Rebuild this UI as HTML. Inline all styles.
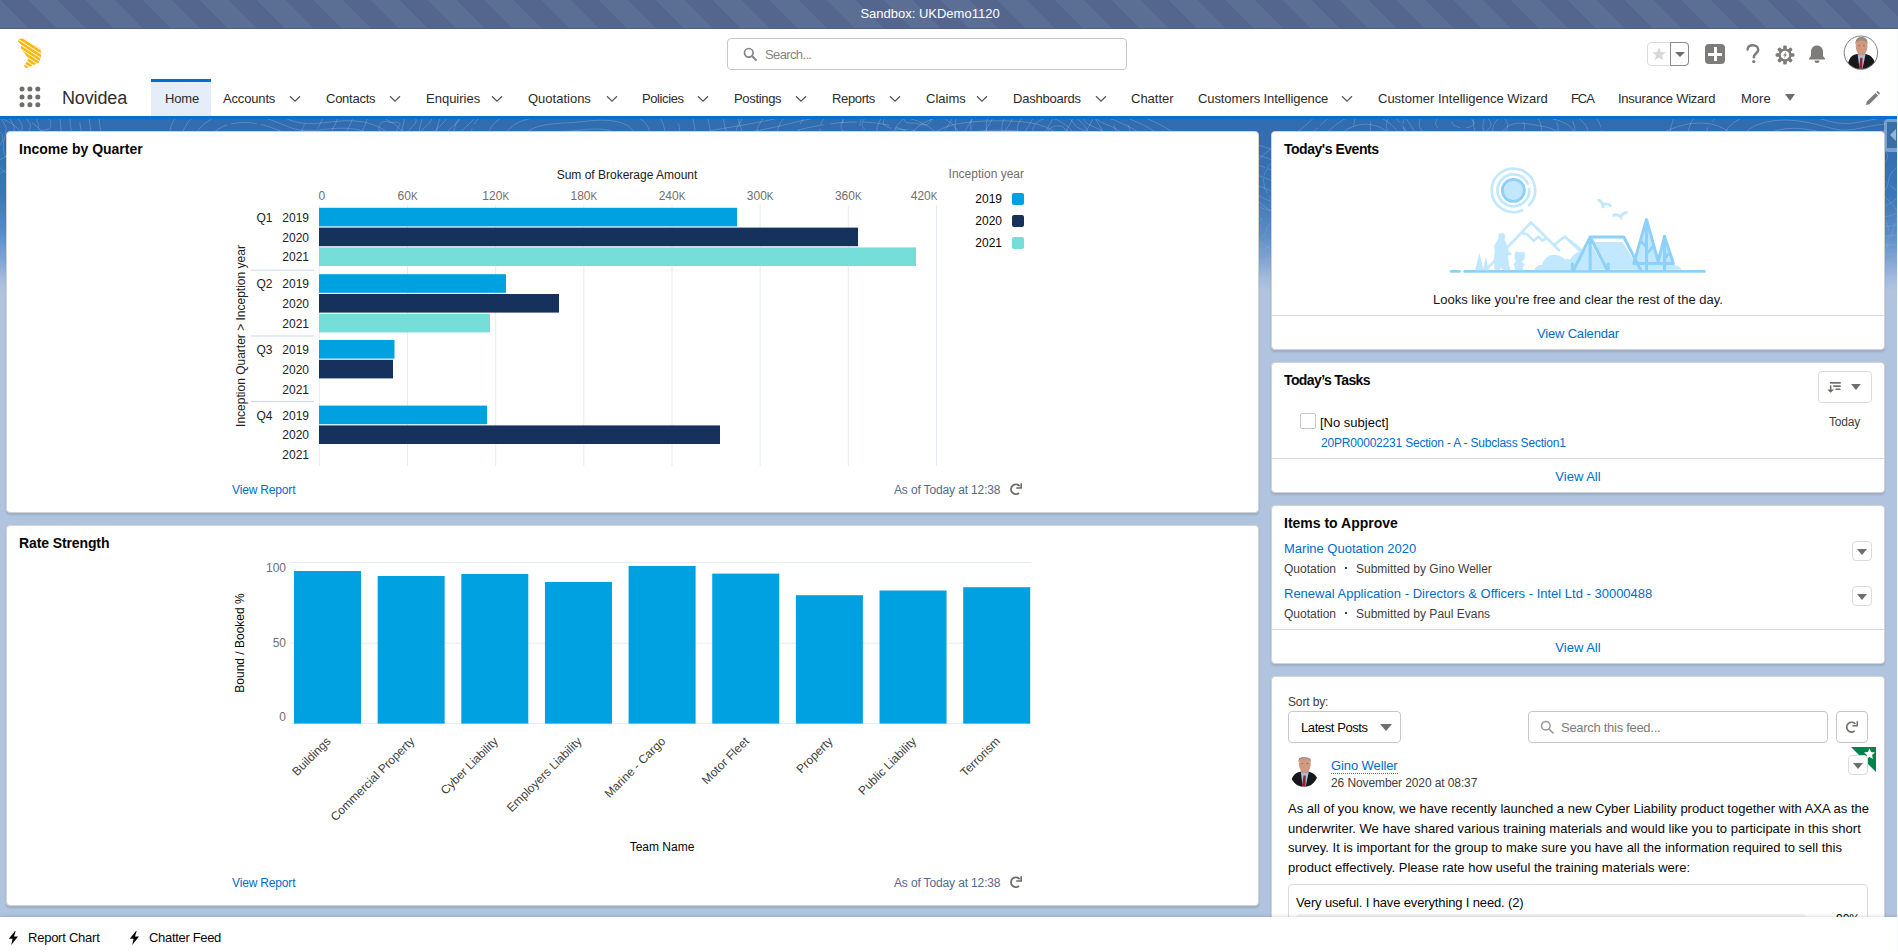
<!DOCTYPE html><html><head><meta charset="utf-8"><style>
*{box-sizing:border-box;margin:0;padding:0}
html,body{width:1898px;height:952px;overflow:hidden}
body{position:relative;font-family:"Liberation Sans",sans-serif;background:#b0c4df;color:#080707}
.a{position:absolute;white-space:nowrap}
#sandbox{left:0;top:0;width:1898px;height:29px;background:#55678f;border-bottom:1px solid #4f6189;
 background-image:repeating-linear-gradient(45deg,#5b6e94 0 20px,#54668e 20px 40.3px);background-position:0 0}
#sandbox span{position:absolute;left:0;width:1860px;top:6px;text-align:center;color:#fff;font-size:13px}
#header{left:0;top:29px;width:1898px;height:87px;background:#fff}
#navline{left:0;top:116px;width:1898px;height:3px;background:#0070d2}
#banner{left:0;top:119px;width:1898px;height:180px;
 background:linear-gradient(to bottom,#306cae 0px,#3470b3 40px,#3b76b9 75px,#5a8cc6 114px,#7fa3d2 140px,#a3badc 159px,#b0c4df 172px)}
.card{position:absolute;background:#fff;border-radius:4px;border:1px solid #d2d2d2;box-shadow:0 2px 2px rgba(0,0,0,.12)}
.ct{position:absolute;font-weight:bold;font-size:14px;color:#080707;white-space:nowrap;line-height:16px}
.t{position:absolute;white-space:nowrap;line-height:1}
.nav{position:absolute;top:92px;font-size:13px;color:#2b2b2b;white-space:nowrap;line-height:13px}
.link{color:#006dcc}
.hr{position:absolute;height:1px;background:#dddbda}
.btn{position:absolute;border:1px solid #dddbda;border-radius:4px;background:#fff}
</style></head><body>
<div id="sandbox" class="a"><span>Sandbox: UKDemo1120</span></div>
<div id="header" class="a"></div>
<div id="navline" class="a"></div>
<div id="banner" class="a"></div>
<svg class="a" style="left:17px;top:37px" width="26" height="33" viewBox="0 0 26 33">
<defs><clipPath id="lgc"><path d="M1.3 2.2 L6.2 1.0 L23.7 11.9 L24 19.5 L22 25.4 L13.3 29.6 L9.1 31.3 L7.0 28.9 L11.4 21.8 L7.2 15.7 L3.8 11.9 L4.0 8.1 L0.9 4.3Z"/></clipPath></defs>
<g clip-path="url(#lgc)" stroke="#f8b80f" stroke-width="2.6" fill="none"><line x1="-5" y1="-12" x2="40" y2="17.2"/><line x1="-5" y1="-7.9" x2="40" y2="21.3"/><line x1="-5" y1="-3.8" x2="40" y2="25.4"/><line x1="-5" y1="0.3" x2="40" y2="29.5"/><line x1="-5" y1="4.4" x2="40" y2="33.6"/><line x1="-5" y1="8.5" x2="40" y2="37.7"/><line x1="-5" y1="12.6" x2="40" y2="41.8"/><line x1="-5" y1="16.7" x2="40" y2="45.9"/><line x1="-5" y1="20.8" x2="40" y2="50"/><line x1="-5" y1="24.9" x2="40" y2="54.1"/></g></svg>
<div class="a" style="left:727px;top:38px;width:400px;height:32px;border:1px solid #c9c7c5;border-radius:4px;background:#fff"></div>
<svg class="a" style="left:743px;top:47px" width="14" height="14" viewBox="0 0 14 14"><circle cx="5.8" cy="5.8" r="4.3" fill="none" stroke="#868482" stroke-width="1.7"/><path d="M9 9 L13 13" stroke="#868482" stroke-width="1.9" stroke-linecap="round"/></svg>
<div class="t" style="left:765px;top:48px;font-size:13px;color:#868482;letter-spacing:-0.63px">Search...</div>
<div class="a" style="left:1647px;top:42px;width:42px;height:24px;border:1px solid #dddbda;border-radius:4px;background:#fff"></div>
<div class="a" style="left:1670px;top:42px;width:19px;height:24px;border:1px solid #8a8a8a;border-radius:0 4px 4px 0"></div>
<svg class="a" style="left:1651px;top:46px" width="16" height="16" viewBox="0 0 24 24"><path d="M12 2l2.9 6.9 7.1.6-5.4 4.7 1.6 7-6.2-3.8-6.2 3.8 1.6-7L2 9.5l7.1-.6z" fill="#d8d8d8"/></svg>
<div class="a" style="left:1675px;top:52px;width:0;height:0;border-left:5px solid transparent;border-right:5px solid transparent;border-top:5px solid #706e6b"></div>
<div class="a" style="left:1705px;top:44px;width:20px;height:20px;background:#7e7c7a;border-radius:4px"></div>
<div class="a" style="left:1714px;top:47px;width:2.5px;height:14px;background:#fff"></div>
<div class="a" style="left:1708px;top:53px;width:14px;height:2.5px;background:#fff"></div>
<svg class="a" style="left:1745px;top:44px" width="16" height="20" viewBox="0 0 16 20"><path d="M2.6 5.6 C2.6 2.6 5 1.2 7.8 1.2 C10.8 1.2 13.2 3 13.2 5.8 C13.2 9.4 8.8 9.6 8.8 13.2" fill="none" stroke="#7e7c7a" stroke-width="2.4" stroke-linecap="round"/><circle cx="8.8" cy="17.6" r="1.6" fill="#7e7c7a"/></svg>
<svg class="a" style="left:1775px;top:45px" width="20" height="20" viewBox="0 0 20 20"><g fill="#7e7c7a"><circle cx="10" cy="10" r="6.6"/><rect x="8.2" y="0.6" width="3.6" height="4.2" rx="1" transform="rotate(0 10 10)"/><rect x="8.2" y="0.6" width="3.6" height="4.2" rx="1" transform="rotate(45 10 10)"/><rect x="8.2" y="0.6" width="3.6" height="4.2" rx="1" transform="rotate(90 10 10)"/><rect x="8.2" y="0.6" width="3.6" height="4.2" rx="1" transform="rotate(135 10 10)"/><rect x="8.2" y="0.6" width="3.6" height="4.2" rx="1" transform="rotate(180 10 10)"/><rect x="8.2" y="0.6" width="3.6" height="4.2" rx="1" transform="rotate(225 10 10)"/><rect x="8.2" y="0.6" width="3.6" height="4.2" rx="1" transform="rotate(270 10 10)"/><rect x="8.2" y="0.6" width="3.6" height="4.2" rx="1" transform="rotate(315 10 10)"/></g><circle cx="10" cy="10" r="4.3" fill="#fff"/><path d="M11.2 6.6 L8.1 10.5 L9.9 10.5 L8.9 13.4 L12 9.4 L10.2 9.4Z" fill="#7e7c7a"/></svg>
<svg class="a" style="left:1807px;top:44px" width="20" height="20" viewBox="0 0 20 20"><path d="M10 1.5c-3.3 0-6 2.6-6 6v4.5l-2 2.5v1h16v-1l-2-2.5V7.5c0-3.4-2.7-6-6-6z" fill="#7e7c7a"/><path d="M7.5 16.5a2.5 2.5 0 0 0 5 0z" fill="#7e7c7a"/></svg>
<svg class="a" style="left:1838px;top:30px" width="46" height="46" viewBox="1838 30 46 46">
<defs><clipPath id="cav"><circle cx="1860.9" cy="52.7" r="16.3"/></clipPath></defs>
<circle cx="1860.9" cy="52.7" r="16.7" fill="#fff" stroke="#707070" stroke-width="0.9"/>
<g clip-path="url(#cav)"><g transform="translate(1861.2 37.2)"><path d="M-14 33 C-14 26 -12 19.5 -7 17.5 L-3 16.6 L4 16.6 L8 18 C12 20 14.5 25 15 33Z" fill="#17181e"/><path d="M-3.6 16.8 L4.4 16.8 L1.2 32 L-1.6 32Z" fill="#a8c1dc"/><path d="M-0.9 20.5 L1.3 20.5 L1.1 32 L-2.2 31Z" fill="#a5192b"/><rect x="-3.2" y="13" width="6.6" height="5" fill="#c98d72"/><ellipse cx="0.4" cy="9.3" rx="5.9" ry="8.4" fill="#cf9a80"/><path d="M-5.8 7.5 C-6.2 1.5 -3 -0.2 0.5 -0.2 C4.5 -0.2 6.8 2 6.4 7.5 C5.5 4.5 4 3.2 0.4 3.2 C-3 3.2 -4.8 4.5 -5.8 7.5Z" fill="#9d8c7c"/><ellipse cx="-2" cy="8.5" rx="1" ry="0.5" fill="#8a6a5a"/><ellipse cx="2.8" cy="8.5" rx="1" ry="0.5" fill="#8a6a5a"/></g></g></svg>
<svg class="a" style="left:18.5px;top:86.4px" width="22" height="22" viewBox="0 0 22 22"><g fill="#706e6b"><circle cx="3" cy="3" r="2.5"/><circle cx="10.9" cy="3" r="2.5"/><circle cx="18.8" cy="3" r="2.5"/><circle cx="3" cy="10.9" r="2.5"/><circle cx="10.9" cy="10.9" r="2.5"/><circle cx="18.8" cy="10.9" r="2.5"/><circle cx="3" cy="18.8" r="2.5"/><circle cx="10.9" cy="18.8" r="2.5"/><circle cx="18.8" cy="18.8" r="2.5"/></g></svg>
<div class="t" style="left:62px;top:89px;font-size:18px;color:#2e2e2e;letter-spacing:-0.15px">Novidea</div>
<div class="a" style="left:151px;top:79px;width:60px;height:37px;background:#e4edf8;border-top:3px solid #0070d2"></div>
<div class="nav" style="left:165px;letter-spacing:-0.17px">Home</div>
<div class="nav" style="left:223px;letter-spacing:-0.16px">Accounts</div>
<svg class="a" style="left:289px;top:94.5px" width="12" height="8" viewBox="0 0 12 8"><path d="M1 1.2 L6 6.2 L11 1.2" fill="none" stroke="#5a5856" stroke-width="1.25"/></svg>
<div class="nav" style="left:326px;letter-spacing:-0.25px">Contacts</div>
<svg class="a" style="left:389px;top:94.5px" width="12" height="8" viewBox="0 0 12 8"><path d="M1 1.2 L6 6.2 L11 1.2" fill="none" stroke="#5a5856" stroke-width="1.25"/></svg>
<div class="nav" style="left:426px">Enquiries</div>
<svg class="a" style="left:491px;top:94.5px" width="12" height="8" viewBox="0 0 12 8"><path d="M1 1.2 L6 6.2 L11 1.2" fill="none" stroke="#5a5856" stroke-width="1.25"/></svg>
<div class="nav" style="left:528px">Quotations</div>
<svg class="a" style="left:606px;top:94.5px" width="12" height="8" viewBox="0 0 12 8"><path d="M1 1.2 L6 6.2 L11 1.2" fill="none" stroke="#5a5856" stroke-width="1.25"/></svg>
<div class="nav" style="left:642px;letter-spacing:-0.39px">Policies</div>
<svg class="a" style="left:697px;top:94.5px" width="12" height="8" viewBox="0 0 12 8"><path d="M1 1.2 L6 6.2 L11 1.2" fill="none" stroke="#5a5856" stroke-width="1.25"/></svg>
<div class="nav" style="left:734px;letter-spacing:-0.32px">Postings</div>
<svg class="a" style="left:795px;top:94.5px" width="12" height="8" viewBox="0 0 12 8"><path d="M1 1.2 L6 6.2 L11 1.2" fill="none" stroke="#5a5856" stroke-width="1.25"/></svg>
<div class="nav" style="left:832px;letter-spacing:-0.36px">Reports</div>
<svg class="a" style="left:889px;top:94.5px" width="12" height="8" viewBox="0 0 12 8"><path d="M1 1.2 L6 6.2 L11 1.2" fill="none" stroke="#5a5856" stroke-width="1.25"/></svg>
<div class="nav" style="left:926px">Claims</div>
<svg class="a" style="left:976px;top:94.5px" width="12" height="8" viewBox="0 0 12 8"><path d="M1 1.2 L6 6.2 L11 1.2" fill="none" stroke="#5a5856" stroke-width="1.25"/></svg>
<div class="nav" style="left:1013px;letter-spacing:-0.23px">Dashboards</div>
<svg class="a" style="left:1095px;top:94.5px" width="12" height="8" viewBox="0 0 12 8"><path d="M1 1.2 L6 6.2 L11 1.2" fill="none" stroke="#5a5856" stroke-width="1.25"/></svg>
<div class="nav" style="left:1131px">Chatter</div>
<div class="nav" style="left:1198px;letter-spacing:-0.09px">Customers Intelligence</div>
<svg class="a" style="left:1341px;top:94.5px" width="12" height="8" viewBox="0 0 12 8"><path d="M1 1.2 L6 6.2 L11 1.2" fill="none" stroke="#5a5856" stroke-width="1.25"/></svg>
<div class="nav" style="left:1378px">Customer Intelligence Wizard</div>
<div class="nav" style="left:1571px;letter-spacing:-1.07px">FCA</div>
<div class="nav" style="left:1618px;letter-spacing:-0.25px">Insurance Wizard</div>
<div class="nav" style="left:1741px">More</div>
<div class="a" style="left:1785px;top:94px;width:0;height:0;border-left:5px solid transparent;border-right:5px solid transparent;border-top:7px solid #706e6b"></div>
<svg class="a" style="left:1865px;top:91px" width="15" height="15" viewBox="0 0 15 15"><path d="M1 14 L1.8 10.6 L10.5 1.9 L13.1 4.5 L4.4 13.2Z" fill="#7e7c7a"/><path d="M11.3 1.1 L12.1 .3 Q12.6 -.1 13.1 .3 L14.7 1.9 Q15.1 2.4 14.7 2.9 L13.9 3.7Z" fill="#7e7c7a"/></svg>
<svg class="a" style="left:0;top:119px" width="1898" height="200" viewBox="0 119 1898 200">
<defs><linearGradient id="fade" x1="0" y1="0" x2="0" y2="1"><stop offset="0" stop-color="#fff" stop-opacity="1"/><stop offset="0.45" stop-color="#fff" stop-opacity="0.7"/><stop offset="0.85" stop-color="#fff" stop-opacity="0"/></linearGradient>
<mask id="fm"><rect x="0" y="119" width="1898" height="200" fill="url(#fade)"/></mask></defs>
<g mask="url(#fm)" fill="none" stroke="rgba(255,255,255,0.2)" stroke-width="1"><path d="M-57.2 138.7 L-57.3 139.2 L-57.7 139.7 L-58.1 140.2 L-58.7 140.6 L-59.4 141.0 L-60.1 141.4 L-60.8 141.8 L-61.4 142.2 L-62.0 142.6 L-62.6 143.0 L-63.3 143.4 L-64.0 143.9 L-64.9 144.3 L-65.8 144.6 L-66.9 144.9 L-68.1 145.1 L-69.3 145.2 L-70.6 145.1 L-71.8 145.0 L-72.9 144.7 L-73.9 144.4 L-74.9 144.1 L-75.7 143.7 L-76.5 143.4 L-77.4 143.1 L-78.3 142.9 L-79.3 142.6 L-80.3 142.4 L-81.5 142.2 L-82.6 141.9 L-83.7 141.5 L-84.7 141.0 L-85.4 140.5 L-85.9 139.9 L-86.0 139.3 L-85.7 138.7 L-85.0 138.1 L-84.1 137.6 L-83.0 137.1 L-81.8 136.8 L-80.6 136.5 L-79.6 136.3 L-78.7 136.1 L-78.0 135.8 L-77.4 135.5 L-77.0 135.1 L-76.6 134.7 L-76.2 134.1 L-75.8 133.6 L-75.1 133.0 L-74.2 132.4 L-73.2 131.9 L-71.9 131.6 L-70.6 131.4 L-69.2 131.4 L-67.8 131.6 L-66.6 131.8 L-65.5 132.3 L-64.5 132.7 L-63.7 133.2 L-63.1 133.7 L-62.5 134.2 L-61.9 134.7 L-61.3 135.1 L-60.7 135.5 L-60.0 135.9 L-59.3 136.3 L-58.6 136.7 L-58.0 137.1 L-57.6 137.6 L-57.3 138.1 L-57.2 138.7"/><path d="M-37.2 138.7 L-37.5 140.0 L-38.3 141.3 L-39.5 142.5 L-41.0 143.6 L-42.7 144.6 L-44.4 145.6 L-46.0 146.5 L-47.6 147.5 L-49.2 148.5 L-50.7 149.5 L-52.4 150.6 L-54.2 151.7 L-56.3 152.7 L-58.7 153.6 L-61.4 154.3 L-64.4 154.7 L-67.5 154.9 L-70.6 154.8 L-73.6 154.4 L-76.4 153.8 L-78.9 153.0 L-81.3 152.2 L-83.4 151.3 L-85.5 150.5 L-87.6 149.8 L-89.8 149.2 L-92.3 148.6 L-95.0 148.0 L-97.8 147.4 L-100.7 146.6 L-103.5 145.7 L-105.9 144.6 L-107.8 143.2 L-108.8 141.8 L-109.0 140.2 L-108.3 138.7 L-106.7 137.2 L-104.4 135.9 L-101.6 134.8 L-98.7 134.0 L-95.7 133.3 L-93.1 132.7 L-90.8 132.2 L-89.0 131.6 L-87.7 130.8 L-86.6 129.9 L-85.7 128.7 L-84.8 127.4 L-83.5 125.9 L-81.9 124.4 L-79.7 123.1 L-77.0 121.9 L-73.9 121.0 L-70.6 120.6 L-67.1 120.5 L-63.7 120.9 L-60.6 121.6 L-57.9 122.6 L-55.5 123.8 L-53.5 125.1 L-51.8 126.4 L-50.3 127.6 L-48.9 128.7 L-47.4 129.7 L-45.8 130.7 L-44.1 131.7 L-42.4 132.6 L-40.7 133.7 L-39.3 134.8 L-38.1 136.0 L-37.4 137.3 L-37.2 138.7" stroke-dasharray="18 4"/><path d="M-17.1 138.7 L-17.6 140.8 L-18.9 142.8 L-20.9 144.8 L-23.3 146.6 L-25.9 148.2 L-28.6 149.8 L-31.3 151.3 L-33.8 152.8 L-36.3 154.4 L-38.8 156.0 L-41.5 157.7 L-44.4 159.4 L-47.8 161.1 L-51.6 162.5 L-56.0 163.6 L-60.7 164.4 L-65.6 164.7 L-70.6 164.5 L-75.4 163.8 L-79.9 162.8 L-84.0 161.6 L-87.7 160.2 L-91.1 158.9 L-94.4 157.6 L-97.8 156.5 L-101.4 155.5 L-105.3 154.6 L-109.6 153.7 L-114.2 152.7 L-118.8 151.4 L-123.3 149.9 L-127.1 148.1 L-130.1 146.0 L-131.8 143.6 L-132.1 141.1 L-130.9 138.7 L-128.4 136.3 L-124.7 134.3 L-120.3 132.6 L-115.5 131.2 L-110.8 130.1 L-106.6 129.1 L-102.9 128.3 L-100.1 127.3 L-97.9 126.1 L-96.3 124.6 L-94.8 122.8 L-93.3 120.6 L-91.3 118.3 L-88.6 115.9 L-85.2 113.7 L-80.9 111.8 L-76.0 110.4 L-70.6 109.7 L-65.0 109.6 L-59.6 110.2 L-54.6 111.4 L-50.2 113.0 L-46.4 114.9 L-43.3 117.0 L-40.5 119.0 L-38.1 120.9 L-35.8 122.7 L-33.5 124.4 L-30.9 125.9 L-28.3 127.5 L-25.5 129.0 L-22.8 130.7 L-20.5 132.5 L-18.6 134.5 L-17.4 136.5 L-17.1 138.7"/><path d="M2.9 138.7 L2.2 141.6 L0.4 144.4 L-2.2 147.1 L-5.5 149.5 L-9.2 151.8 L-12.9 153.9 L-16.6 156.0 L-20.1 158.1 L-23.5 160.3 L-26.9 162.5 L-30.5 164.9 L-34.6 167.2 L-39.2 169.5 L-44.5 171.5 L-50.5 173.0 L-57.0 174.0 L-63.8 174.4 L-70.6 174.1 L-77.2 173.3 L-83.4 171.9 L-89.0 170.2 L-94.1 168.3 L-98.8 166.5 L-103.4 164.7 L-108.0 163.2 L-112.9 161.8 L-118.3 160.6 L-124.2 159.3 L-130.5 157.9 L-136.9 156.2 L-143.0 154.2 L-148.4 151.6 L-152.4 148.7 L-154.8 145.5 L-155.2 142.1 L-153.6 138.7 L-150.1 135.5 L-145.0 132.6 L-138.9 130.3 L-132.4 128.3 L-125.9 126.8 L-120.0 125.6 L-115.1 124.4 L-111.2 123.0 L-108.2 121.4 L-105.9 119.3 L-104.0 116.8 L-101.8 113.8 L-99.1 110.6 L-95.4 107.4 L-90.6 104.3 L-84.8 101.7 L-78.0 99.9 L-70.6 98.8 L-63.0 98.8 L-55.5 99.6 L-48.7 101.2 L-42.6 103.4 L-37.4 106.0 L-33.0 108.8 L-29.3 111.6 L-26.0 114.3 L-22.8 116.8 L-19.5 119.0 L-16.1 121.2 L-12.4 123.3 L-8.6 125.4 L-4.9 127.7 L-1.7 130.2 L0.9 132.9 L2.5 135.7 L2.9 138.7"/><path d="M23.0 138.7 L22.1 142.4 L19.8 146.0 L16.4 149.4 L12.2 152.5 L7.6 155.4 L2.8 158.1 L-1.8 160.7 L-6.3 163.4 L-10.6 166.2 L-15.0 169.0 L-19.6 172.0 L-24.8 175.0 L-30.7 177.9 L-37.4 180.4 L-45.0 182.4 L-53.3 183.7 L-61.9 184.2 L-70.6 183.8 L-79.0 182.7 L-86.8 181.0 L-94.0 178.8 L-100.5 176.4 L-106.6 174.1 L-112.3 171.8 L-118.2 169.9 L-124.5 168.1 L-131.3 166.5 L-138.9 164.9 L-146.9 163.2 L-155.0 161.0 L-162.8 158.4 L-169.6 155.2 L-174.7 151.5 L-177.7 147.3 L-178.2 143.0 L-176.2 138.7 L-171.7 134.6 L-165.3 131.0 L-157.6 128.0 L-149.2 125.5 L-141.0 123.6 L-133.5 122.0 L-127.2 120.5 L-122.2 118.8 L-118.5 116.7 L-115.6 114.1 L-113.1 110.8 L-110.3 107.1 L-106.8 103.0 L-102.2 98.8 L-96.1 95.0 L-88.6 91.7 L-80.0 89.3 L-70.6 88.0 L-60.9 87.9 L-51.4 88.9 L-42.7 91.0 L-35.0 93.8 L-28.3 97.1 L-22.8 100.7 L-18.0 104.2 L-13.8 107.6 L-9.8 110.8 L-5.6 113.7 L-1.2 116.4 L3.5 119.1 L8.3 121.8 L13.0 124.7 L17.1 127.9 L20.4 131.3 L22.4 134.9 L23.0 138.7"/><path d="M43.0 138.7 L41.9 143.2 L39.2 147.5 L35.1 151.6 L29.9 155.4 L24.3 159.0 L18.5 162.3 L12.9 165.5 L7.5 168.7 L2.2 172.0 L-3.1 175.6 L-8.7 179.2 L-15.0 182.8 L-22.1 186.3 L-30.3 189.3 L-39.6 191.8 L-49.6 193.3 L-60.0 193.9 L-70.6 193.5 L-80.8 192.2 L-90.3 190.0 L-99.1 187.4 L-107.0 184.5 L-114.3 181.6 L-121.3 179.0 L-128.4 176.6 L-136.0 174.4 L-144.4 172.5 L-153.5 170.6 L-163.2 168.4 L-173.1 165.8 L-182.6 162.6 L-190.8 158.7 L-197.0 154.2 L-200.7 149.2 L-201.3 143.9 L-198.8 138.7 L-193.4 133.7 L-185.6 129.4 L-176.2 125.7 L-166.1 122.7 L-156.1 120.4 L-147.0 118.4 L-139.4 116.6 L-133.3 114.5 L-128.7 112.0 L-125.2 108.8 L-122.2 104.9 L-118.8 100.3 L-114.6 95.3 L-108.9 90.3 L-101.6 85.6 L-92.5 81.6 L-82.0 78.7 L-70.6 77.1 L-58.8 77.0 L-47.3 78.3 L-36.7 80.7 L-27.3 84.2 L-19.3 88.2 L-12.5 92.5 L-6.8 96.9 L-1.7 101.0 L3.3 104.8 L8.3 108.3 L13.6 111.6 L19.3 114.9 L25.2 118.2 L30.9 121.7 L35.9 125.6 L39.9 129.7 L42.3 134.1 L43.0 138.7" stroke-dasharray="25 7"/><path d="M50.6 123.8 L50.7 124.2 L50.7 124.7 L50.8 125.2 L50.8 125.7 L50.8 126.3 L50.7 126.8 L50.5 127.3 L50.2 127.8 L49.8 128.3 L49.3 128.7 L48.7 129.0 L48.1 129.3 L47.5 129.5 L46.8 129.7 L46.1 129.8 L45.4 130.0 L44.8 130.1 L44.1 130.2 L43.3 130.3 L42.6 130.3 L41.8 130.3 L41.1 130.2 L40.4 130.0 L39.7 129.7 L39.2 129.3 L38.7 128.8 L38.4 128.2 L38.3 127.6 L38.2 127.0 L38.3 126.4 L38.4 125.8 L38.5 125.4 L38.6 124.9 L38.6 124.5 L38.6 124.1 L38.4 123.8 L38.1 123.4 L37.8 122.9 L37.5 122.4 L37.2 121.8 L36.9 121.1 L36.8 120.5 L36.9 119.8 L37.1 119.2 L37.6 118.6 L38.1 118.2 L38.8 117.9 L39.6 117.6 L40.4 117.5 L41.2 117.5 L41.9 117.6 L42.7 117.6 L43.4 117.8 L44.1 117.8 L44.7 117.9 L45.3 118.0 L46.0 118.1 L46.6 118.2 L47.3 118.3 L47.9 118.5 L48.5 118.7 L49.1 119.0 L49.6 119.4 L49.9 119.9 L50.2 120.4 L50.4 120.9 L50.5 121.4 L50.5 121.9 L50.5 122.4 L50.5 122.9 L50.5 123.3 L50.6 123.8"/><path d="M60.4 123.8 L60.5 124.9 L60.7 126.1 L60.9 127.3 L61.0 128.6 L61.0 130.0 L60.7 131.3 L60.2 132.7 L59.4 133.9 L58.4 135.1 L57.2 136.1 L55.7 136.9 L54.2 137.6 L52.6 138.1 L50.9 138.6 L49.2 138.9 L47.5 139.3 L45.8 139.6 L44.1 139.8 L42.3 140.0 L40.4 140.1 L38.5 140.0 L36.7 139.8 L34.9 139.3 L33.3 138.5 L31.9 137.5 L30.8 136.3 L30.0 134.8 L29.6 133.3 L29.5 131.8 L29.6 130.3 L29.9 129.0 L30.2 127.7 L30.4 126.6 L30.5 125.6 L30.3 124.7 L29.9 123.8 L29.3 122.7 L28.4 121.6 L27.6 120.3 L26.8 118.8 L26.3 117.2 L26.0 115.6 L26.2 113.9 L26.8 112.3 L27.8 111.0 L29.2 109.8 L30.9 109.0 L32.8 108.4 L34.8 108.2 L36.8 108.1 L38.8 108.3 L40.6 108.5 L42.4 108.7 L44.1 109.0 L45.7 109.2 L47.3 109.4 L48.9 109.5 L50.5 109.8 L52.2 110.1 L53.8 110.5 L55.3 111.1 L56.7 111.9 L57.8 112.9 L58.8 114.0 L59.4 115.3 L59.9 116.6 L60.1 117.9 L60.2 119.1 L60.2 120.3 L60.2 121.5 L60.3 122.6 L60.4 123.8"/><path d="M70.2 123.8 L70.4 125.6 L70.8 127.5 L71.1 129.5 L71.2 131.6 L71.1 133.7 L70.7 135.9 L69.9 138.0 L68.7 140.1 L67.0 141.9 L65.0 143.5 L62.8 144.8 L60.3 145.9 L57.7 146.8 L55.0 147.5 L52.3 148.1 L49.6 148.6 L46.9 149.0 L44.1 149.4 L41.2 149.7 L38.2 149.9 L35.2 149.8 L32.2 149.4 L29.4 148.6 L26.8 147.3 L24.5 145.7 L22.8 143.7 L21.5 141.5 L20.9 139.1 L20.7 136.7 L20.9 134.3 L21.4 132.1 L21.9 130.1 L22.3 128.4 L22.4 126.8 L22.1 125.3 L21.4 123.8 L20.4 122.1 L19.1 120.3 L17.7 118.2 L16.5 115.8 L15.6 113.3 L15.2 110.6 L15.4 108.0 L16.4 105.5 L18.1 103.3 L20.3 101.5 L23.1 100.1 L26.1 99.3 L29.3 98.8 L32.5 98.8 L35.6 99.0 L38.6 99.3 L41.4 99.7 L44.1 100.1 L46.6 100.4 L49.2 100.7 L51.8 101.0 L54.4 101.3 L57.0 101.8 L59.6 102.6 L62.0 103.6 L64.2 104.8 L66.1 106.4 L67.6 108.2 L68.7 110.2 L69.4 112.2 L69.8 114.3 L69.9 116.3 L70.0 118.3 L70.0 120.2 L70.0 122.0 L70.2 123.8"/><path d="M80.0 123.8 L80.3 126.3 L80.8 128.9 L81.2 131.6 L81.4 134.5 L81.3 137.5 L80.7 140.5 L79.6 143.4 L77.9 146.2 L75.7 148.7 L72.9 150.9 L69.8 152.7 L66.3 154.2 L62.8 155.4 L59.1 156.4 L55.4 157.2 L51.7 157.9 L47.9 158.5 L44.1 159.1 L40.1 159.5 L36.0 159.7 L31.9 159.5 L27.8 158.9 L23.9 157.9 L20.3 156.2 L17.2 154.0 L14.8 151.2 L13.1 148.2 L12.2 144.8 L11.9 141.5 L12.2 138.2 L12.9 135.2 L13.6 132.5 L14.1 130.1 L14.2 127.9 L13.9 125.8 L12.9 123.8 L11.5 121.5 L9.7 119.0 L7.8 116.1 L6.1 112.9 L4.9 109.4 L4.4 105.7 L4.7 102.1 L6.0 98.6 L8.3 95.6 L11.4 93.1 L15.2 91.3 L19.4 90.1 L23.8 89.5 L28.2 89.4 L32.5 89.7 L36.5 90.1 L40.4 90.7 L44.1 91.2 L47.6 91.7 L51.1 92.1 L54.7 92.5 L58.3 92.9 L61.9 93.6 L65.4 94.6 L68.7 96.0 L71.8 97.7 L74.3 99.9 L76.4 102.4 L77.9 105.1 L78.9 107.9 L79.4 110.8 L79.6 113.6 L79.7 116.2 L79.7 118.8 L79.8 121.3 L80.0 123.8" stroke-dasharray="30 5"/><path d="M89.8 123.8 L90.2 126.9 L90.8 130.3 L91.3 133.7 L91.6 137.4 L91.5 141.2 L90.7 145.0 L89.3 148.7 L87.2 152.3 L84.3 155.5 L80.8 158.3 L76.8 160.6 L72.4 162.5 L67.9 164.0 L63.2 165.2 L58.5 166.3 L53.8 167.2 L49.0 168.0 L44.1 168.7 L39.0 169.2 L33.8 169.4 L28.6 169.3 L23.4 168.5 L18.4 167.2 L13.8 165.0 L9.9 162.2 L6.8 158.7 L4.7 154.8 L3.5 150.6 L3.2 146.3 L3.6 142.2 L4.4 138.4 L5.3 134.9 L5.9 131.8 L6.1 129.0 L5.6 126.4 L4.4 123.8 L2.6 120.9 L0.3 117.7 L-2.1 114.0 L-4.2 109.9 L-5.8 105.4 L-6.5 100.8 L-6.0 96.1 L-4.3 91.8 L-1.4 87.9 L2.5 84.7 L7.3 82.4 L12.6 80.9 L18.2 80.1 L23.9 80.0 L29.3 80.4 L34.5 81.0 L39.4 81.7 L44.1 82.3 L48.6 82.9 L53.1 83.4 L57.6 83.9 L62.2 84.5 L66.7 85.4 L71.2 86.7 L75.5 88.4 L79.3 90.6 L82.6 93.4 L85.2 96.5 L87.1 100.0 L88.4 103.6 L89.1 107.2 L89.3 110.8 L89.4 114.2 L89.4 117.5 L89.5 120.6 L89.8 123.8"/><path d="M99.6 123.8 L100.1 127.6 L100.8 131.7 L101.4 135.9 L101.8 140.3 L101.6 144.9 L100.7 149.6 L99.0 154.1 L96.4 158.4 L92.9 162.3 L88.6 165.6 L83.8 168.5 L78.5 170.8 L73.0 172.6 L67.3 174.1 L61.6 175.4 L55.8 176.5 L50.0 177.4 L44.1 178.3 L37.9 178.9 L31.6 179.2 L25.3 179.0 L18.9 178.1 L12.9 176.4 L7.3 173.9 L2.6 170.4 L-1.2 166.2 L-3.8 161.5 L-5.2 156.3 L-5.6 151.2 L-5.1 146.1 L-4.1 141.5 L-3.1 137.3 L-2.2 133.5 L-2.0 130.2 L-2.6 127.0 L-4.0 123.8 L-6.3 120.3 L-9.0 116.4 L-11.9 111.9 L-14.6 106.9 L-16.5 101.5 L-17.3 95.8 L-16.7 90.2 L-14.7 84.9 L-11.2 80.2 L-6.4 76.4 L-0.6 73.5 L5.9 71.7 L12.7 70.8 L19.5 70.6 L26.1 71.1 L32.4 71.8 L38.4 72.7 L44.1 73.5 L49.6 74.2 L55.0 74.8 L60.5 75.4 L66.1 76.1 L71.6 77.2 L77.1 78.7 L82.2 80.8 L86.9 83.5 L90.9 86.9 L94.1 90.7 L96.4 94.9 L97.9 99.3 L98.7 103.7 L99.0 108.0 L99.1 112.1 L99.1 116.1 L99.2 120.0 L99.6 123.8"/><path d="M140.9 179.5 L140.7 180.0 L140.4 180.5 L140.1 181.0 L139.7 181.5 L139.4 181.9 L139.0 182.4 L138.7 182.8 L138.3 183.2 L137.9 183.7 L137.4 184.0 L136.9 184.4 L136.3 184.7 L135.6 184.9 L134.9 185.1 L134.2 185.2 L133.5 185.2 L132.8 185.1 L132.2 185.0 L131.5 184.8 L130.9 184.7 L130.3 184.5 L129.8 184.3 L129.2 184.1 L128.6 184.0 L128.0 183.8 L127.3 183.7 L126.7 183.5 L125.9 183.3 L125.2 183.0 L124.5 182.7 L123.9 182.3 L123.3 181.8 L122.8 181.3 L122.5 180.7 L122.3 180.1 L122.3 179.5 L122.4 178.9 L122.7 178.3 L123.1 177.7 L123.6 177.2 L124.1 176.7 L124.7 176.3 L125.4 176.0 L126.0 175.7 L126.7 175.5 L127.3 175.3 L128.0 175.1 L128.6 175.0 L129.2 174.8 L129.8 174.7 L130.4 174.6 L131.0 174.6 L131.6 174.5 L132.2 174.4 L132.8 174.3 L133.4 174.3 L134.1 174.3 L134.8 174.2 L135.5 174.2 L136.2 174.3 L137.0 174.4 L137.8 174.6 L138.5 174.8 L139.2 175.2 L139.8 175.6 L140.3 176.0 L140.7 176.6 L141.0 177.1 L141.1 177.7 L141.2 178.3 L141.1 178.9 L140.9 179.5"/><path d="M154.0 179.5 L153.4 180.8 L152.7 182.1 L151.9 183.4 L151.1 184.5 L150.3 185.7 L149.4 186.8 L148.5 187.8 L147.5 188.9 L146.4 189.9 L145.3 190.9 L143.9 191.8 L142.4 192.5 L140.8 193.1 L139.1 193.5 L137.4 193.7 L135.6 193.7 L133.8 193.6 L132.2 193.3 L130.5 192.9 L129.0 192.4 L127.6 192.0 L126.2 191.5 L124.8 191.1 L123.3 190.7 L121.8 190.3 L120.1 189.9 L118.4 189.5 L116.6 189.0 L114.8 188.3 L113.1 187.5 L111.5 186.5 L110.0 185.4 L108.9 184.0 L108.0 182.6 L107.6 181.1 L107.5 179.5 L107.8 177.9 L108.5 176.4 L109.5 175.0 L110.7 173.8 L112.1 172.6 L113.6 171.6 L115.2 170.8 L116.8 170.1 L118.5 169.5 L120.1 169.0 L121.7 168.5 L123.2 168.2 L124.7 167.9 L126.2 167.6 L127.7 167.4 L129.2 167.2 L130.7 167.0 L132.2 166.8 L133.7 166.7 L135.3 166.5 L136.9 166.4 L138.7 166.4 L140.5 166.4 L142.4 166.5 L144.3 166.8 L146.2 167.3 L148.0 167.9 L149.7 168.7 L151.3 169.7 L152.6 170.9 L153.6 172.2 L154.2 173.6 L154.6 175.1 L154.7 176.6 L154.5 178.1 L154.0 179.5" stroke-dasharray="17 4"/><path d="M167.2 179.5 L166.2 181.7 L165.1 183.7 L163.8 185.7 L162.5 187.5 L161.1 189.4 L159.7 191.1 L158.3 192.9 L156.7 194.6 L155.0 196.2 L153.1 197.7 L151.0 199.1 L148.6 200.3 L146.1 201.3 L143.3 201.9 L140.5 202.3 L137.7 202.3 L134.9 202.0 L132.2 201.6 L129.6 200.9 L127.2 200.2 L124.8 199.4 L122.6 198.7 L120.3 198.0 L118.0 197.4 L115.5 196.8 L112.9 196.2 L110.2 195.5 L107.3 194.7 L104.5 193.7 L101.6 192.4 L99.0 190.8 L96.8 188.9 L94.9 186.8 L93.6 184.5 L92.9 182.0 L92.8 179.5 L93.3 177.0 L94.3 174.6 L95.8 172.4 L97.8 170.3 L100.0 168.5 L102.4 166.9 L105.0 165.6 L107.6 164.4 L110.2 163.5 L112.8 162.6 L115.4 162.0 L117.9 161.4 L120.3 160.9 L122.7 160.5 L125.1 160.1 L127.4 159.8 L129.8 159.5 L132.2 159.2 L134.6 159.0 L137.2 158.7 L139.8 158.6 L142.6 158.5 L145.5 158.5 L148.5 158.8 L151.6 159.2 L154.6 159.9 L157.5 160.9 L160.3 162.2 L162.7 163.8 L164.8 165.7 L166.4 167.8 L167.5 170.1 L168.1 172.4 L168.2 174.8 L167.9 177.2 L167.2 179.5"/><path d="M180.3 179.5 L179.0 182.5 L177.4 185.3 L175.7 188.0 L173.9 190.6 L172.0 193.1 L170.1 195.5 L168.1 197.9 L165.9 200.2 L163.6 202.5 L161.0 204.6 L158.0 206.5 L154.8 208.2 L151.3 209.4 L147.5 210.3 L143.6 210.8 L139.7 210.8 L135.9 210.5 L132.2 209.8 L128.6 209.0 L125.3 208.0 L122.1 206.9 L119.0 205.9 L115.9 205.0 L112.7 204.2 L109.3 203.3 L105.7 202.5 L101.9 201.6 L98.0 200.4 L94.1 199.0 L90.2 197.2 L86.6 195.0 L83.5 192.4 L80.9 189.5 L79.1 186.3 L78.1 182.9 L78.0 179.5 L78.7 176.1 L80.1 172.8 L82.2 169.7 L84.9 166.9 L87.9 164.4 L91.3 162.2 L94.8 160.4 L98.4 158.8 L102.0 157.5 L105.6 156.3 L109.1 155.4 L112.5 154.6 L115.9 153.9 L119.1 153.4 L122.4 152.9 L125.6 152.4 L128.9 152.0 L132.2 151.6 L135.5 151.3 L139.0 151.0 L142.7 150.7 L146.5 150.6 L150.5 150.7 L154.6 151.0 L158.8 151.6 L163.0 152.6 L167.1 154.0 L170.8 155.8 L174.2 158.0 L177.0 160.5 L179.2 163.4 L180.8 166.5 L181.6 169.8 L181.7 173.1 L181.3 176.3 L180.3 179.5"/><path d="M193.5 179.5 L191.8 183.3 L189.8 186.9 L187.5 190.3 L185.2 193.6 L182.9 196.8 L180.4 199.9 L177.9 202.9 L175.2 205.9 L172.2 208.7 L168.8 211.4 L165.1 213.9 L161.0 216.0 L156.5 217.6 L151.7 218.7 L146.8 219.3 L141.8 219.4 L136.9 218.9 L132.2 218.1 L127.7 217.0 L123.4 215.7 L119.3 214.4 L115.4 213.1 L111.4 212.0 L107.4 210.9 L103.1 209.8 L98.5 208.8 L93.7 207.6 L88.7 206.1 L83.7 204.3 L78.8 202.0 L74.2 199.2 L70.2 196.0 L67.0 192.2 L64.7 188.2 L63.4 183.9 L63.2 179.5 L64.1 175.1 L65.9 170.9 L68.6 167.0 L72.0 163.5 L75.9 160.3 L80.2 157.5 L84.6 155.2 L89.2 153.1 L93.8 151.4 L98.3 150.0 L102.8 148.8 L107.1 147.8 L111.4 147.0 L115.6 146.2 L119.7 145.6 L123.8 145.0 L128.0 144.5 L132.2 144.0 L136.5 143.6 L140.9 143.2 L145.6 142.9 L150.4 142.8 L155.5 142.9 L160.8 143.2 L166.1 144.0 L171.4 145.3 L176.6 147.0 L181.4 149.3 L185.7 152.1 L189.3 155.4 L192.1 159.1 L194.0 163.0 L195.1 167.2 L195.3 171.3 L194.7 175.5 L193.5 179.5"/><path d="M206.6 179.5 L204.5 184.1 L202.1 188.5 L199.4 192.7 L196.6 196.6 L193.7 200.5 L190.8 204.2 L187.7 207.9 L184.4 211.5 L180.7 215.0 L176.7 218.3 L172.2 221.3 L167.2 223.8 L161.7 225.8 L155.9 227.2 L149.9 227.9 L143.8 227.9 L137.9 227.4 L132.2 226.4 L126.7 225.0 L121.5 223.5 L116.6 221.9 L111.8 220.3 L107.0 218.9 L102.0 217.6 L96.8 216.4 L91.3 215.1 L85.5 213.6 L79.4 211.8 L73.3 209.6 L67.3 206.8 L61.8 203.5 L56.9 199.5 L53.0 195.0 L50.2 190.0 L48.7 184.8 L48.4 179.5 L49.5 174.2 L51.7 169.1 L55.0 164.4 L59.1 160.0 L63.8 156.2 L69.0 152.8 L74.5 149.9 L80.0 147.5 L85.6 145.4 L91.1 143.7 L96.5 142.3 L101.8 141.0 L107.0 140.0 L112.1 139.1 L117.1 138.3 L122.1 137.6 L127.1 137.0 L132.2 136.4 L137.4 135.9 L142.8 135.4 L148.4 135.0 L154.4 134.9 L160.5 135.0 L166.9 135.5 L173.4 136.4 L179.8 137.9 L186.1 140.1 L191.9 142.8 L197.1 146.2 L201.5 150.2 L204.9 154.7 L207.3 159.5 L208.5 164.5 L208.8 169.6 L208.1 174.6 L206.6 179.5"/><path d="M210.5 206.4 L210.2 207.0 L209.8 207.5 L209.4 207.9 L209.0 208.4 L208.5 208.9 L208.0 209.3 L207.6 209.7 L207.0 210.2 L206.4 210.6 L205.7 210.9 L204.9 211.3 L204.1 211.5 L203.2 211.7 L202.2 211.8 L201.3 211.9 L200.3 211.9 L199.4 211.9 L198.5 211.8 L197.6 211.8 L196.7 211.8 L195.8 211.7 L194.8 211.7 L193.8 211.7 L192.7 211.7 L191.6 211.6 L190.4 211.4 L189.3 211.2 L188.4 210.9 L187.5 210.4 L186.9 209.9 L186.5 209.3 L186.3 208.7 L186.4 208.1 L186.6 207.5 L187.1 206.9 L187.5 206.4 L188.1 205.9 L188.5 205.5 L189.0 205.1 L189.3 204.7 L189.5 204.2 L189.7 203.8 L189.9 203.3 L190.2 202.7 L190.5 202.2 L190.9 201.7 L191.5 201.2 L192.3 200.8 L193.2 200.5 L194.2 200.3 L195.3 200.2 L196.4 200.2 L197.5 200.3 L198.5 200.5 L199.4 200.7 L200.3 200.9 L201.2 201.1 L202.0 201.3 L202.9 201.5 L203.7 201.6 L204.7 201.8 L205.6 202.0 L206.6 202.2 L207.6 202.4 L208.5 202.7 L209.3 203.1 L209.9 203.6 L210.4 204.1 L210.7 204.7 L210.8 205.3 L210.7 205.9 L210.5 206.4"/><path d="M228.6 206.4 L227.8 207.8 L226.8 209.0 L225.8 210.2 L224.7 211.4 L223.6 212.5 L222.4 213.7 L221.2 214.7 L219.8 215.8 L218.3 216.8 L216.6 217.7 L214.6 218.5 L212.5 219.2 L210.3 219.7 L207.9 220.0 L205.5 220.1 L203.1 220.1 L200.8 220.1 L198.5 220.0 L196.2 219.9 L194.0 219.8 L191.7 219.7 L189.2 219.7 L186.7 219.7 L184.0 219.6 L181.2 219.4 L178.4 219.0 L175.6 218.4 L173.2 217.6 L171.1 216.5 L169.5 215.2 L168.5 213.8 L168.1 212.2 L168.2 210.7 L168.9 209.2 L169.9 207.7 L171.1 206.4 L172.4 205.2 L173.6 204.1 L174.7 203.1 L175.5 202.0 L176.1 200.9 L176.6 199.8 L177.1 198.6 L177.7 197.3 L178.5 195.9 L179.6 194.6 L181.1 193.4 L183.1 192.4 L185.3 191.6 L187.9 191.1 L190.5 190.9 L193.3 190.9 L195.9 191.2 L198.5 191.6 L200.9 192.1 L203.1 192.7 L205.2 193.2 L207.3 193.7 L209.4 194.1 L211.6 194.5 L213.9 194.9 L216.3 195.3 L218.8 195.8 L221.2 196.4 L223.4 197.2 L225.4 198.3 L227.1 199.4 L228.3 200.7 L229.0 202.1 L229.3 203.6 L229.1 205.0 L228.6 206.4"/><path d="M246.6 206.4 L245.3 208.6 L243.8 210.6 L242.1 212.6 L240.4 214.4 L238.6 216.2 L236.8 218.0 L234.8 219.7 L232.6 221.4 L230.2 223.0 L227.4 224.5 L224.3 225.8 L220.9 226.8 L217.3 227.6 L213.5 228.1 L209.7 228.3 L205.9 228.4 L202.1 228.3 L198.5 228.1 L194.9 227.9 L191.3 227.8 L187.6 227.7 L183.7 227.7 L179.6 227.6 L175.3 227.5 L170.8 227.1 L166.3 226.5 L162.0 225.6 L158.0 224.2 L154.6 222.5 L152.1 220.5 L150.5 218.2 L149.8 215.7 L150.1 213.2 L151.1 210.8 L152.8 208.5 L154.7 206.4 L156.8 204.5 L158.7 202.7 L160.4 201.1 L161.7 199.4 L162.7 197.7 L163.5 195.8 L164.2 193.8 L165.2 191.8 L166.5 189.6 L168.3 187.5 L170.7 185.6 L173.8 184.0 L177.4 182.7 L181.5 181.9 L185.8 181.6 L190.1 181.6 L194.4 182.0 L198.5 182.7 L202.3 183.6 L205.9 184.5 L209.3 185.3 L212.6 186.1 L216.0 186.7 L219.5 187.3 L223.2 187.9 L227.0 188.6 L230.9 189.4 L234.8 190.4 L238.4 191.8 L241.6 193.4 L244.2 195.2 L246.1 197.3 L247.3 199.5 L247.7 201.9 L247.4 204.2 L246.6 206.4" stroke-dasharray="10 4"/><path d="M264.6 206.4 L262.9 209.4 L260.8 212.2 L258.5 214.9 L256.1 217.4 L253.7 219.9 L251.1 222.4 L248.4 224.7 L245.4 227.1 L242.1 229.3 L238.3 231.3 L234.0 233.1 L229.4 234.5 L224.4 235.5 L219.2 236.2 L213.9 236.6 L208.6 236.6 L203.5 236.5 L198.5 236.3 L193.5 236.0 L188.6 235.8 L183.5 235.7 L178.2 235.7 L172.5 235.6 L166.6 235.4 L160.4 234.9 L154.2 234.1 L148.3 232.8 L142.8 230.9 L138.2 228.6 L134.7 225.7 L132.4 222.6 L131.5 219.2 L131.9 215.8 L133.4 212.4 L135.6 209.3 L138.3 206.4 L141.2 203.8 L143.8 201.4 L146.1 199.1 L147.9 196.8 L149.3 194.4 L150.4 191.8 L151.4 189.1 L152.7 186.3 L154.5 183.3 L157.0 180.5 L160.3 177.8 L164.6 175.6 L169.5 173.9 L175.1 172.7 L181.0 172.2 L187.0 172.3 L192.9 172.9 L198.5 173.8 L203.7 175.0 L208.6 176.2 L213.3 177.4 L217.9 178.4 L222.5 179.4 L227.4 180.2 L232.4 181.0 L237.7 181.9 L243.1 183.0 L248.4 184.4 L253.4 186.3 L257.8 188.5 L261.4 191.0 L264.0 193.9 L265.6 197.0 L266.2 200.2 L265.8 203.3 L264.6 206.4" stroke-dasharray="29 4"/><path d="M282.7 206.4 L280.5 210.2 L277.8 213.8 L274.9 217.2 L271.8 220.4 L268.7 223.6 L265.5 226.7 L262.0 229.7 L258.2 232.7 L254.0 235.5 L249.1 238.1 L243.7 240.3 L237.8 242.1 L231.4 243.5 L224.8 244.4 L218.1 244.8 L211.4 244.9 L204.9 244.7 L198.5 244.4 L192.2 244.1 L185.9 243.9 L179.4 243.7 L172.6 243.7 L165.5 243.6 L157.9 243.3 L150.0 242.7 L142.2 241.6 L134.6 239.9 L127.6 237.6 L121.8 234.6 L117.3 231.0 L114.4 227.0 L113.3 222.7 L113.8 218.3 L115.6 214.1 L118.5 210.1 L122.0 206.4 L125.6 203.1 L128.9 200.0 L131.8 197.0 L134.1 194.1 L135.9 191.1 L137.2 187.9 L138.6 184.4 L140.2 180.8 L142.5 177.0 L145.7 173.4 L149.9 170.1 L155.3 167.2 L161.7 165.0 L168.7 163.6 L176.3 162.9 L183.9 163.0 L191.4 163.8 L198.5 165.0 L205.1 166.4 L211.4 168.0 L217.4 169.5 L223.2 170.8 L229.1 172.0 L235.2 173.0 L241.7 174.1 L248.4 175.2 L255.3 176.6 L262.0 178.5 L268.3 180.8 L273.9 183.6 L278.5 186.8 L281.9 190.5 L283.9 194.4 L284.6 198.4 L284.2 202.5 L282.7 206.4" stroke-dasharray="26 4"/><path d="M300.7 206.4 L298.1 211.0 L294.8 215.3 L291.3 219.5 L287.6 223.4 L283.8 227.3 L279.8 231.0 L275.6 234.7 L271.0 238.3 L265.8 241.7 L260.0 244.9 L253.4 247.6 L246.2 249.8 L238.5 251.4 L230.5 252.5 L222.3 253.0 L214.2 253.1 L206.2 252.9 L198.5 252.5 L190.8 252.2 L183.2 251.9 L175.3 251.7 L167.1 251.7 L158.4 251.5 L149.2 251.2 L139.7 250.5 L130.1 249.2 L120.9 247.1 L112.4 244.3 L105.3 240.6 L99.9 236.3 L96.4 231.4 L95.0 226.2 L95.6 220.9 L97.9 215.7 L101.3 210.9 L105.6 206.4 L109.9 202.3 L114.0 198.6 L117.6 195.0 L120.3 191.5 L122.4 187.8 L124.1 183.9 L125.7 179.7 L127.7 175.3 L130.5 170.7 L134.4 166.3 L139.5 162.3 L146.1 158.8 L153.8 156.1 L162.4 154.4 L171.5 153.6 L180.8 153.7 L189.8 154.6 L198.5 156.1 L206.6 157.9 L214.2 159.7 L221.4 161.6 L228.5 163.2 L235.7 164.6 L243.1 165.9 L250.9 167.1 L259.1 168.5 L267.4 170.3 L275.6 172.5 L283.3 175.3 L290.1 178.7 L295.7 182.6 L299.8 187.1 L302.2 191.8 L303.1 196.7 L302.5 201.6 L300.7 206.4" stroke-dasharray="8 4"/><path d="M318.8 206.4 L315.7 211.8 L311.8 216.9 L307.6 221.8 L303.3 226.4 L298.8 231.0 L294.2 235.4 L289.2 239.7 L283.8 244.0 L277.7 248.0 L270.8 251.7 L263.1 254.8 L254.7 257.4 L245.6 259.4 L236.1 260.6 L226.5 261.2 L216.9 261.3 L207.6 261.1 L198.5 260.7 L189.5 260.3 L180.5 259.9 L171.2 259.7 L161.6 259.6 L151.3 259.5 L140.5 259.1 L129.3 258.3 L118.0 256.7 L107.2 254.3 L97.3 251.0 L88.9 246.7 L82.5 241.5 L78.4 235.8 L76.8 229.6 L77.5 223.4 L80.1 217.4 L84.2 211.7 L89.2 206.4 L94.3 201.6 L99.1 197.2 L103.3 193.0 L106.5 188.9 L109.0 184.5 L111.0 179.9 L112.9 175.0 L115.2 169.8 L118.5 164.4 L123.0 159.3 L129.1 154.5 L136.8 150.4 L145.9 147.2 L156.0 145.2 L166.7 144.3 L177.6 144.4 L188.3 145.5 L198.5 147.2 L208.0 149.3 L216.9 151.5 L225.4 153.6 L233.8 155.5 L242.2 157.2 L251.0 158.7 L260.2 160.2 L269.8 161.8 L279.6 163.9 L289.2 166.5 L298.3 169.8 L306.3 173.8 L312.8 178.4 L317.6 183.7 L320.5 189.3 L321.6 195.0 L320.9 200.8 L318.8 206.4"/><path d="M336.8 206.4 L333.2 212.6 L328.8 218.5 L324.0 224.1 L319.0 229.4 L313.8 234.6 L308.5 239.7 L302.8 244.7 L296.6 249.6 L289.6 254.2 L281.7 258.4 L272.8 262.1 L263.1 265.1 L252.6 267.3 L241.7 268.8 L230.7 269.5 L219.7 269.6 L209.0 269.3 L198.5 268.8 L188.2 268.3 L177.8 268.0 L167.2 267.7 L156.0 267.6 L144.2 267.5 L131.8 267.0 L118.9 266.0 L105.9 264.3 L93.5 261.5 L82.1 257.6 L72.4 252.7 L65.1 246.8 L60.4 240.2 L58.5 233.1 L59.3 226.0 L62.3 219.0 L67.1 212.4 L72.8 206.4 L78.7 200.9 L84.2 195.8 L89.0 191.0 L92.7 186.2 L95.6 181.2 L97.9 175.9 L100.0 170.3 L102.7 164.3 L106.5 158.1 L111.7 152.2 L118.7 146.7 L127.6 142.0 L138.0 138.4 L149.6 136.0 L162.0 134.9 L174.5 135.1 L186.8 136.3 L198.5 138.3 L209.4 140.7 L219.7 143.3 L229.5 145.7 L239.1 147.9 L248.8 149.8 L258.9 151.6 L269.4 153.2 L280.5 155.1 L291.7 157.5 L302.8 160.5 L313.2 164.3 L322.5 168.9 L330.0 174.2 L335.5 180.2 L338.9 186.7 L340.0 193.3 L339.2 200.0 L336.8 206.4"/><path d="M298.8 192.4 L298.6 192.8 L298.5 193.3 L298.4 193.7 L298.4 194.2 L298.5 194.7 L298.5 195.3 L298.5 195.9 L298.4 196.5 L298.2 197.1 L297.8 197.7 L297.3 198.2 L296.7 198.6 L296.0 198.9 L295.3 199.0 L294.5 199.1 L293.7 199.0 L293.0 198.9 L292.2 198.7 L291.6 198.5 L291.0 198.2 L290.4 198.0 L289.8 197.7 L289.3 197.5 L288.8 197.2 L288.3 196.9 L287.8 196.6 L287.4 196.3 L287.0 195.9 L286.8 195.5 L286.5 195.0 L286.3 194.6 L286.2 194.1 L286.1 193.7 L285.9 193.3 L285.8 192.8 L285.6 192.4 L285.3 191.9 L285.1 191.4 L284.8 190.8 L284.6 190.2 L284.5 189.5 L284.5 188.8 L284.7 188.2 L285.0 187.6 L285.6 187.1 L286.2 186.7 L287.0 186.4 L287.8 186.3 L288.7 186.3 L289.6 186.5 L290.3 186.7 L291.1 187.0 L291.7 187.2 L292.2 187.5 L292.8 187.6 L293.3 187.7 L293.8 187.6 L294.4 187.6 L295.1 187.5 L295.8 187.5 L296.6 187.5 L297.3 187.6 L298.0 187.8 L298.6 188.1 L299.1 188.6 L299.4 189.1 L299.6 189.7 L299.6 190.3 L299.5 190.8 L299.3 191.4 L299.0 191.9 L298.8 192.4"/><path d="M308.6 192.4 L308.1 193.5 L307.8 194.6 L307.7 195.7 L307.7 196.9 L307.8 198.2 L307.9 199.6 L307.9 201.1 L307.6 202.7 L307.1 204.2 L306.2 205.7 L305.0 206.9 L303.5 207.9 L301.7 208.6 L299.8 209.0 L297.9 209.1 L295.9 208.9 L294.0 208.6 L292.2 208.1 L290.6 207.6 L289.0 207.0 L287.6 206.3 L286.2 205.7 L284.8 205.1 L283.5 204.5 L282.3 203.7 L281.1 202.9 L280.1 202.1 L279.2 201.1 L278.5 200.1 L277.9 199.0 L277.5 197.9 L277.1 196.8 L276.8 195.7 L276.4 194.6 L276.0 193.5 L275.5 192.4 L274.9 191.2 L274.3 189.9 L273.7 188.4 L273.2 186.9 L272.9 185.2 L272.9 183.5 L273.4 181.9 L274.2 180.3 L275.5 179.0 L277.2 178.1 L279.1 177.4 L281.2 177.2 L283.4 177.3 L285.5 177.6 L287.5 178.2 L289.3 178.9 L290.8 179.5 L292.2 180.0 L293.6 180.4 L294.9 180.5 L296.2 180.5 L297.7 180.4 L299.4 180.2 L301.2 180.1 L303.1 180.1 L304.9 180.3 L306.7 180.9 L308.2 181.7 L309.4 182.8 L310.2 184.1 L310.6 185.6 L310.6 187.1 L310.3 188.5 L309.8 189.9 L309.2 191.2 L308.6 192.4"/><path d="M318.4 192.4 L317.6 194.2 L317.1 195.9 L316.9 197.7 L316.9 199.6 L317.1 201.6 L317.3 203.9 L317.2 206.3 L316.8 208.8 L316.0 211.3 L314.6 213.6 L312.6 215.6 L310.2 217.2 L307.4 218.3 L304.4 219.0 L301.2 219.1 L298.1 218.9 L295.1 218.3 L292.2 217.5 L289.6 216.6 L287.1 215.7 L284.7 214.7 L282.5 213.7 L280.4 212.7 L278.3 211.7 L276.3 210.5 L274.5 209.3 L272.8 207.9 L271.4 206.3 L270.3 204.7 L269.3 202.9 L268.6 201.2 L268.0 199.4 L267.5 197.7 L267.0 195.9 L266.3 194.2 L265.5 192.4 L264.5 190.5 L263.5 188.4 L262.5 186.0 L261.7 183.5 L261.3 180.9 L261.4 178.2 L262.0 175.5 L263.4 173.1 L265.5 171.0 L268.1 169.5 L271.2 168.5 L274.6 168.0 L278.1 168.2 L281.5 168.8 L284.6 169.7 L287.5 170.8 L290.0 171.8 L292.2 172.6 L294.4 173.2 L296.4 173.4 L298.6 173.4 L301.0 173.2 L303.7 172.9 L306.5 172.6 L309.6 172.7 L312.6 173.1 L315.4 174.0 L317.8 175.3 L319.7 177.0 L321.0 179.1 L321.6 181.5 L321.7 183.9 L321.1 186.2 L320.3 188.4 L319.3 190.5 L318.4 192.4"/><path d="M328.1 192.4 L327.1 194.8 L326.4 197.2 L326.1 199.6 L326.2 202.2 L326.5 205.1 L326.7 208.2 L326.6 211.6 L326.1 215.0 L324.9 218.4 L322.9 221.6 L320.3 224.3 L316.9 226.5 L313.1 228.0 L308.9 228.9 L304.6 229.1 L300.3 228.8 L296.2 228.0 L292.2 227.0 L288.6 225.7 L285.2 224.4 L281.9 223.1 L278.9 221.7 L275.9 220.4 L273.0 218.9 L270.3 217.4 L267.8 215.6 L265.6 213.7 L263.6 211.6 L262.0 209.3 L260.7 206.9 L259.8 204.5 L259.0 202.1 L258.3 199.7 L257.5 197.3 L256.6 194.9 L255.5 192.4 L254.2 189.7 L252.8 186.8 L251.4 183.7 L250.3 180.2 L249.7 176.6 L249.8 172.8 L250.7 169.2 L252.6 165.9 L255.4 163.0 L259.1 160.9 L263.3 159.5 L268.0 158.9 L272.8 159.1 L277.4 159.9 L281.8 161.2 L285.7 162.7 L289.1 164.1 L292.2 165.2 L295.1 166.0 L298.0 166.3 L301.0 166.3 L304.3 165.9 L308.0 165.5 L311.9 165.2 L316.0 165.3 L320.2 165.9 L324.0 167.0 L327.4 168.9 L330.0 171.3 L331.8 174.2 L332.7 177.4 L332.7 180.7 L332.0 183.9 L330.8 187.0 L329.5 189.8 L328.1 192.4" stroke-dasharray="28 6"/><path d="M337.9 192.4 L336.6 195.5 L335.7 198.5 L335.4 201.6 L335.5 204.9 L335.8 208.6 L336.1 212.6 L336.0 216.8 L335.3 221.2 L333.8 225.5 L331.3 229.5 L327.9 233.0 L323.7 235.8 L318.8 237.8 L313.5 238.9 L308.0 239.2 L302.5 238.7 L297.2 237.8 L292.2 236.4 L287.6 234.8 L283.2 233.2 L279.1 231.5 L275.2 229.7 L271.4 228.0 L267.8 226.2 L264.4 224.2 L261.1 221.9 L258.3 219.5 L255.8 216.8 L253.8 213.9 L252.1 210.9 L250.9 207.8 L249.9 204.7 L249.0 201.6 L248.0 198.6 L246.8 195.6 L245.4 192.4 L243.8 189.0 L242.0 185.3 L240.3 181.3 L238.9 176.9 L238.1 172.3 L238.2 167.5 L239.4 162.9 L241.8 158.6 L245.4 155.0 L250.0 152.3 L255.5 150.5 L261.4 149.8 L267.5 150.0 L273.4 151.1 L278.9 152.7 L283.9 154.5 L288.3 156.3 L292.2 157.8 L295.9 158.8 L299.6 159.2 L303.4 159.2 L307.6 158.7 L312.2 158.2 L317.3 157.8 L322.5 157.9 L327.8 158.6 L332.7 160.1 L337.0 162.5 L340.3 165.5 L342.6 169.2 L343.7 173.3 L343.7 177.5 L342.8 181.6 L341.3 185.5 L339.6 189.1 L337.9 192.4" stroke-dasharray="10 4"/><path d="M347.7 192.4 L346.1 196.1 L345.0 199.8 L344.6 203.6 L344.7 207.6 L345.1 212.1 L345.4 216.9 L345.4 222.0 L344.5 227.4 L342.7 232.6 L339.7 237.5 L335.6 241.7 L330.4 245.1 L324.5 247.5 L318.0 248.8 L311.3 249.2 L304.7 248.7 L298.3 247.5 L292.2 245.8 L286.6 243.9 L281.3 241.9 L276.3 239.8 L271.5 237.8 L267.0 235.6 L262.6 233.4 L258.4 231.0 L254.5 228.3 L251.0 225.3 L248.0 222.0 L245.5 218.5 L243.6 214.8 L242.0 211.1 L240.8 207.3 L239.7 203.6 L238.5 199.9 L237.1 196.2 L235.4 192.4 L233.4 188.3 L231.2 183.8 L229.1 178.9 L227.4 173.6 L226.5 167.9 L226.6 162.2 L228.1 156.6 L231.0 151.4 L235.3 147.0 L241.0 143.7 L247.6 141.5 L254.8 140.6 L262.2 141.0 L269.4 142.2 L276.1 144.2 L282.1 146.4 L287.4 148.6 L292.2 150.4 L296.7 151.6 L301.2 152.1 L305.8 152.0 L310.9 151.5 L316.5 150.9 L322.6 150.4 L329.0 150.5 L335.4 151.4 L341.4 153.2 L346.6 156.0 L350.7 159.8 L353.4 164.2 L354.7 169.2 L354.7 174.3 L353.7 179.3 L351.9 184.0 L349.8 188.4 L347.7 192.4"/><path d="M357.5 192.4 L355.6 196.8 L354.4 201.1 L353.9 205.6 L354.0 210.3 L354.4 215.5 L354.8 221.2 L354.7 227.3 L353.7 233.5 L351.6 239.7 L348.1 245.4 L343.2 250.4 L337.1 254.4 L330.1 257.2 L322.6 258.8 L314.7 259.2 L306.9 258.6 L299.4 257.2 L292.2 255.3 L285.6 253.0 L279.4 250.6 L273.5 248.2 L267.9 245.8 L262.5 243.3 L257.3 240.6 L252.4 237.8 L247.8 234.6 L243.7 231.1 L240.2 227.2 L237.3 223.1 L235.0 218.8 L233.2 214.4 L231.7 210.0 L230.4 205.6 L229.1 201.3 L227.4 196.9 L225.4 192.4 L223.0 187.6 L220.4 182.3 L218.0 176.5 L216.0 170.3 L214.9 163.6 L215.0 156.8 L216.7 150.2 L220.2 144.2 L225.3 139.0 L231.9 135.1 L239.7 132.5 L248.2 131.5 L256.9 131.9 L265.3 133.4 L273.2 135.7 L280.3 138.3 L286.6 140.9 L292.2 143.0 L297.5 144.4 L302.7 145.0 L308.2 144.9 L314.2 144.3 L320.8 143.6 L328.0 143.0 L335.5 143.1 L343.0 144.1 L350.1 146.3 L356.2 149.6 L361.0 154.0 L364.2 159.3 L365.7 165.1 L365.8 171.1 L364.5 177.0 L362.4 182.5 L359.9 187.7 L357.5 192.4" stroke-dasharray="27 3"/><path d="M367.3 192.4 L365.1 197.5 L363.7 202.4 L363.1 207.5 L363.3 213.0 L363.8 219.0 L364.2 225.5 L364.1 232.5 L363.0 239.7 L360.5 246.8 L356.4 253.4 L350.8 259.1 L343.9 263.7 L335.8 266.9 L327.1 268.7 L318.1 269.2 L309.1 268.5 L300.4 266.9 L292.2 264.7 L284.6 262.1 L277.4 259.4 L270.7 256.6 L264.2 253.8 L258.0 250.9 L252.1 247.9 L246.4 244.6 L241.2 241.0 L236.4 236.9 L232.4 232.5 L229.0 227.7 L226.4 222.7 L224.3 217.7 L222.7 212.6 L221.2 207.6 L219.6 202.6 L217.7 197.6 L215.3 192.4 L212.6 186.8 L209.7 180.8 L206.8 174.1 L204.5 166.9 L203.3 159.3 L203.4 151.5 L205.4 143.9 L209.4 136.9 L215.3 131.0 L222.9 126.5 L231.8 123.6 L241.6 122.4 L251.6 122.8 L261.3 124.5 L270.3 127.2 L278.5 130.2 L285.8 133.2 L292.2 135.6 L298.3 137.2 L304.3 137.9 L310.6 137.8 L317.5 137.1 L325.1 136.2 L333.4 135.6 L342.0 135.7 L350.6 136.9 L358.7 139.4 L365.7 143.2 L371.3 148.3 L375.0 154.3 L376.8 161.0 L376.8 167.9 L375.3 174.6 L372.9 181.1 L370.1 187.0 L367.3 192.4" stroke-dasharray="26 4"/><path d="M377.1 192.4 L374.6 198.1 L373.0 203.7 L372.4 209.5 L372.5 215.7 L373.1 222.5 L373.6 229.8 L373.5 237.7 L372.2 245.9 L369.4 253.9 L364.8 261.3 L358.5 267.8 L350.6 273.0 L341.5 276.7 L331.6 278.7 L321.4 279.2 L311.3 278.5 L301.5 276.7 L292.2 274.1 L283.6 271.2 L275.5 268.1 L267.9 264.9 L260.6 261.8 L253.6 258.5 L246.8 255.1 L240.4 251.4 L234.5 247.3 L229.2 242.7 L224.6 237.7 L220.8 232.3 L217.8 226.7 L215.5 220.9 L213.6 215.2 L211.9 209.6 L210.1 203.9 L207.9 198.3 L205.3 192.4 L202.2 186.1 L198.9 179.3 L195.7 171.8 L193.1 163.6 L191.7 155.0 L191.9 146.2 L194.1 137.6 L198.5 129.7 L205.2 123.0 L213.8 117.9 L223.9 114.6 L234.9 113.2 L246.2 113.7 L257.2 115.7 L267.5 118.7 L276.7 122.1 L284.9 125.4 L292.2 128.2 L299.1 130.0 L305.9 130.8 L313.0 130.7 L320.8 129.9 L329.4 128.9 L338.7 128.2 L348.5 128.3 L358.2 129.7 L367.4 132.5 L375.3 136.8 L381.6 142.5 L385.8 149.3 L387.8 156.9 L387.8 164.7 L386.2 172.3 L383.4 179.6 L380.2 186.3 L377.1 192.4"/><path d="M386.9 192.4 L384.1 198.8 L382.3 205.1 L381.6 211.5 L381.8 218.4 L382.4 225.9 L383.0 234.2 L382.8 243.0 L381.4 252.0 L378.3 261.0 L373.2 269.3 L366.1 276.5 L357.3 282.3 L347.2 286.4 L336.2 288.7 L324.8 289.3 L313.5 288.4 L302.6 286.4 L292.2 283.6 L282.6 280.3 L273.6 276.8 L265.1 273.3 L256.9 269.8 L249.1 266.2 L241.6 262.3 L234.5 258.2 L227.8 253.6 L221.9 248.5 L216.7 242.9 L212.5 236.9 L209.2 230.6 L206.6 224.2 L204.5 217.9 L202.6 211.5 L200.6 205.3 L198.2 199.0 L195.3 192.4 L191.8 185.4 L188.1 177.8 L184.6 169.4 L181.7 160.3 L180.1 150.7 L180.3 140.8 L182.8 131.3 L187.7 122.5 L195.2 115.0 L204.8 109.3 L216.0 105.6 L228.3 104.1 L240.9 104.6 L253.2 106.8 L264.6 110.2 L274.9 114.0 L284.1 117.7 L292.2 120.8 L299.9 122.8 L307.4 123.7 L315.4 123.5 L324.1 122.7 L333.7 121.6 L344.1 120.8 L355.0 120.9 L365.9 122.4 L376.1 125.6 L384.9 130.4 L391.9 136.8 L396.5 144.4 L398.8 152.8 L398.8 161.5 L397.0 170.0 L394.0 178.1 L390.4 185.5 L386.9 192.4"/><path d="M396.7 192.4 L393.6 199.5 L391.6 206.4 L390.8 213.5 L391.0 221.1 L391.8 229.4 L392.4 238.5 L392.2 248.2 L390.6 258.2 L387.2 268.1 L381.5 277.2 L373.8 285.2 L364.1 291.6 L352.9 296.1 L340.7 298.6 L328.2 299.3 L315.7 298.3 L303.6 296.1 L292.2 293.0 L281.6 289.4 L271.6 285.6 L262.2 281.7 L253.3 277.8 L244.7 273.8 L236.4 269.6 L228.5 265.0 L221.2 260.0 L214.6 254.3 L208.9 248.1 L204.3 241.5 L200.6 234.6 L197.7 227.5 L195.4 220.5 L193.4 213.5 L191.1 206.6 L188.5 199.6 L185.2 192.4 L181.4 184.7 L177.3 176.2 L173.4 167.0 L170.2 157.0 L168.5 146.4 L168.7 135.5 L171.4 124.9 L176.9 115.2 L185.1 107.0 L195.7 100.7 L208.2 96.6 L221.7 95.0 L235.6 95.6 L249.2 98.0 L261.8 101.6 L273.1 105.9 L283.2 110.0 L292.2 113.3 L300.7 115.6 L309.0 116.6 L317.8 116.4 L327.4 115.5 L337.9 114.2 L349.4 113.4 L361.5 113.6 L373.5 115.2 L384.7 118.6 L394.5 124.0 L402.2 131.0 L407.3 139.4 L409.8 148.7 L409.9 158.3 L407.8 167.7 L404.5 176.6 L400.5 184.8 L396.7 192.4"/><path d="M398.2 127.2 L397.7 127.7 L397.3 128.1 L397.1 128.5 L397.1 128.9 L397.1 129.4 L397.2 130.0 L397.3 130.6 L397.2 131.3 L397.0 131.9 L396.6 132.5 L396.0 133.0 L395.2 133.4 L394.2 133.7 L393.1 133.7 L392.1 133.6 L391.0 133.4 L390.1 133.1 L389.2 132.8 L388.4 132.5 L387.7 132.2 L387.1 132.0 L386.4 131.8 L385.7 131.7 L384.9 131.7 L384.0 131.7 L383.0 131.6 L382.1 131.5 L381.1 131.3 L380.3 131.0 L379.6 130.5 L379.1 130.1 L378.8 129.5 L378.6 128.9 L378.7 128.3 L378.8 127.8 L379.1 127.2 L379.3 126.7 L379.6 126.2 L379.8 125.7 L380.0 125.2 L380.1 124.7 L380.3 124.2 L380.6 123.6 L380.9 123.1 L381.4 122.6 L382.1 122.2 L382.9 121.8 L383.8 121.6 L384.8 121.5 L385.7 121.6 L386.7 121.7 L387.6 121.9 L388.4 122.1 L389.2 122.3 L389.9 122.4 L390.6 122.5 L391.3 122.5 L392.1 122.4 L393.1 122.3 L394.1 122.2 L395.2 122.1 L396.3 122.2 L397.4 122.4 L398.3 122.7 L399.1 123.1 L399.7 123.6 L399.9 124.2 L399.9 124.9 L399.7 125.6 L399.2 126.2 L398.7 126.7 L398.2 127.2"/><path d="M411.7 127.2 L410.5 128.3 L409.6 129.4 L409.0 130.4 L408.9 131.5 L409.0 132.7 L409.2 134.1 L409.4 135.7 L409.2 137.3 L408.7 138.9 L407.7 140.4 L406.2 141.7 L404.1 142.7 L401.7 143.3 L399.1 143.5 L396.4 143.2 L393.8 142.7 L391.4 142.0 L389.2 141.1 L387.3 140.3 L385.5 139.6 L383.9 139.0 L382.2 138.7 L380.4 138.5 L378.4 138.4 L376.2 138.3 L373.8 138.2 L371.4 137.9 L369.1 137.3 L367.0 136.5 L365.2 135.5 L363.9 134.3 L363.1 132.9 L362.8 131.5 L362.9 130.0 L363.3 128.6 L363.9 127.2 L364.6 125.9 L365.2 124.7 L365.7 123.5 L366.1 122.2 L366.5 120.9 L367.0 119.6 L367.6 118.2 L368.5 116.9 L369.8 115.7 L371.4 114.6 L373.4 113.8 L375.7 113.2 L378.1 113.0 L380.6 113.1 L383.0 113.4 L385.2 113.9 L387.3 114.4 L389.2 114.8 L391.0 115.2 L392.7 115.3 L394.5 115.3 L396.6 115.1 L398.9 114.9 L401.4 114.6 L404.1 114.5 L406.9 114.6 L409.6 115.0 L412.1 115.8 L414.0 116.9 L415.4 118.2 L416.0 119.8 L416.0 121.4 L415.4 123.0 L414.3 124.6 L413.0 126.0 L411.7 127.2"/><path d="M425.1 127.2 L423.2 129.0 L421.8 130.7 L421.0 132.3 L420.7 134.1 L420.9 136.1 L421.2 138.3 L421.4 140.7 L421.3 143.3 L420.5 145.9 L418.8 148.3 L416.4 150.4 L413.1 152.0 L409.2 152.9 L405.0 153.2 L400.7 152.9 L396.5 152.0 L392.6 150.8 L389.2 149.5 L386.1 148.1 L383.4 147.0 L380.7 146.1 L378.0 145.6 L375.1 145.2 L371.9 145.1 L368.4 145.0 L364.6 144.7 L360.7 144.2 L357.0 143.4 L353.6 142.1 L350.8 140.5 L348.7 138.5 L347.4 136.3 L346.9 134.0 L347.1 131.7 L347.8 129.4 L348.7 127.2 L349.8 125.2 L350.8 123.2 L351.6 121.2 L352.3 119.2 L353.0 117.1 L353.7 115.0 L354.7 112.8 L356.2 110.7 L358.2 108.7 L360.8 107.0 L363.9 105.7 L367.5 104.8 L371.4 104.5 L375.4 104.6 L379.3 105.1 L382.9 105.8 L386.2 106.7 L389.2 107.4 L392.0 107.9 L394.8 108.2 L397.8 108.1 L401.0 107.9 L404.7 107.4 L408.7 107.0 L413.1 106.9 L417.6 107.0 L421.9 107.7 L425.8 108.9 L428.9 110.6 L431.1 112.8 L432.1 115.3 L432.1 117.9 L431.1 120.5 L429.4 123.0 L427.3 125.2 L425.1 127.2"/><path d="M438.6 127.2 L436.0 129.7 L434.0 132.0 L432.9 134.2 L432.5 136.7 L432.7 139.4 L433.2 142.4 L433.5 145.8 L433.3 149.4 L432.2 152.9 L430.0 156.3 L426.5 159.1 L422.1 161.2 L416.7 162.5 L410.9 162.9 L405.0 162.5 L399.2 161.3 L393.9 159.7 L389.2 157.8 L385.0 156.0 L381.2 154.4 L377.5 153.2 L373.8 152.4 L369.9 152.0 L365.5 151.8 L360.6 151.6 L355.4 151.3 L350.1 150.6 L344.9 149.4 L340.3 147.7 L336.4 145.4 L333.5 142.7 L331.8 139.7 L331.1 136.5 L331.3 133.3 L332.3 130.2 L333.6 127.2 L335.0 124.4 L336.4 121.7 L337.5 119.0 L338.5 116.2 L339.4 113.4 L340.4 110.4 L341.8 107.4 L343.8 104.5 L346.5 101.7 L350.1 99.4 L354.5 97.6 L359.4 96.4 L364.8 96.0 L370.2 96.1 L375.5 96.8 L380.5 97.8 L385.0 98.9 L389.2 100.0 L393.1 100.7 L396.9 101.1 L401.0 101.0 L405.4 100.6 L410.4 100.0 L416.0 99.5 L422.0 99.2 L428.2 99.5 L434.2 100.4 L439.5 102.0 L443.8 104.4 L446.8 107.4 L448.2 110.8 L448.2 114.4 L446.8 118.0 L444.5 121.4 L441.6 124.5 L438.6 127.2"/><path d="M452.1 127.2 L448.7 130.3 L446.2 133.2 L444.8 136.1 L444.3 139.2 L444.6 142.7 L445.2 146.6 L445.6 150.8 L445.4 155.4 L443.9 159.9 L441.1 164.2 L436.7 167.8 L431.0 170.5 L424.3 172.2 L416.9 172.7 L409.3 172.1 L402.0 170.6 L395.2 168.5 L389.2 166.1 L383.8 163.8 L379.0 161.8 L374.4 160.3 L369.7 159.3 L364.6 158.8 L359.0 158.5 L352.8 158.3 L346.2 157.9 L339.4 157.0 L332.8 155.5 L326.9 153.3 L322.0 150.4 L318.4 147.0 L316.1 143.1 L315.3 139.1 L315.6 135.0 L316.7 131.0 L318.4 127.2 L320.2 123.6 L321.9 120.2 L323.4 116.7 L324.6 113.2 L325.8 109.6 L327.1 105.8 L328.8 102.0 L331.4 98.3 L334.9 94.8 L339.4 91.8 L345.0 89.5 L351.3 88.0 L358.1 87.4 L365.1 87.6 L371.8 88.5 L378.1 89.8 L383.9 91.2 L389.2 92.5 L394.1 93.5 L399.0 93.9 L404.2 93.8 L409.9 93.3 L416.2 92.6 L423.4 91.9 L431.0 91.6 L438.9 91.9 L446.4 93.0 L453.2 95.1 L458.7 98.2 L462.5 102.0 L464.3 106.3 L464.3 110.9 L462.5 115.5 L459.6 119.8 L455.9 123.8 L452.1 127.2" stroke-dasharray="11 8"/><path d="M465.6 127.2 L461.5 131.0 L458.5 134.5 L456.7 138.0 L456.1 141.8 L456.5 146.0 L457.2 150.7 L457.7 155.9 L457.4 161.4 L455.7 166.9 L452.2 172.1 L446.9 176.5 L440.0 179.8 L431.8 181.8 L422.8 182.4 L413.6 181.7 L404.7 179.9 L396.5 177.4 L389.2 174.5 L382.7 171.7 L376.8 169.2 L371.2 167.4 L365.5 166.2 L359.3 165.5 L352.5 165.2 L345.0 164.9 L337.0 164.4 L328.7 163.3 L320.8 161.5 L313.6 158.9 L307.6 155.4 L303.2 151.2 L300.5 146.5 L299.4 141.6 L299.8 136.7 L301.2 131.8 L303.2 127.2 L305.5 122.9 L307.5 118.6 L309.3 114.5 L310.8 110.2 L312.2 105.8 L313.8 101.2 L315.9 96.6 L319.0 92.1 L323.2 87.8 L328.8 84.2 L335.5 81.4 L343.2 79.6 L351.4 78.9 L359.9 79.1 L368.1 80.2 L375.8 81.8 L382.8 83.5 L389.2 85.1 L395.2 86.2 L401.1 86.8 L407.4 86.7 L414.3 86.0 L422.0 85.2 L430.7 84.3 L440.0 83.9 L449.5 84.3 L458.7 85.7 L466.9 88.3 L473.6 91.9 L478.2 96.5 L480.4 101.8 L480.4 107.4 L478.3 113.0 L474.6 118.2 L470.2 123.0 L465.6 127.2" stroke-dasharray="16 6"/><path d="M517.8 267.1 L518.1 267.7 L518.1 268.4 L517.9 269.0 L517.4 269.6 L516.8 270.1 L516.0 270.6 L515.0 270.9 L514.0 271.2 L513.0 271.4 L512.1 271.6 L511.2 271.8 L510.3 271.9 L509.5 272.1 L508.7 272.2 L507.9 272.4 L507.1 272.5 L506.3 272.6 L505.5 272.7 L504.6 272.7 L503.8 272.6 L503.0 272.5 L502.2 272.3 L501.5 272.0 L500.8 271.7 L500.2 271.4 L499.6 271.1 L499.0 270.8 L498.4 270.5 L497.7 270.2 L496.9 269.9 L496.2 269.6 L495.4 269.2 L494.6 268.8 L493.9 268.3 L493.3 267.7 L493.0 267.1 L492.9 266.5 L493.0 265.8 L493.3 265.2 L493.9 264.7 L494.7 264.2 L495.6 263.8 L496.5 263.5 L497.4 263.2 L498.3 263.0 L499.2 262.8 L500.0 262.6 L500.7 262.4 L501.4 262.1 L502.2 261.9 L502.9 261.6 L503.7 261.4 L504.6 261.2 L505.5 261.1 L506.4 261.1 L507.3 261.2 L508.1 261.4 L508.9 261.7 L509.6 262.0 L510.2 262.4 L510.7 262.8 L511.2 263.2 L511.7 263.5 L512.2 263.9 L512.8 264.2 L513.4 264.5 L514.2 264.8 L515.0 265.1 L515.8 265.5 L516.6 266.0 L517.2 266.5 L517.8 267.1"/><path d="M536.2 267.1 L536.9 268.7 L537.1 270.3 L536.5 271.9 L535.4 273.4 L533.8 274.7 L531.7 275.8 L529.3 276.7 L526.9 277.4 L524.4 278.0 L522.0 278.4 L519.7 278.8 L517.6 279.2 L515.6 279.5 L513.6 279.9 L511.6 280.3 L509.6 280.7 L507.6 280.9 L505.5 281.1 L503.3 281.1 L501.2 280.9 L499.2 280.5 L497.3 280.0 L495.5 279.4 L493.9 278.6 L492.3 277.9 L490.9 277.1 L489.3 276.4 L487.8 275.6 L486.0 274.9 L484.2 274.2 L482.2 273.3 L480.2 272.4 L478.2 271.3 L476.5 270.0 L475.1 268.6 L474.2 267.1 L473.9 265.5 L474.2 263.9 L475.1 262.4 L476.6 261.1 L478.5 259.9 L480.7 258.9 L483.0 258.1 L485.4 257.4 L487.6 256.9 L489.8 256.4 L491.7 255.9 L493.6 255.3 L495.4 254.7 L497.2 254.1 L499.1 253.5 L501.1 252.9 L503.2 252.4 L505.5 252.2 L507.8 252.1 L510.0 252.3 L512.1 252.8 L514.1 253.5 L515.8 254.4 L517.3 255.3 L518.7 256.3 L519.9 257.3 L521.0 258.2 L522.3 259.0 L523.7 259.8 L525.4 260.5 L527.2 261.3 L529.2 262.1 L531.2 263.1 L533.2 264.3 L534.9 265.6 L536.2 267.1" stroke-dasharray="28 3"/><path d="M554.6 267.1 L555.8 269.6 L556.0 272.2 L555.2 274.7 L553.4 277.1 L550.7 279.2 L547.4 281.0 L543.6 282.4 L539.7 283.6 L535.7 284.5 L531.9 285.2 L528.3 285.8 L524.9 286.4 L521.6 287.0 L518.5 287.6 L515.3 288.3 L512.1 288.8 L508.8 289.3 L505.5 289.5 L502.1 289.5 L498.7 289.2 L495.4 288.6 L492.4 287.8 L489.5 286.7 L486.9 285.5 L484.5 284.3 L482.1 283.1 L479.7 281.9 L477.1 280.7 L474.4 279.6 L471.4 278.4 L468.2 277.1 L465.0 275.6 L461.9 273.8 L459.1 271.8 L456.9 269.5 L455.5 267.1 L455.0 264.6 L455.5 262.0 L457.0 259.6 L459.3 257.5 L462.3 255.6 L465.8 254.0 L469.5 252.7 L473.3 251.6 L476.9 250.7 L480.3 249.9 L483.5 249.1 L486.5 248.2 L489.4 247.3 L492.3 246.3 L495.3 245.3 L498.5 244.3 L501.9 243.6 L505.5 243.2 L509.1 243.1 L512.7 243.5 L516.1 244.2 L519.3 245.3 L522.0 246.7 L524.5 248.2 L526.6 249.8 L528.5 251.4 L530.4 252.8 L532.4 254.1 L534.7 255.4 L537.3 256.6 L540.2 257.8 L543.4 259.2 L546.7 260.8 L549.8 262.6 L552.5 264.7 L554.6 267.1"/><path d="M573.0 267.1 L574.7 270.6 L575.0 274.1 L573.8 277.6 L571.4 280.9 L567.7 283.7 L563.1 286.2 L558.0 288.2 L552.5 289.8 L547.1 291.0 L541.8 292.0 L536.9 292.8 L532.2 293.6 L527.7 294.5 L523.4 295.3 L519.1 296.2 L514.6 297.0 L510.1 297.6 L505.5 297.9 L500.8 297.9 L496.1 297.5 L491.7 296.7 L487.4 295.5 L483.5 294.1 L479.9 292.5 L476.6 290.8 L473.3 289.1 L470.0 287.5 L466.5 285.9 L462.7 284.3 L458.6 282.6 L454.3 280.8 L449.8 278.7 L445.6 276.3 L441.8 273.5 L438.7 270.5 L436.8 267.1 L436.1 263.6 L436.8 260.2 L438.8 256.8 L442.0 253.8 L446.1 251.2 L450.9 249.0 L456.1 247.3 L461.2 245.8 L466.2 244.6 L470.9 243.5 L475.3 242.3 L479.4 241.1 L483.3 239.8 L487.3 238.5 L491.4 237.1 L495.9 235.8 L500.5 234.8 L505.5 234.2 L510.5 234.2 L515.4 234.6 L520.1 235.7 L524.5 237.2 L528.3 239.1 L531.6 241.2 L534.5 243.3 L537.1 245.5 L539.7 247.4 L542.5 249.3 L545.6 251.0 L549.2 252.6 L553.3 254.3 L557.7 256.2 L562.1 258.4 L566.4 260.9 L570.2 263.9 L573.0 267.1" stroke-dasharray="19 4"/><path d="M591.4 267.1 L593.6 271.5 L593.9 276.0 L592.5 280.5 L589.3 284.6 L584.7 288.3 L578.8 291.4 L572.3 293.9 L565.4 295.9 L558.4 297.5 L551.8 298.7 L545.4 299.8 L539.5 300.9 L533.8 301.9 L528.3 303.0 L522.8 304.1 L517.2 305.1 L511.4 305.9 L505.5 306.3 L499.5 306.3 L493.6 305.8 L487.9 304.7 L482.5 303.3 L477.6 301.4 L473.0 299.4 L468.7 297.2 L464.5 295.1 L460.3 293.0 L455.9 291.0 L451.0 289.0 L445.8 286.9 L440.3 284.5 L434.6 281.9 L429.2 278.8 L424.4 275.3 L420.5 271.4 L418.0 267.1 L417.2 262.7 L418.0 258.3 L420.6 254.1 L424.7 250.2 L429.9 246.9 L436.1 244.1 L442.6 241.8 L449.2 240.0 L455.5 238.4 L461.5 237.0 L467.0 235.6 L472.2 234.1 L477.3 232.4 L482.3 230.6 L487.6 228.9 L493.2 227.3 L499.2 226.0 L505.5 225.3 L511.9 225.2 L518.2 225.8 L524.2 227.1 L529.6 229.0 L534.5 231.4 L538.7 234.1 L542.4 236.9 L545.8 239.6 L549.1 242.1 L552.6 244.4 L556.6 246.6 L561.2 248.7 L566.3 250.8 L571.9 253.2 L577.6 256.0 L583.1 259.3 L587.8 263.0 L591.4 267.1"/><path d="M609.9 267.1 L612.4 272.5 L612.9 278.0 L611.1 283.3 L607.3 288.4 L601.6 292.8 L594.6 296.6 L586.6 299.7 L578.2 302.1 L569.8 304.0 L561.7 305.5 L554.0 306.8 L546.7 308.1 L539.8 309.4 L533.1 310.7 L526.5 312.0 L519.7 313.2 L512.7 314.2 L505.5 314.7 L498.2 314.7 L491.0 314.0 L484.1 312.8 L477.6 311.0 L471.6 308.8 L466.0 306.3 L460.8 303.7 L455.8 301.1 L450.6 298.6 L445.2 296.1 L439.4 293.6 L433.0 291.1 L426.3 288.3 L419.5 285.1 L412.9 281.3 L407.0 277.1 L402.3 272.3 L399.3 267.1 L398.2 261.7 L399.3 256.4 L402.4 251.3 L407.3 246.6 L413.8 242.6 L421.2 239.2 L429.1 236.4 L437.1 234.2 L444.8 232.3 L452.0 230.6 L458.8 228.8 L465.1 227.0 L471.2 225.0 L477.4 222.8 L483.8 220.7 L490.6 218.7 L497.9 217.2 L505.5 216.3 L513.2 216.2 L520.9 216.9 L528.2 218.5 L534.8 220.9 L540.7 223.8 L545.8 227.0 L550.3 230.4 L554.4 233.7 L558.4 236.7 L562.7 239.5 L567.6 242.2 L573.1 244.7 L579.3 247.3 L586.1 250.3 L593.1 253.6 L599.7 257.6 L605.5 262.1 L609.9 267.1" stroke-dasharray="25 7"/><path d="M593.7 152.4 L594.4 152.9 L595.0 153.5 L595.6 154.2 L595.9 154.9 L596.0 155.6 L595.8 156.2 L595.2 156.8 L594.2 157.3 L593.0 157.7 L591.6 157.8 L590.1 157.8 L588.6 157.7 L587.1 157.4 L585.9 157.1 L584.8 156.8 L583.9 156.6 L583.1 156.5 L582.4 156.5 L581.7 156.6 L580.9 156.8 L579.9 157.1 L578.7 157.4 L577.5 157.7 L576.1 157.8 L574.7 157.9 L573.4 157.8 L572.2 157.5 L571.2 157.1 L570.5 156.5 L570.1 155.9 L569.9 155.3 L570.0 154.7 L570.1 154.0 L570.4 153.5 L570.6 152.9 L570.8 152.4 L571.0 151.9 L571.1 151.4 L571.2 150.9 L571.3 150.4 L571.5 149.9 L571.7 149.4 L572.2 148.9 L572.8 148.4 L573.5 148.0 L574.4 147.7 L575.4 147.5 L576.5 147.3 L577.5 147.2 L578.5 147.1 L579.5 147.0 L580.5 147.0 L581.5 146.9 L582.4 146.8 L583.4 146.7 L584.5 146.6 L585.6 146.6 L586.7 146.6 L587.8 146.7 L588.9 146.9 L589.9 147.2 L590.6 147.6 L591.3 148.0 L591.7 148.6 L591.9 149.1 L592.1 149.7 L592.2 150.2 L592.2 150.6 L592.4 151.1 L592.7 151.5 L593.1 152.0 L593.7 152.4"/><path d="M610.6 152.4 L612.3 153.7 L613.9 155.2 L615.3 156.8 L616.2 158.5 L616.4 160.3 L615.8 162.0 L614.3 163.5 L611.9 164.7 L608.9 165.5 L605.3 165.9 L601.5 165.9 L597.7 165.6 L594.2 164.9 L591.1 164.2 L588.4 163.5 L586.2 162.9 L584.2 162.6 L582.4 162.6 L580.6 162.9 L578.5 163.5 L576.1 164.2 L573.2 164.9 L570.0 165.6 L566.6 166.0 L563.1 166.1 L559.8 165.8 L556.9 165.1 L554.5 164.0 L552.7 162.7 L551.7 161.2 L551.2 159.6 L551.3 158.0 L551.7 156.5 L552.3 155.0 L552.9 153.7 L553.5 152.4 L553.9 151.2 L554.1 149.9 L554.3 148.7 L554.6 147.4 L555.0 146.1 L555.7 144.8 L556.8 143.5 L558.3 142.4 L560.2 141.4 L562.4 140.6 L564.9 140.0 L567.5 139.6 L570.1 139.3 L572.7 139.1 L575.2 139.0 L577.6 138.8 L580.0 138.6 L582.4 138.4 L584.9 138.1 L587.6 137.9 L590.3 137.8 L593.2 137.8 L596.0 138.0 L598.6 138.5 L601.0 139.3 L603.0 140.3 L604.5 141.5 L605.6 142.8 L606.2 144.2 L606.6 145.5 L606.7 146.8 L607.0 148.0 L607.4 149.1 L608.1 150.2 L609.2 151.3 L610.6 152.4" stroke-dasharray="23 5"/><path d="M627.6 152.4 L630.2 154.5 L632.8 156.8 L635.0 159.4 L636.4 162.2 L636.8 165.0 L635.8 167.7 L633.4 170.1 L629.6 172.0 L624.7 173.4 L619.0 174.0 L612.9 174.0 L606.9 173.4 L601.3 172.5 L596.3 171.3 L592.0 170.1 L588.4 169.2 L585.3 168.7 L582.4 168.7 L579.5 169.2 L576.1 170.1 L572.2 171.3 L567.7 172.5 L562.6 173.5 L557.1 174.1 L551.6 174.3 L546.3 173.8 L541.6 172.7 L537.7 171.0 L534.9 168.9 L533.2 166.5 L532.5 164.0 L532.6 161.4 L533.3 158.9 L534.2 156.6 L535.2 154.5 L536.1 152.4 L536.7 150.4 L537.1 148.5 L537.4 146.4 L537.8 144.4 L538.5 142.3 L539.7 140.2 L541.4 138.2 L543.8 136.4 L546.9 134.8 L550.5 133.5 L554.4 132.6 L558.5 131.9 L562.7 131.5 L566.8 131.2 L570.8 131.0 L574.7 130.7 L578.5 130.4 L582.4 130.0 L586.5 129.6 L590.7 129.2 L595.1 129.0 L599.6 129.0 L604.1 129.4 L608.3 130.2 L612.1 131.4 L615.3 133.0 L617.8 134.9 L619.5 137.0 L620.5 139.2 L621.0 141.4 L621.3 143.4 L621.7 145.3 L622.4 147.1 L623.5 148.8 L625.3 150.6 L627.6 152.4"/><path d="M644.5 152.4 L648.1 155.3 L651.6 158.5 L654.7 162.0 L656.7 165.8 L657.2 169.7 L655.8 173.4 L652.5 176.7 L647.3 179.4 L640.6 181.2 L632.7 182.1 L624.4 182.1 L616.1 181.3 L608.4 180.0 L601.5 178.3 L595.6 176.8 L590.7 175.5 L586.4 174.9 L582.4 174.9 L578.3 175.5 L573.8 176.8 L568.4 178.3 L562.2 180.0 L555.2 181.4 L547.6 182.3 L540.0 182.4 L532.7 181.8 L526.2 180.3 L520.9 178.0 L517.1 175.1 L514.7 171.8 L513.8 168.3 L513.9 164.8 L514.8 161.4 L516.2 158.2 L517.5 155.2 L518.7 152.4 L519.6 149.7 L520.1 147.0 L520.6 144.2 L521.1 141.4 L522.1 138.5 L523.6 135.6 L526.1 132.9 L529.4 130.4 L533.6 128.2 L538.5 126.5 L543.9 125.1 L549.6 124.2 L555.3 123.6 L561.0 123.2 L566.5 122.9 L571.8 122.6 L577.1 122.1 L582.4 121.6 L588.0 121.0 L593.8 120.5 L599.8 120.2 L606.1 120.3 L612.2 120.8 L618.0 121.9 L623.3 123.5 L627.6 125.7 L631.0 128.3 L633.4 131.2 L634.8 134.3 L635.5 137.2 L635.9 140.1 L636.4 142.7 L637.3 145.1 L639.0 147.5 L641.4 149.9 L644.5 152.4"/><path d="M661.4 152.4 L666.0 156.0 L670.5 160.1 L674.4 164.6 L677.0 169.5 L677.6 174.4 L675.9 179.1 L671.6 183.4 L665.0 186.8 L656.4 189.1 L646.5 190.2 L635.8 190.2 L625.3 189.2 L615.4 187.5 L606.7 185.4 L599.2 183.4 L592.9 181.9 L587.5 181.0 L582.4 181.0 L577.2 181.8 L571.4 183.4 L564.6 185.4 L556.7 187.5 L547.7 189.3 L538.2 190.4 L528.4 190.6 L519.1 189.8 L510.9 187.9 L504.2 185.0 L499.3 181.3 L496.3 177.1 L495.0 172.6 L495.2 168.1 L496.4 163.8 L498.1 159.8 L499.8 156.0 L501.3 152.4 L502.4 148.9 L503.1 145.5 L503.7 142.0 L504.4 138.3 L505.6 134.7 L507.6 131.0 L510.7 127.5 L514.9 124.3 L520.2 121.6 L526.5 119.4 L533.4 117.7 L540.6 116.5 L547.9 115.8 L555.1 115.3 L562.1 114.9 L568.9 114.4 L575.6 113.9 L582.4 113.2 L589.5 112.5 L596.9 111.8 L604.6 111.4 L612.5 111.5 L620.3 112.1 L627.8 113.5 L634.4 115.6 L640.0 118.4 L644.3 121.8 L647.2 125.5 L649.0 129.3 L650.0 133.1 L650.5 136.7 L651.1 140.0 L652.3 143.1 L654.4 146.1 L657.4 149.2 L661.4 152.4"/><path d="M678.3 152.4 L683.8 156.8 L689.4 161.8 L694.1 167.2 L697.2 173.1 L698.0 179.1 L695.9 184.9 L690.7 190.0 L682.7 194.1 L672.3 196.9 L660.2 198.3 L647.3 198.3 L634.5 197.1 L622.5 195.0 L611.9 192.5 L602.8 190.1 L595.1 188.2 L588.6 187.1 L582.4 187.1 L576.1 188.2 L569.0 190.1 L560.8 192.5 L551.1 195.0 L540.3 197.2 L528.7 198.5 L516.9 198.8 L505.6 197.8 L495.6 195.5 L487.4 191.9 L481.4 187.5 L477.8 182.3 L476.3 176.9 L476.5 171.5 L478.0 166.3 L480.0 161.4 L482.1 156.8 L484.0 152.4 L485.3 148.2 L486.1 144.0 L486.8 139.7 L487.7 135.3 L489.1 130.9 L491.6 126.4 L495.3 122.2 L500.4 118.3 L506.9 115.0 L514.5 112.3 L522.9 110.3 L531.7 108.9 L540.5 107.9 L549.3 107.3 L557.8 106.8 L566.0 106.3 L574.2 105.6 L582.4 104.8 L591.0 103.9 L600.0 103.1 L609.3 102.6 L618.9 102.7 L628.5 103.5 L637.5 105.2 L645.5 107.8 L652.3 111.2 L657.5 115.2 L661.1 119.7 L663.3 124.4 L664.5 129.0 L665.1 133.3 L665.9 137.4 L667.3 141.1 L669.8 144.8 L673.5 148.5 L678.3 152.4"/><path d="M695.3 152.4 L701.7 157.6 L708.2 163.4 L713.8 169.9 L717.5 176.8 L718.4 183.8 L715.9 190.6 L709.9 196.6 L700.4 201.5 L688.1 204.8 L673.9 206.4 L658.7 206.4 L643.7 205.0 L629.6 202.5 L617.1 199.6 L606.4 196.7 L597.4 194.5 L589.6 193.2 L582.4 193.2 L575.0 194.5 L566.7 196.7 L556.9 199.6 L545.6 202.5 L532.9 205.1 L519.2 206.7 L505.3 207.0 L492.0 205.8 L480.2 203.0 L470.6 198.9 L463.6 193.6 L459.3 187.6 L457.6 181.3 L457.9 174.9 L459.5 168.7 L462.0 162.9 L464.4 157.5 L466.6 152.4 L468.1 147.5 L469.2 142.5 L470.0 137.5 L471.0 132.3 L472.7 127.1 L475.5 121.8 L479.9 116.9 L486.0 112.3 L493.6 108.4 L502.5 105.2 L512.4 102.8 L522.7 101.2 L533.2 100.1 L543.4 99.3 L553.4 98.8 L563.1 98.1 L572.7 97.3 L582.4 96.4 L592.5 95.3 L603.1 94.4 L614.1 93.9 L625.4 93.9 L636.6 94.9 L647.2 96.8 L656.7 99.9 L664.6 103.9 L670.8 108.6 L675.0 113.9 L677.6 119.4 L678.9 124.8 L679.7 129.9 L680.6 134.7 L682.3 139.2 L685.2 143.4 L689.6 147.8 L695.3 152.4" stroke-dasharray="27 5"/><path d="M712.2 152.4 L719.6 158.4 L727.1 165.1 L733.5 172.5 L737.7 180.4 L738.8 188.5 L735.9 196.3 L729.0 203.3 L718.1 208.8 L704.0 212.6 L687.6 214.5 L670.2 214.5 L652.8 212.8 L636.6 210.0 L622.3 206.6 L610.0 203.4 L599.6 200.8 L590.7 199.4 L582.4 199.4 L573.9 200.8 L564.3 203.3 L553.1 206.6 L540.1 210.0 L525.4 213.0 L509.7 214.8 L493.7 215.2 L478.5 213.8 L464.9 210.6 L453.9 205.9 L445.8 199.8 L440.9 192.9 L438.8 185.6 L439.2 178.3 L441.1 171.2 L443.9 164.5 L446.7 158.3 L449.2 152.4 L451.0 146.7 L452.2 141.0 L453.1 135.2 L454.2 129.3 L456.2 123.3 L459.5 117.3 L464.6 111.5 L471.5 106.3 L480.2 101.8 L490.5 98.1 L501.8 95.4 L513.7 93.5 L525.8 92.2 L537.6 91.4 L549.1 90.7 L560.2 90.0 L571.2 89.1 L582.4 88.0 L594.0 86.8 L606.2 85.7 L618.8 85.1 L631.8 85.2 L644.7 86.3 L656.9 88.5 L667.8 92.0 L677.0 96.6 L684.0 102.1 L688.9 108.1 L691.9 114.5 L693.4 120.7 L694.3 126.6 L695.3 132.1 L697.3 137.2 L700.6 142.1 L705.7 147.1 L712.2 152.4"/><path d="M729.1 152.4 L737.5 159.1 L746.0 166.7 L753.2 175.1 L758.0 184.1 L759.1 193.2 L755.9 202.0 L748.1 209.9 L735.8 216.2 L719.9 220.5 L701.3 222.6 L681.6 222.6 L662.0 220.7 L643.7 217.5 L627.5 213.7 L613.6 210.0 L601.9 207.1 L591.8 205.5 L582.4 205.5 L572.8 207.1 L561.9 210.0 L549.3 213.7 L534.6 217.6 L518.0 220.9 L500.2 223.0 L482.1 223.4 L464.9 221.8 L449.6 218.2 L437.1 212.8 L428.0 206.0 L422.4 198.2 L420.1 189.9 L420.5 181.6 L422.7 173.6 L425.8 166.1 L429.0 159.1 L431.8 152.4 L433.8 146.0 L435.2 139.6 L436.2 133.0 L437.5 126.3 L439.7 119.4 L443.5 112.7 L449.2 106.2 L457.0 100.3 L466.9 95.2 L478.5 91.1 L491.3 88.0 L504.8 85.8 L518.4 84.4 L531.7 83.4 L544.7 82.7 L557.3 81.8 L569.8 80.8 L582.4 79.6 L595.5 78.2 L609.3 77.0 L623.6 76.3 L638.3 76.4 L652.8 77.6 L666.6 80.2 L679.0 84.1 L689.3 89.3 L697.3 95.5 L702.8 102.4 L706.1 109.5 L707.9 116.5 L708.9 123.2 L710.1 129.4 L712.2 135.2 L716.0 140.7 L721.7 146.4 L729.1 152.4"/><path d="M746.0 152.4 L755.4 159.9 L764.9 168.4 L772.9 177.7 L778.2 187.7 L779.5 198.0 L776.0 207.8 L767.2 216.5 L753.5 223.5 L735.7 228.4 L715.1 230.7 L693.1 230.7 L671.2 228.6 L650.8 225.0 L632.6 220.8 L617.2 216.6 L604.1 213.4 L592.9 211.6 L582.4 211.6 L571.7 213.4 L559.6 216.6 L545.5 220.8 L529.0 225.1 L510.6 228.8 L490.7 231.1 L470.6 231.6 L451.3 229.8 L434.3 225.8 L420.3 219.8 L410.2 212.2 L403.9 203.5 L401.4 194.2 L401.8 185.0 L404.3 176.1 L407.7 167.7 L411.4 159.8 L414.4 152.4 L416.7 145.2 L418.2 138.1 L419.3 130.8 L420.8 123.3 L423.3 115.6 L427.5 108.1 L433.8 100.9 L442.6 94.3 L453.6 88.6 L466.5 84.0 L480.8 80.5 L495.8 78.1 L511.0 76.5 L525.9 75.5 L540.3 74.6 L554.4 73.7 L568.3 72.6 L582.4 71.2 L597.0 69.7 L612.4 68.3 L628.3 67.5 L644.7 67.6 L660.9 69.0 L676.3 71.8 L690.1 76.2 L701.6 82.0 L710.5 88.9 L716.7 96.6 L720.4 104.5 L722.4 112.4 L723.5 119.8 L724.8 126.7 L727.2 133.2 L731.5 139.4 L737.8 145.7 L746.0 152.4"/><path d="M763.0 152.4 L773.3 160.7 L783.7 170.0 L792.6 180.3 L798.5 191.4 L799.9 202.7 L796.0 213.5 L786.3 223.1 L771.2 230.9 L751.6 236.2 L728.8 238.8 L704.5 238.8 L680.4 236.5 L657.9 232.6 L637.8 227.8 L620.8 223.3 L606.4 219.7 L594.0 217.7 L582.4 217.7 L570.5 219.7 L557.2 223.3 L541.6 227.8 L523.5 232.6 L503.1 236.7 L481.2 239.3 L459.0 239.8 L437.8 237.8 L418.9 233.4 L403.5 226.8 L392.3 218.4 L385.5 208.8 L382.6 198.6 L383.1 188.4 L385.8 178.5 L389.7 169.3 L393.7 160.6 L397.1 152.4 L399.5 144.5 L401.2 136.6 L402.5 128.5 L404.1 120.3 L406.8 111.8 L411.4 103.5 L418.4 95.5 L428.1 88.3 L440.3 82.0 L454.5 76.9 L470.3 73.1 L486.9 70.4 L503.6 68.7 L520.0 67.5 L536.0 66.6 L551.5 65.6 L566.9 64.3 L582.4 62.8 L598.6 61.1 L615.5 59.6 L633.1 58.7 L651.2 58.9 L669.1 60.4 L686.0 63.5 L701.2 68.3 L714.0 74.7 L723.8 82.4 L730.6 90.8 L734.7 99.6 L736.8 108.2 L738.1 116.5 L739.5 124.1 L742.2 131.2 L746.9 138.0 L753.9 145.0 L763.0 152.4"/><path d="M721.4 290.1 L721.2 290.6 L721.0 291.2 L720.7 291.7 L720.2 292.2 L719.7 292.7 L719.1 293.2 L718.4 293.7 L717.7 294.1 L716.8 294.4 L715.8 294.7 L714.8 295.0 L713.8 295.1 L712.7 295.2 L711.6 295.3 L710.6 295.3 L709.6 295.3 L708.6 295.3 L707.6 295.3 L706.7 295.3 L705.7 295.3 L704.7 295.3 L703.6 295.3 L702.5 295.3 L701.4 295.2 L700.2 295.1 L699.1 294.9 L698.1 294.6 L697.1 294.3 L696.3 293.8 L695.7 293.4 L695.3 292.8 L695.0 292.3 L694.9 291.7 L695.0 291.1 L695.1 290.6 L695.3 290.1 L695.5 289.6 L695.7 289.1 L695.9 288.6 L696.1 288.1 L696.3 287.5 L696.6 287.0 L696.9 286.5 L697.4 286.0 L698.1 285.5 L698.8 285.1 L699.8 284.7 L700.8 284.4 L702.0 284.3 L703.2 284.2 L704.4 284.2 L705.5 284.3 L706.6 284.4 L707.6 284.6 L708.6 284.8 L709.5 285.0 L710.4 285.1 L711.3 285.3 L712.2 285.4 L713.2 285.5 L714.2 285.6 L715.3 285.7 L716.3 285.9 L717.3 286.2 L718.3 286.5 L719.2 286.9 L719.9 287.3 L720.5 287.8 L721.0 288.4 L721.3 288.9 L721.4 289.5 L721.4 290.1"/><path d="M741.9 290.1 L741.6 291.5 L741.0 292.9 L740.2 294.2 L739.1 295.5 L737.8 296.8 L736.4 298.0 L734.6 299.1 L732.7 300.1 L730.5 301.0 L728.2 301.7 L725.6 302.3 L723.0 302.7 L720.3 303.0 L717.7 303.2 L715.0 303.2 L712.5 303.2 L710.1 303.2 L707.6 303.1 L705.2 303.1 L702.8 303.1 L700.3 303.1 L697.6 303.1 L694.9 303.1 L692.0 302.9 L689.1 302.6 L686.3 302.2 L683.7 301.5 L681.3 300.6 L679.3 299.5 L677.7 298.3 L676.7 296.9 L676.0 295.5 L675.8 294.1 L675.9 292.7 L676.3 291.4 L676.8 290.1 L677.3 288.8 L677.8 287.6 L678.3 286.3 L678.7 285.1 L679.3 283.8 L680.0 282.5 L680.9 281.1 L682.1 279.9 L683.7 278.6 L685.6 277.6 L688.0 276.7 L690.6 276.0 L693.5 275.6 L696.4 275.4 L699.4 275.4 L702.3 275.7 L705.1 276.0 L707.6 276.4 L710.1 276.9 L712.4 277.3 L714.6 277.7 L716.8 278.0 L719.1 278.3 L721.6 278.6 L724.1 278.9 L726.7 279.3 L729.3 279.7 L731.9 280.4 L734.3 281.2 L736.5 282.1 L738.4 283.2 L739.9 284.5 L741.0 285.8 L741.7 287.2 L742.0 288.6 L741.9 290.1"/><path d="M762.5 290.1 L762.0 292.3 L761.0 294.5 L759.7 296.7 L758.0 298.8 L756.0 300.8 L753.6 302.7 L750.8 304.5 L747.7 306.1 L744.3 307.5 L740.5 308.7 L736.4 309.6 L732.2 310.3 L727.9 310.8 L723.7 311.0 L719.5 311.1 L715.4 311.1 L711.5 311.0 L707.6 311.0 L703.8 310.9 L699.9 310.9 L695.9 311.0 L691.6 311.0 L687.2 310.9 L682.7 310.7 L678.0 310.2 L673.5 309.4 L669.3 308.3 L665.5 306.9 L662.3 305.2 L659.8 303.2 L658.1 301.1 L657.1 298.8 L656.7 296.6 L656.9 294.3 L657.5 292.2 L658.2 290.1 L659.1 288.0 L659.9 286.1 L660.6 284.1 L661.4 282.1 L662.3 280.0 L663.3 277.9 L664.8 275.8 L666.7 273.7 L669.3 271.8 L672.4 270.1 L676.1 268.6 L680.4 267.6 L684.9 266.9 L689.7 266.6 L694.5 266.6 L699.1 267.0 L703.5 267.6 L707.6 268.3 L711.5 269.0 L715.2 269.7 L718.8 270.3 L722.4 270.8 L726.1 271.3 L729.9 271.7 L733.9 272.2 L738.1 272.8 L742.3 273.6 L746.5 274.6 L750.3 275.8 L753.8 277.4 L756.8 279.1 L759.2 281.1 L761.0 283.3 L762.1 285.5 L762.6 287.8 L762.5 290.1"/><path d="M783.1 290.1 L782.3 293.2 L781.0 296.2 L779.2 299.2 L776.9 302.1 L774.1 304.8 L770.8 307.4 L767.0 309.9 L762.8 312.1 L758.0 314.0 L752.8 315.7 L747.2 317.0 L741.4 317.9 L735.5 318.5 L729.7 318.9 L723.9 319.0 L718.3 319.0 L712.9 318.9 L707.6 318.8 L702.4 318.8 L697.0 318.8 L691.5 318.8 L685.6 318.8 L679.6 318.7 L673.3 318.4 L666.9 317.7 L660.7 316.7 L654.9 315.2 L649.7 313.2 L645.3 310.9 L641.9 308.1 L639.5 305.2 L638.1 302.1 L637.6 299.0 L637.9 295.9 L638.7 292.9 L639.7 290.1 L640.8 287.3 L642.0 284.6 L643.0 281.8 L644.1 279.0 L645.3 276.2 L646.7 273.3 L648.7 270.4 L651.4 267.6 L654.9 264.9 L659.2 262.6 L664.3 260.6 L670.1 259.1 L676.4 258.2 L683.0 257.8 L689.5 257.9 L695.9 258.4 L702.0 259.1 L707.6 260.1 L713.0 261.1 L718.0 262.0 L722.9 262.9 L727.9 263.6 L733.0 264.2 L738.3 264.8 L743.8 265.5 L749.5 266.3 L755.3 267.4 L761.0 268.7 L766.4 270.5 L771.2 272.6 L775.3 275.0 L778.6 277.8 L781.0 280.7 L782.5 283.8 L783.2 286.9 L783.1 290.1" stroke-dasharray="29 3"/><path d="M803.6 290.1 L802.7 294.0 L801.0 297.9 L798.7 301.7 L795.7 305.3 L792.2 308.8 L788.0 312.2 L783.2 315.3 L777.8 318.1 L771.7 320.6 L765.1 322.6 L758.0 324.3 L750.6 325.5 L743.1 326.3 L735.7 326.7 L728.4 326.9 L721.3 326.8 L714.4 326.7 L707.6 326.6 L700.9 326.6 L694.1 326.6 L687.0 326.7 L679.6 326.7 L671.9 326.6 L663.9 326.1 L655.8 325.3 L647.9 323.9 L640.5 322.0 L633.9 319.5 L628.3 316.5 L623.9 313.1 L620.9 309.3 L619.1 305.4 L618.6 301.4 L618.9 297.5 L619.9 293.7 L621.2 290.1 L622.6 286.5 L624.0 283.0 L625.4 279.6 L626.7 276.0 L628.2 272.4 L630.1 268.8 L632.7 265.1 L636.1 261.5 L640.5 258.1 L646.0 255.1 L652.5 252.6 L659.9 250.7 L667.9 249.5 L676.2 249.0 L684.6 249.1 L692.7 249.7 L700.4 250.7 L707.6 251.9 L714.4 253.2 L720.9 254.4 L727.1 255.5 L733.4 256.4 L739.9 257.2 L746.6 257.9 L753.7 258.8 L761.0 259.8 L768.3 261.2 L775.6 262.9 L782.4 265.2 L788.5 267.8 L793.7 271.0 L797.9 274.4 L801.0 278.2 L802.9 282.1 L803.8 286.1 L803.6 290.1"/><path d="M824.2 290.1 L823.1 294.9 L821.0 299.6 L818.2 304.2 L814.6 308.6 L810.3 312.9 L805.3 316.9 L799.4 320.7 L792.8 324.1 L785.4 327.1 L777.4 329.6 L768.8 331.6 L759.8 333.1 L750.7 334.1 L741.7 334.6 L732.8 334.7 L724.2 334.7 L715.8 334.6 L707.6 334.5 L699.5 334.4 L691.2 334.4 L682.6 334.5 L673.6 334.5 L664.2 334.4 L654.5 333.9 L644.7 332.8 L635.2 331.2 L626.1 328.9 L618.1 325.9 L611.3 322.2 L606.0 318.0 L602.3 313.5 L600.2 308.7 L599.5 303.9 L599.9 299.1 L601.0 294.5 L602.7 290.1 L604.4 285.8 L606.1 281.5 L607.8 277.3 L609.4 273.0 L611.2 268.7 L613.5 264.2 L616.6 259.7 L620.7 255.3 L626.1 251.2 L632.8 247.6 L640.7 244.5 L649.7 242.3 L659.4 240.8 L669.5 240.2 L679.6 240.3 L689.5 241.1 L698.9 242.3 L707.6 243.8 L715.9 245.3 L723.7 246.8 L731.3 248.1 L738.9 249.2 L746.8 250.1 L755.0 251.0 L763.5 252.1 L772.4 253.3 L781.3 255.0 L790.1 257.1 L798.4 259.8 L805.8 263.1 L812.2 266.9 L817.3 271.1 L821.0 275.6 L823.3 280.4 L824.3 285.2 L824.2 290.1"/><path d="M811.4 185.4 L811.3 185.8 L811.2 186.3 L811.1 186.8 L811.0 187.3 L810.9 187.8 L810.6 188.3 L810.1 188.8 L809.5 189.2 L808.8 189.6 L807.9 189.9 L806.9 190.1 L805.8 190.3 L804.8 190.4 L803.7 190.5 L802.7 190.6 L801.6 190.6 L800.6 190.7 L799.6 190.8 L798.6 190.9 L797.5 191.0 L796.3 191.1 L795.1 191.1 L793.8 191.1 L792.5 191.1 L791.2 190.9 L790.0 190.6 L788.9 190.3 L788.0 189.8 L787.3 189.3 L786.8 188.8 L786.4 188.2 L786.3 187.6 L786.2 187.0 L786.3 186.5 L786.4 185.9 L786.6 185.4 L786.8 184.9 L787.1 184.4 L787.5 183.9 L787.9 183.4 L788.4 183.0 L789.0 182.5 L789.7 182.2 L790.4 181.8 L791.3 181.5 L792.2 181.3 L793.1 181.1 L794.1 180.9 L795.0 180.8 L795.9 180.6 L796.8 180.5 L797.7 180.3 L798.6 180.0 L799.6 179.8 L800.7 179.5 L801.9 179.3 L803.3 179.1 L804.6 179.0 L806.0 179.0 L807.4 179.2 L808.7 179.4 L809.9 179.8 L810.8 180.2 L811.5 180.8 L812.0 181.4 L812.2 182.0 L812.2 182.7 L812.1 183.3 L811.9 183.9 L811.7 184.4 L811.5 184.9 L811.4 185.4"/><path d="M829.0 185.4 L828.7 186.5 L828.5 187.7 L828.4 188.9 L828.2 190.2 L827.7 191.4 L827.0 192.6 L825.9 193.8 L824.4 194.9 L822.5 195.9 L820.2 196.7 L817.8 197.3 L815.1 197.7 L812.5 198.1 L809.8 198.3 L807.2 198.4 L804.7 198.6 L802.2 198.7 L799.6 198.9 L797.0 199.2 L794.2 199.4 L791.3 199.7 L788.2 199.8 L785.0 199.8 L781.8 199.6 L778.6 199.2 L775.6 198.5 L772.9 197.7 L770.7 196.6 L768.9 195.3 L767.5 193.9 L766.7 192.4 L766.2 191.0 L766.1 189.5 L766.2 188.1 L766.6 186.7 L767.0 185.4 L767.6 184.1 L768.3 182.8 L769.2 181.6 L770.2 180.4 L771.5 179.3 L773.0 178.3 L774.7 177.3 L776.7 176.5 L778.8 175.8 L781.1 175.2 L783.4 174.7 L785.7 174.3 L788.0 173.9 L790.3 173.5 L792.5 173.1 L794.7 172.6 L797.1 172.0 L799.6 171.4 L802.4 170.8 L805.4 170.2 L808.7 169.8 L812.1 169.5 L815.7 169.5 L819.1 169.8 L822.3 170.4 L825.2 171.3 L827.5 172.5 L829.3 173.9 L830.5 175.4 L831.0 177.0 L831.1 178.6 L830.9 180.1 L830.4 181.6 L829.8 182.9 L829.3 184.2 L829.0 185.4"/><path d="M846.6 185.4 L846.1 187.2 L845.9 189.1 L845.6 191.0 L845.3 193.0 L844.6 195.0 L843.4 197.0 L841.6 198.9 L839.2 200.7 L836.2 202.2 L832.6 203.5 L828.7 204.5 L824.5 205.2 L820.2 205.7 L815.9 206.0 L811.8 206.2 L807.7 206.5 L803.7 206.7 L799.6 207.1 L795.4 207.5 L791.0 207.9 L786.3 208.2 L781.4 208.5 L776.2 208.5 L771.0 208.2 L766.0 207.5 L761.2 206.5 L756.9 205.0 L753.3 203.3 L750.4 201.2 L748.3 199.0 L746.9 196.7 L746.1 194.3 L746.0 192.0 L746.2 189.7 L746.7 187.5 L747.5 185.4 L748.4 183.3 L749.6 181.3 L750.9 179.4 L752.6 177.5 L754.6 175.7 L757.0 174.0 L759.7 172.5 L762.9 171.2 L766.3 170.0 L770.0 169.1 L773.7 168.3 L777.4 167.6 L781.1 167.0 L784.6 166.4 L788.2 165.7 L791.8 164.9 L795.6 164.0 L799.6 163.1 L804.1 162.1 L808.9 161.2 L814.1 160.5 L819.6 160.0 L825.3 160.0 L830.8 160.5 L836.0 161.5 L840.5 162.9 L844.3 164.8 L847.1 167.0 L848.9 169.5 L849.9 172.0 L850.0 174.5 L849.6 177.0 L848.9 179.3 L848.0 181.4 L847.2 183.5 L846.6 185.4" stroke-dasharray="13 4"/><path d="M864.2 185.4 L863.6 187.9 L863.2 190.5 L862.9 193.2 L862.4 195.9 L861.4 198.6 L859.8 201.4 L857.4 204.0 L854.1 206.4 L849.9 208.5 L845.0 210.3 L839.5 211.6 L833.8 212.6 L827.9 213.3 L822.1 213.7 L816.3 214.1 L810.7 214.4 L805.2 214.8 L799.6 215.2 L793.9 215.8 L787.8 216.3 L781.3 216.8 L774.5 217.1 L767.5 217.1 L760.3 216.7 L753.3 215.8 L746.8 214.4 L740.9 212.4 L735.9 210.0 L731.9 207.2 L729.0 204.1 L727.1 200.9 L726.1 197.7 L725.8 194.5 L726.2 191.3 L726.9 188.3 L727.9 185.4 L729.2 182.5 L730.8 179.8 L732.7 177.1 L734.9 174.5 L737.7 172.1 L741.0 169.8 L744.8 167.7 L749.1 165.9 L753.8 164.3 L758.8 163.0 L763.9 161.9 L769.1 161.0 L774.1 160.1 L779.0 159.3 L783.9 158.4 L788.9 157.3 L794.1 156.0 L799.6 154.7 L805.7 153.3 L812.4 152.1 L819.6 151.1 L827.2 150.5 L834.9 150.5 L842.5 151.2 L849.6 152.5 L855.9 154.5 L861.0 157.1 L864.9 160.1 L867.4 163.5 L868.7 167.0 L868.9 170.5 L868.4 173.9 L867.3 177.0 L866.1 180.0 L865.0 182.7 L864.2 185.4"/><path d="M881.7 185.4 L881.0 188.6 L880.6 191.9 L880.2 195.3 L879.5 198.8 L878.3 202.3 L876.2 205.7 L873.1 209.1 L868.9 212.1 L863.6 214.8 L857.3 217.0 L850.4 218.8 L843.1 220.0 L835.6 220.9 L828.2 221.5 L820.9 221.9 L813.8 222.3 L806.7 222.8 L799.6 223.4 L792.3 224.0 L784.5 224.8 L776.3 225.4 L767.7 225.8 L758.7 225.8 L749.6 225.3 L740.7 224.1 L732.4 222.3 L724.9 219.8 L718.5 216.7 L713.5 213.2 L709.7 209.3 L707.3 205.2 L706.0 201.1 L705.7 197.0 L706.1 193.0 L707.1 189.1 L708.4 185.4 L710.1 181.8 L712.0 178.3 L714.4 174.9 L717.3 171.6 L720.8 168.4 L725.0 165.5 L729.8 162.9 L735.3 160.5 L741.4 158.5 L747.7 156.9 L754.2 155.5 L760.7 154.3 L767.1 153.3 L773.4 152.2 L779.6 151.0 L785.9 149.6 L792.5 148.0 L799.6 146.3 L807.4 144.6 L815.8 143.0 L825.0 141.8 L834.7 141.1 L844.5 141.0 L854.2 141.8 L863.2 143.5 L871.2 146.1 L877.8 149.4 L882.7 153.3 L885.9 157.5 L887.6 162.0 L887.8 166.4 L887.1 170.7 L885.8 174.7 L884.2 178.5 L882.8 182.0 L881.7 185.4" stroke-dasharray="26 6"/><path d="M899.3 185.4 L898.5 189.4 L897.9 193.3 L897.4 197.4 L896.6 201.6 L895.2 205.9 L892.7 210.1 L888.9 214.1 L883.7 217.9 L877.3 221.1 L869.7 223.8 L861.3 225.9 L852.4 227.5 L843.3 228.5 L834.3 229.2 L825.4 229.7 L816.8 230.2 L808.3 230.8 L799.6 231.5 L790.7 232.3 L781.3 233.2 L771.3 234.0 L760.8 234.4 L749.9 234.5 L738.9 233.8 L728.1 232.4 L718.0 230.2 L708.9 227.2 L701.1 223.4 L695.0 219.1 L690.5 214.4 L687.5 209.4 L686.0 204.4 L685.6 199.4 L686.1 194.6 L687.2 189.9 L688.9 185.4 L690.9 181.0 L693.3 176.7 L696.2 172.6 L699.7 168.6 L703.9 164.8 L709.0 161.3 L714.9 158.0 L721.6 155.2 L728.9 152.8 L736.6 150.8 L744.5 149.1 L752.4 147.7 L760.2 146.4 L767.8 145.1 L775.3 143.6 L783.0 141.9 L791.0 140.0 L799.6 138.0 L809.0 135.9 L819.3 134.0 L830.4 132.4 L842.2 131.6 L854.1 131.5 L865.9 132.5 L876.9 134.6 L886.6 137.7 L894.5 141.7 L900.5 146.4 L904.4 151.6 L906.4 157.0 L906.7 162.4 L905.8 167.6 L904.2 172.5 L902.4 177.0 L900.7 181.3 L899.3 185.4"/><path d="M916.9 185.4 L915.9 190.1 L915.3 194.8 L914.7 199.6 L913.8 204.5 L912.0 209.5 L909.1 214.5 L904.6 219.2 L898.6 223.6 L891.0 227.4 L882.1 230.6 L872.2 233.1 L861.7 234.9 L851.0 236.1 L840.4 237.0 L830.0 237.6 L819.8 238.1 L809.8 238.8 L799.6 239.6 L789.1 240.6 L778.1 241.6 L766.4 242.5 L754.0 243.1 L741.2 243.1 L728.2 242.4 L715.5 240.7 L703.6 238.1 L692.9 234.5 L683.8 230.1 L676.5 225.1 L671.2 219.5 L667.7 213.7 L665.9 207.8 L665.5 201.9 L666.1 196.2 L667.4 190.7 L669.3 185.4 L671.7 180.2 L674.5 175.2 L677.9 170.3 L682.0 165.7 L687.0 161.2 L693.0 157.0 L699.9 153.2 L707.8 149.9 L716.4 147.0 L725.5 144.7 L734.7 142.7 L744.0 141.0 L753.2 139.5 L762.2 138.0 L771.0 136.3 L780.1 134.3 L789.5 132.0 L799.6 129.6 L810.7 127.1 L822.8 124.9 L835.9 123.1 L849.7 122.1 L863.8 122.0 L877.6 123.2 L890.5 125.6 L901.9 129.2 L911.3 134.0 L918.3 139.5 L922.9 145.6 L925.2 152.0 L925.6 158.3 L924.6 164.4 L922.7 170.2 L920.5 175.6 L918.5 180.6 L916.9 185.4" stroke-dasharray="27 6"/><path d="M934.5 185.4 L933.4 190.8 L932.6 196.2 L931.9 201.7 L930.9 207.4 L928.9 213.1 L925.5 218.8 L920.4 224.3 L913.4 229.3 L904.7 233.8 L894.4 237.4 L883.1 240.2 L871.0 242.3 L858.7 243.7 L846.5 244.7 L834.6 245.4 L822.9 246.1 L811.3 246.8 L799.6 247.8 L787.6 248.9 L774.8 250.1 L761.4 251.1 L747.1 251.8 L732.4 251.8 L717.5 250.9 L702.9 249.0 L689.2 246.0 L676.9 241.9 L666.4 236.8 L658.1 231.0 L651.9 224.6 L648.0 217.9 L645.9 211.1 L645.4 204.4 L646.0 197.8 L647.6 191.5 L649.8 185.4 L652.5 179.4 L655.7 173.7 L659.6 168.1 L664.4 162.7 L670.1 157.6 L677.0 152.8 L685.0 148.4 L694.0 144.6 L703.9 141.3 L714.3 138.6 L725.0 136.3 L735.7 134.4 L746.2 132.6 L756.5 130.9 L766.8 128.9 L777.1 126.6 L788.0 124.0 L799.6 121.2 L812.3 118.4 L826.3 115.8 L841.3 113.7 L857.2 112.6 L873.4 112.5 L889.3 113.9 L904.1 116.6 L917.2 120.8 L928.0 126.2 L936.1 132.6 L941.4 139.6 L944.1 147.0 L944.5 154.3 L943.3 161.3 L941.1 167.9 L938.6 174.1 L936.3 179.9 L934.5 185.4"/><path d="M952.1 185.4 L950.8 191.5 L949.9 197.6 L949.2 203.8 L948.0 210.2 L945.7 216.7 L941.9 223.2 L936.1 229.4 L928.3 235.1 L918.4 240.1 L906.8 244.2 L894.0 247.4 L880.3 249.7 L866.4 251.3 L852.6 252.4 L839.1 253.2 L825.9 254.0 L812.8 254.8 L799.6 255.9 L786.0 257.2 L771.6 258.5 L756.4 259.7 L740.3 260.4 L723.6 260.4 L706.7 259.5 L690.2 257.3 L674.7 253.9 L660.8 249.3 L649.0 243.6 L639.6 237.0 L632.7 229.8 L628.2 222.2 L625.8 214.5 L625.2 206.9 L626.0 199.5 L627.7 192.3 L630.2 185.4 L633.3 178.7 L637.0 172.2 L641.4 165.8 L646.7 159.7 L653.2 153.9 L661.0 148.5 L670.0 143.6 L680.2 139.2 L691.4 135.5 L703.2 132.5 L715.3 129.9 L727.4 127.7 L739.3 125.8 L750.9 123.7 L762.5 121.5 L774.2 119.0 L786.5 116.0 L799.6 112.9 L814.0 109.7 L829.7 106.7 L846.7 104.4 L864.7 103.1 L883.0 103.0 L901.0 104.5 L917.8 107.7 L932.6 112.4 L944.8 118.5 L953.9 125.7 L959.9 133.7 L962.9 142.0 L963.4 150.2 L962.1 158.1 L959.6 165.6 L956.8 172.6 L954.2 179.1 L952.1 185.4"/><path d="M932.0 118.9 L931.7 119.4 L931.4 119.9 L931.1 120.4 L930.7 120.9 L930.4 121.4 L930.1 122.0 L929.7 122.5 L929.2 123.0 L928.6 123.6 L927.8 124.0 L926.9 124.4 L925.8 124.7 L924.6 124.9 L923.3 124.9 L922.0 124.9 L920.8 124.7 L919.6 124.4 L918.6 124.1 L917.6 123.8 L916.8 123.6 L916.0 123.4 L915.2 123.2 L914.3 123.1 L913.3 123.1 L912.2 123.1 L911.1 123.1 L909.8 123.0 L908.5 122.8 L907.3 122.5 L906.3 122.2 L905.4 121.7 L904.8 121.2 L904.5 120.6 L904.5 120.0 L904.7 119.4 L905.0 118.9 L905.5 118.3 L906.0 117.8 L906.5 117.3 L907.0 116.9 L907.4 116.4 L907.7 115.9 L908.1 115.4 L908.5 114.9 L909.0 114.4 L909.7 113.9 L910.5 113.4 L911.4 113.0 L912.5 112.8 L913.8 112.6 L915.0 112.6 L916.3 112.7 L917.5 112.9 L918.6 113.2 L919.6 113.5 L920.5 113.8 L921.3 114.0 L922.2 114.2 L923.0 114.4 L923.9 114.5 L924.9 114.6 L925.9 114.7 L927.0 114.9 L928.2 115.1 L929.2 115.4 L930.2 115.7 L931.0 116.1 L931.6 116.6 L932.0 117.2 L932.2 117.7 L932.1 118.3 L932.0 118.9"/><path d="M952.1 118.9 L951.4 120.2 L950.6 121.5 L949.8 122.8 L949.0 124.0 L948.2 125.3 L947.4 126.6 L946.4 128.0 L945.2 129.3 L943.7 130.6 L941.7 131.8 L939.4 132.8 L936.6 133.5 L933.6 133.9 L930.4 134.1 L927.2 133.9 L924.1 133.4 L921.2 132.8 L918.6 132.1 L916.2 131.3 L914.1 130.7 L912.1 130.1 L910.1 129.8 L907.9 129.6 L905.5 129.5 L902.7 129.4 L899.8 129.4 L896.6 129.1 L893.4 128.7 L890.4 128.1 L887.8 127.2 L885.7 126.0 L884.2 124.7 L883.4 123.3 L883.3 121.8 L883.8 120.3 L884.7 118.9 L885.9 117.5 L887.2 116.3 L888.5 115.1 L889.6 113.9 L890.6 112.7 L891.5 111.5 L892.4 110.3 L893.4 109.0 L894.7 107.6 L896.3 106.4 L898.3 105.3 L900.7 104.3 L903.5 103.7 L906.5 103.3 L909.7 103.3 L912.8 103.6 L915.8 104.1 L918.6 104.7 L921.1 105.4 L923.4 106.2 L925.5 106.8 L927.5 107.3 L929.6 107.7 L931.9 108.1 L934.3 108.3 L937.0 108.6 L939.7 108.9 L942.5 109.4 L945.2 110.1 L947.6 111.0 L949.7 112.1 L951.2 113.3 L952.1 114.6 L952.5 116.0 L952.5 117.5 L952.1 118.9" stroke-dasharray="14 3"/><path d="M972.2 118.9 L971.1 121.0 L969.8 123.1 L968.5 125.1 L967.3 127.2 L966.0 129.2 L964.7 131.3 L963.1 133.5 L961.2 135.6 L958.7 137.7 L955.6 139.5 L951.9 141.1 L947.5 142.3 L942.6 143.0 L937.5 143.2 L932.3 142.9 L927.4 142.2 L922.7 141.2 L918.6 140.0 L914.8 138.8 L911.5 137.8 L908.2 136.9 L905.0 136.3 L901.5 136.0 L897.6 135.9 L893.2 135.8 L888.5 135.7 L883.4 135.3 L878.4 134.7 L873.6 133.6 L869.3 132.2 L865.9 130.4 L863.5 128.2 L862.3 125.9 L862.1 123.5 L862.9 121.1 L864.4 118.9 L866.3 116.7 L868.4 114.7 L870.4 112.8 L872.2 110.9 L873.8 109.1 L875.2 107.1 L876.7 105.1 L878.3 103.0 L880.3 100.9 L882.9 98.9 L886.1 97.1 L890.0 95.6 L894.4 94.6 L899.3 94.0 L904.4 94.0 L909.4 94.4 L914.2 95.2 L918.6 96.2 L922.6 97.4 L926.2 98.5 L929.6 99.6 L932.9 100.4 L936.3 101.1 L939.9 101.6 L943.8 102.0 L948.0 102.4 L952.4 103.0 L956.9 103.8 L961.2 104.9 L965.1 106.3 L968.3 108.0 L970.7 110.0 L972.3 112.1 L972.9 114.4 L972.8 116.6 L972.2 118.9" stroke-dasharray="17 7"/><path d="M992.3 118.9 L990.8 121.8 L989.1 124.7 L987.3 127.5 L985.5 130.3 L983.8 133.1 L982.0 136.0 L979.8 139.0 L977.2 141.9 L973.8 144.7 L969.5 147.3 L964.3 149.5 L958.3 151.1 L951.6 152.1 L944.6 152.3 L937.5 151.9 L930.6 150.9 L924.3 149.5 L918.6 147.9 L913.5 146.3 L908.8 144.8 L904.4 143.7 L899.9 142.9 L895.1 142.5 L889.7 142.3 L883.8 142.2 L877.2 142.0 L870.3 141.5 L863.3 140.6 L856.7 139.2 L850.8 137.2 L846.2 134.7 L842.9 131.8 L841.2 128.6 L841.0 125.3 L842.0 122.0 L844.1 118.9 L846.7 115.9 L849.5 113.1 L852.3 110.5 L854.8 108.0 L857.0 105.4 L859.0 102.7 L861.0 99.9 L863.2 97.1 L866.0 94.2 L869.5 91.4 L873.9 89.0 L879.3 86.9 L885.4 85.5 L892.1 84.7 L899.0 84.6 L905.9 85.2 L912.5 86.3 L918.6 87.7 L924.1 89.3 L929.1 90.9 L933.7 92.3 L938.2 93.5 L942.9 94.4 L947.8 95.1 L953.2 95.7 L959.0 96.3 L965.1 97.0 L971.3 98.1 L977.2 99.6 L982.5 101.5 L987.0 103.9 L990.3 106.6 L992.4 109.6 L993.3 112.7 L993.2 115.8 L992.3 118.9" stroke-dasharray="26 5"/><path d="M1012.4 118.9 L1010.5 122.6 L1008.3 126.3 L1006.0 129.8 L1003.8 133.4 L1001.6 137.0 L999.2 140.7 L996.5 144.4 L993.2 148.2 L988.9 151.8 L983.4 155.1 L976.8 157.8 L969.1 159.9 L960.6 161.1 L951.7 161.5 L942.6 160.9 L933.9 159.7 L925.9 157.9 L918.6 155.8 L912.1 153.8 L906.1 151.9 L900.5 150.5 L894.8 149.5 L888.7 148.9 L881.9 148.6 L874.3 148.5 L865.9 148.3 L857.1 147.7 L848.2 146.5 L839.8 144.7 L832.4 142.2 L826.4 139.0 L822.3 135.3 L820.1 131.2 L819.8 127.0 L821.2 122.8 L823.7 118.9 L827.1 115.1 L830.7 111.6 L834.2 108.3 L837.4 105.0 L840.2 101.7 L842.7 98.3 L845.3 94.8 L848.1 91.1 L851.6 87.5 L856.1 84.0 L861.7 80.8 L868.5 78.2 L876.3 76.4 L884.8 75.4 L893.7 75.3 L902.5 76.0 L910.8 77.4 L918.6 79.2 L925.6 81.3 L932.0 83.3 L937.9 85.1 L943.6 86.6 L949.5 87.8 L955.8 88.6 L962.6 89.4 L970.0 90.1 L977.8 91.1 L985.6 92.5 L993.2 94.4 L1000.0 96.8 L1005.6 99.8 L1009.8 103.3 L1012.5 107.1 L1013.7 111.0 L1013.5 115.0 L1012.4 118.9" stroke-dasharray="21 4"/><path d="M1032.5 118.9 L1030.2 123.4 L1027.5 127.9 L1024.8 132.2 L1022.0 136.5 L1019.4 140.9 L1016.5 145.4 L1013.2 149.9 L1009.2 154.5 L1003.9 158.8 L997.3 162.8 L989.3 166.2 L980.0 168.7 L969.6 170.2 L958.7 170.6 L947.8 169.9 L937.2 168.4 L927.4 166.3 L918.6 163.8 L910.7 161.3 L903.5 159.0 L896.6 157.2 L889.7 156.0 L882.3 155.3 L874.0 155.0 L864.8 154.9 L854.6 154.6 L843.9 153.8 L833.1 152.5 L822.9 150.3 L813.9 147.2 L806.7 143.3 L801.6 138.8 L799.0 133.9 L798.6 128.8 L800.3 123.7 L803.4 118.9 L807.5 114.3 L811.9 110.0 L816.2 106.0 L820.0 102.0 L823.4 98.1 L826.5 93.9 L829.5 89.6 L833.0 85.2 L837.3 80.7 L842.7 76.5 L849.6 72.7 L857.8 69.5 L867.3 67.3 L877.6 66.1 L888.4 66.0 L899.0 66.9 L909.2 68.5 L918.6 70.7 L927.1 73.2 L934.8 75.7 L942.0 77.9 L949.0 79.7 L956.1 81.1 L963.8 82.2 L972.1 83.0 L981.1 83.9 L990.5 85.1 L1000.0 86.8 L1009.2 89.1 L1017.4 92.1 L1024.3 95.8 L1029.4 99.9 L1032.7 104.5 L1034.1 109.3 L1033.9 114.1 L1032.5 118.9" stroke-dasharray="19 6"/><path d="M1052.6 118.9 L1049.9 124.2 L1046.8 129.4 L1043.5 134.5 L1040.3 139.6 L1037.1 144.8 L1033.8 150.0 L1030.0 155.4 L1025.1 160.8 L1019.0 165.9 L1011.2 170.6 L1001.8 174.5 L990.8 177.5 L978.6 179.2 L965.8 179.7 L952.9 179.0 L940.5 177.2 L929.0 174.6 L918.6 171.7 L909.3 168.7 L900.8 166.1 L892.8 164.0 L884.6 162.6 L875.9 161.8 L866.1 161.4 L855.3 161.2 L843.3 160.9 L830.7 160.0 L818.0 158.4 L806.0 155.8 L795.4 152.2 L786.9 147.6 L781.0 142.3 L777.9 136.5 L777.5 130.5 L779.4 124.6 L783.1 118.9 L787.9 113.5 L793.0 108.5 L798.1 103.7 L802.6 99.1 L806.6 94.4 L810.2 89.5 L813.8 84.5 L817.9 79.3 L822.9 74.0 L829.3 69.0 L837.4 64.5 L847.1 60.8 L858.2 58.2 L870.4 56.8 L883.0 56.7 L895.6 57.7 L907.5 59.6 L918.6 62.3 L928.6 65.2 L937.7 68.1 L946.1 70.7 L954.3 72.8 L962.8 74.4 L971.8 75.7 L981.5 76.7 L992.1 77.8 L1003.2 79.2 L1014.4 81.2 L1025.1 83.9 L1034.8 87.4 L1042.9 91.7 L1048.9 96.6 L1052.8 102.0 L1054.5 107.6 L1054.2 113.3 L1052.6 118.9"/><path d="M1072.7 118.9 L1069.6 125.0 L1066.0 131.0 L1062.2 136.9 L1058.6 142.7 L1054.9 148.6 L1051.1 154.7 L1046.7 160.9 L1041.1 167.0 L1034.0 173.0 L1025.1 178.4 L1014.3 182.9 L1001.6 186.3 L987.7 188.3 L972.9 188.8 L958.1 188.0 L943.8 185.9 L930.6 183.0 L918.6 179.6 L907.9 176.2 L898.1 173.2 L888.9 170.8 L879.5 169.1 L869.5 168.2 L858.3 167.8 L845.8 167.6 L832.0 167.2 L817.6 166.2 L803.0 164.3 L789.1 161.3 L776.9 157.2 L767.2 151.9 L760.4 145.8 L756.8 139.2 L756.3 132.3 L758.5 125.4 L762.8 118.9 L768.3 112.7 L774.2 106.9 L780.0 101.4 L785.3 96.1 L789.9 90.7 L794.0 85.1 L798.1 79.3 L802.8 73.3 L808.6 67.3 L816.0 61.5 L825.2 56.4 L836.4 52.1 L849.2 49.1 L863.2 47.5 L877.7 47.3 L892.1 48.5 L905.9 50.8 L918.6 53.8 L930.1 57.1 L940.5 60.4 L950.3 63.4 L959.7 65.9 L969.4 67.8 L979.7 69.2 L991.0 70.4 L1003.1 71.6 L1015.9 73.2 L1028.8 75.5 L1041.1 78.6 L1052.3 82.7 L1061.5 87.6 L1068.5 93.3 L1072.9 99.5 L1074.9 105.9 L1074.6 112.5 L1072.7 118.9"/><path d="M1092.8 118.9 L1089.3 125.9 L1085.2 132.6 L1081.0 139.2 L1076.8 145.8 L1072.7 152.5 L1068.4 159.4 L1063.4 166.4 L1057.1 173.3 L1049.1 180.0 L1039.0 186.1 L1026.7 191.2 L1012.5 195.1 L996.7 197.3 L980.0 198.0 L963.3 197.0 L947.1 194.7 L932.1 191.4 L918.6 187.6 L906.5 183.7 L895.5 180.3 L885.0 177.6 L874.4 175.7 L863.1 174.7 L850.4 174.2 L836.3 173.9 L820.8 173.5 L804.4 172.4 L787.9 170.2 L772.2 166.9 L758.5 162.2 L747.4 156.3 L739.7 149.4 L735.7 141.8 L735.1 134.0 L737.6 126.3 L742.4 118.9 L748.6 111.9 L755.4 105.4 L761.9 99.2 L767.9 93.1 L773.1 87.0 L777.8 80.7 L782.4 74.2 L787.7 67.4 L794.2 60.6 L802.6 54.1 L813.0 48.2 L825.7 43.4 L840.1 40.0 L855.9 38.2 L872.4 38.0 L888.7 39.3 L904.2 41.9 L918.6 45.3 L931.6 49.1 L943.4 52.8 L954.4 56.2 L965.1 59.0 L976.0 61.1 L987.7 62.7 L1000.4 64.1 L1014.1 65.5 L1028.6 67.3 L1043.1 69.9 L1057.1 73.4 L1069.7 78.0 L1080.2 83.5 L1088.1 89.9 L1093.1 96.9 L1095.2 104.3 L1094.9 111.6 L1092.8 118.9"/><path d="M1017.0 165.0 L1017.5 165.5 L1018.0 166.1 L1018.4 166.6 L1018.6 167.2 L1018.6 167.9 L1018.3 168.5 L1017.8 169.0 L1017.1 169.5 L1016.2 169.9 L1015.1 170.2 L1014.0 170.4 L1012.8 170.6 L1011.7 170.7 L1010.6 170.7 L1009.6 170.8 L1008.5 170.8 L1007.5 170.9 L1006.5 171.0 L1005.5 171.1 L1004.4 171.2 L1003.3 171.2 L1002.1 171.1 L1001.0 171.0 L1000.0 170.7 L999.2 170.3 L998.5 169.9 L998.0 169.3 L997.7 168.8 L997.5 168.2 L997.5 167.7 L997.5 167.1 L997.6 166.7 L997.6 166.2 L997.5 165.8 L997.3 165.4 L996.9 165.0 L996.5 164.6 L996.1 164.1 L995.7 163.6 L995.4 163.0 L995.2 162.4 L995.2 161.7 L995.5 161.1 L996.0 160.6 L996.7 160.1 L997.6 159.7 L998.6 159.3 L999.7 159.1 L1000.9 158.9 L1002.0 158.8 L1003.2 158.8 L1004.3 158.7 L1005.4 158.7 L1006.5 158.7 L1007.6 158.8 L1008.7 158.8 L1009.7 159.0 L1010.7 159.2 L1011.7 159.4 L1012.5 159.8 L1013.3 160.2 L1013.8 160.6 L1014.3 161.1 L1014.6 161.6 L1014.8 162.1 L1015.0 162.5 L1015.2 163.0 L1015.3 163.4 L1015.6 163.8 L1016.0 164.2 L1016.4 164.6 L1017.0 165.0" stroke-dasharray="12 4"/><path d="M1032.7 165.0 L1034.0 166.2 L1035.2 167.6 L1036.2 169.0 L1036.7 170.6 L1036.7 172.1 L1036.0 173.6 L1034.8 175.0 L1032.9 176.2 L1030.6 177.2 L1028.0 178.0 L1025.2 178.5 L1022.3 178.9 L1019.5 179.1 L1016.7 179.3 L1014.1 179.4 L1011.6 179.6 L1009.1 179.8 L1006.5 180.0 L1003.9 180.2 L1001.2 180.4 L998.4 180.4 L995.6 180.2 L992.9 179.8 L990.4 179.2 L988.2 178.3 L986.4 177.1 L985.2 175.8 L984.4 174.4 L984.0 173.0 L983.9 171.6 L984.0 170.3 L984.2 169.1 L984.2 168.1 L983.9 167.0 L983.4 166.0 L982.6 165.0 L981.6 163.9 L980.5 162.7 L979.4 161.4 L978.6 159.9 L978.2 158.4 L978.3 156.8 L979.0 155.3 L980.3 153.9 L982.1 152.7 L984.3 151.6 L986.8 150.8 L989.6 150.2 L992.5 149.8 L995.4 149.5 L998.2 149.4 L1001.0 149.3 L1003.8 149.2 L1006.5 149.3 L1009.2 149.4 L1011.9 149.6 L1014.5 149.9 L1017.1 150.4 L1019.4 151.0 L1021.6 151.8 L1023.4 152.8 L1024.8 154.0 L1026.0 155.2 L1026.8 156.4 L1027.3 157.7 L1027.7 158.8 L1028.1 159.9 L1028.6 161.0 L1029.3 161.9 L1030.2 162.9 L1031.4 163.9 L1032.7 165.0" stroke-dasharray="27 8"/><path d="M1048.3 165.0 L1050.5 167.0 L1052.4 169.1 L1054.0 171.5 L1054.8 173.9 L1054.8 176.4 L1053.7 178.8 L1051.7 181.0 L1048.8 183.0 L1045.1 184.6 L1040.9 185.8 L1036.4 186.6 L1031.8 187.2 L1027.3 187.5 L1022.9 187.8 L1018.7 188.0 L1014.6 188.3 L1010.6 188.6 L1006.5 189.0 L1002.3 189.3 L998.0 189.6 L993.5 189.6 L989.0 189.4 L984.7 188.7 L980.7 187.7 L977.2 186.2 L974.4 184.4 L972.4 182.3 L971.1 180.1 L970.5 177.8 L970.4 175.6 L970.6 173.5 L970.8 171.6 L970.8 169.9 L970.4 168.3 L969.5 166.7 L968.2 165.0 L966.6 163.3 L964.8 161.3 L963.2 159.2 L961.9 156.8 L961.3 154.4 L961.4 151.9 L962.5 149.4 L964.5 147.2 L967.4 145.2 L971.0 143.6 L975.0 142.3 L979.5 141.3 L984.0 140.6 L988.7 140.2 L993.2 140.0 L997.7 139.8 L1002.1 139.8 L1006.5 139.8 L1010.8 140.0 L1015.1 140.3 L1019.3 140.8 L1023.4 141.5 L1027.2 142.6 L1030.6 143.9 L1033.5 145.5 L1035.8 147.3 L1037.6 149.3 L1038.9 151.3 L1039.8 153.2 L1040.4 155.1 L1041.1 156.9 L1041.9 158.5 L1043.0 160.1 L1044.4 161.6 L1046.3 163.3 L1048.3 165.0" stroke-dasharray="9 5"/><path d="M1064.0 165.0 L1067.0 167.7 L1069.7 170.7 L1071.8 173.9 L1072.9 177.3 L1072.9 180.7 L1071.5 184.0 L1068.7 187.0 L1064.6 189.7 L1059.6 191.9 L1053.8 193.5 L1047.6 194.7 L1041.3 195.5 L1035.0 196.0 L1029.0 196.3 L1023.2 196.6 L1017.6 197.0 L1012.1 197.4 L1006.5 198.0 L1000.7 198.4 L994.7 198.8 L988.6 198.8 L982.4 198.5 L976.5 197.6 L971.0 196.2 L966.2 194.1 L962.4 191.6 L959.6 188.8 L957.8 185.7 L957.0 182.6 L956.9 179.5 L957.1 176.7 L957.4 174.1 L957.3 171.7 L956.8 169.5 L955.6 167.3 L953.9 165.0 L951.6 162.6 L949.2 159.9 L946.9 156.9 L945.2 153.7 L944.3 150.4 L944.5 146.9 L946.0 143.6 L948.8 140.5 L952.7 137.8 L957.6 135.5 L963.2 133.8 L969.3 132.4 L975.6 131.5 L982.0 130.9 L988.2 130.6 L994.4 130.4 L1000.5 130.3 L1006.5 130.4 L1012.5 130.6 L1018.4 131.0 L1024.2 131.7 L1029.7 132.7 L1034.9 134.2 L1039.6 136.0 L1043.6 138.2 L1046.8 140.7 L1049.3 143.4 L1051.0 146.1 L1052.3 148.8 L1053.2 151.4 L1054.0 153.8 L1055.1 156.1 L1056.6 158.2 L1058.7 160.4 L1061.2 162.6 L1064.0 165.0"/><path d="M1079.7 165.0 L1083.5 168.4 L1086.9 172.2 L1089.6 176.3 L1091.0 180.6 L1091.0 185.0 L1089.2 189.2 L1085.6 193.1 L1080.5 196.4 L1074.1 199.2 L1066.7 201.3 L1058.8 202.8 L1050.8 203.8 L1042.8 204.4 L1035.2 204.9 L1027.8 205.2 L1020.7 205.7 L1013.6 206.3 L1006.5 206.9 L999.2 207.6 L991.5 208.0 L983.7 208.1 L975.9 207.6 L968.3 206.5 L961.3 204.7 L955.2 202.1 L950.3 198.9 L946.8 195.2 L944.5 191.3 L943.5 187.3 L943.3 183.5 L943.6 179.9 L944.0 176.5 L943.9 173.5 L943.3 170.7 L941.8 167.9 L939.5 165.0 L936.6 161.9 L933.5 158.5 L930.7 154.7 L928.5 150.7 L927.3 146.3 L927.7 142.0 L929.5 137.8 L933.1 133.8 L938.1 130.4 L944.3 127.5 L951.4 125.2 L959.2 123.5 L967.2 122.4 L975.3 121.6 L983.3 121.1 L991.1 120.9 L998.9 120.8 L1006.5 120.9 L1014.1 121.2 L1021.6 121.7 L1029.0 122.6 L1036.1 123.9 L1042.7 125.8 L1048.6 128.1 L1053.7 130.9 L1057.8 134.1 L1061.0 137.5 L1063.2 141.0 L1064.7 144.4 L1065.9 147.7 L1067.0 150.8 L1068.4 153.6 L1070.3 156.4 L1072.9 159.1 L1076.1 161.9 L1079.7 165.0"/><path d="M1095.4 165.0 L1100.0 169.2 L1104.1 173.7 L1107.4 178.7 L1109.1 183.9 L1109.1 189.2 L1106.9 194.3 L1102.6 199.1 L1096.4 203.2 L1088.5 206.5 L1079.6 209.1 L1070.0 210.9 L1060.2 212.1 L1050.6 212.9 L1041.3 213.4 L1032.4 213.9 L1023.7 214.4 L1015.2 215.1 L1006.5 215.9 L997.6 216.7 L988.3 217.2 L978.8 217.3 L969.3 216.7 L960.1 215.4 L951.6 213.1 L944.2 210.0 L938.3 206.2 L934.0 201.7 L931.3 197.0 L930.0 192.1 L929.8 187.4 L930.1 183.0 L930.6 179.0 L930.5 175.3 L929.7 171.9 L927.9 168.5 L925.1 165.0 L921.7 161.3 L917.9 157.1 L914.4 152.5 L911.7 147.6 L910.4 142.3 L910.8 137.1 L913.1 131.9 L917.3 127.2 L923.4 123.0 L931.0 119.5 L939.6 116.7 L949.0 114.7 L958.8 113.2 L968.6 112.3 L978.3 111.7 L987.8 111.5 L997.2 111.4 L1006.5 111.4 L1015.7 111.8 L1024.8 112.4 L1033.8 113.5 L1042.4 115.1 L1050.4 117.4 L1057.7 120.2 L1063.8 123.6 L1068.8 127.4 L1072.6 131.6 L1075.3 135.8 L1077.2 140.0 L1078.6 144.0 L1080.0 147.7 L1081.7 151.2 L1084.0 154.5 L1087.1 157.8 L1091.0 161.3 L1095.4 165.0"/><path d="M1111.1 165.0 L1116.4 169.9 L1121.4 175.3 L1125.2 181.1 L1127.3 187.3 L1127.2 193.5 L1124.6 199.5 L1119.5 205.1 L1112.2 209.9 L1103.0 213.9 L1092.5 216.9 L1081.2 219.0 L1069.7 220.4 L1058.4 221.3 L1047.4 221.9 L1036.9 222.5 L1026.8 223.1 L1016.7 224.0 L1006.5 224.9 L996.0 225.8 L985.1 226.4 L973.9 226.5 L962.7 225.9 L951.9 224.3 L941.9 221.6 L933.2 218.0 L926.2 213.4 L921.2 208.2 L918.0 202.6 L916.5 196.9 L916.2 191.4 L916.7 186.2 L917.2 181.5 L917.1 177.1 L916.1 173.1 L914.0 169.1 L910.8 165.0 L906.7 160.6 L902.3 155.7 L898.2 150.3 L895.0 144.5 L893.4 138.3 L893.9 132.1 L896.6 126.1 L901.6 120.5 L908.7 115.5 L917.6 111.4 L927.8 108.2 L938.9 105.8 L950.3 104.1 L961.9 103.0 L973.3 102.3 L984.5 102.0 L995.6 101.9 L1006.5 102.0 L1017.3 102.4 L1028.1 103.1 L1038.6 104.4 L1048.7 106.3 L1058.2 108.9 L1066.7 112.3 L1074.0 116.3 L1079.8 120.8 L1084.3 125.7 L1087.5 130.7 L1089.7 135.6 L1091.3 140.2 L1092.9 144.6 L1094.9 148.7 L1097.6 152.7 L1101.3 156.6 L1105.9 160.6 L1111.1 165.0"/><path d="M1126.8 165.0 L1132.9 170.6 L1138.6 176.8 L1143.0 183.5 L1145.4 190.6 L1145.3 197.8 L1142.3 204.7 L1136.5 211.1 L1128.1 216.6 L1117.5 221.2 L1105.4 224.6 L1092.4 227.1 L1079.2 228.7 L1066.2 229.7 L1053.6 230.5 L1041.5 231.1 L1029.8 231.9 L1018.2 232.8 L1006.5 233.9 L994.4 234.9 L981.9 235.6 L969.1 235.7 L956.2 235.0 L943.7 233.2 L932.2 230.1 L922.2 225.9 L914.2 220.7 L908.4 214.7 L904.7 208.2 L903.0 201.7 L902.7 195.3 L903.2 189.4 L903.7 183.9 L903.7 179.0 L902.6 174.3 L900.1 169.7 L896.4 165.0 L891.7 159.9 L886.6 154.3 L881.9 148.1 L878.3 141.4 L876.5 134.3 L877.0 127.2 L880.1 120.2 L885.8 113.8 L894.0 108.1 L904.3 103.4 L916.0 99.6 L928.7 96.9 L941.9 94.9 L955.2 93.7 L968.3 92.9 L981.2 92.5 L994.0 92.4 L1006.5 92.5 L1019.0 93.0 L1031.3 93.9 L1043.4 95.3 L1055.1 97.5 L1065.9 100.5 L1075.7 104.4 L1084.1 109.0 L1090.8 114.2 L1096.0 119.8 L1099.6 125.5 L1102.2 131.1 L1104.1 136.5 L1105.9 141.6 L1108.2 146.3 L1111.3 150.8 L1115.5 155.3 L1120.8 160.0 L1126.8 165.0"/><path d="M1142.5 165.0 L1149.4 171.4 L1155.8 178.3 L1160.8 185.9 L1163.5 193.9 L1163.4 202.0 L1160.0 209.9 L1153.5 217.1 L1143.9 223.4 L1132.0 228.5 L1118.3 232.4 L1103.6 235.2 L1088.7 237.0 L1073.9 238.2 L1059.7 239.0 L1046.1 239.7 L1032.8 240.6 L1019.8 241.6 L1006.5 242.9 L992.9 244.0 L978.7 244.8 L964.2 245.0 L949.6 244.1 L935.5 242.0 L922.5 238.6 L911.3 233.9 L902.2 227.9 L895.6 221.2 L891.4 213.9 L889.5 206.5 L889.2 199.3 L889.7 192.6 L890.3 186.4 L890.3 180.8 L889.0 175.5 L886.3 170.3 L882.0 165.0 L876.7 159.3 L871.0 152.9 L865.7 145.9 L861.6 138.3 L859.5 130.3 L860.1 122.2 L863.6 114.4 L870.1 107.1 L879.4 100.7 L890.9 95.3 L904.2 91.1 L918.6 88.0 L933.5 85.8 L948.5 84.4 L963.4 83.5 L978.0 83.1 L992.3 82.9 L1006.5 83.1 L1020.6 83.6 L1034.5 84.6 L1048.2 86.2 L1061.4 88.7 L1073.7 92.1 L1084.7 96.5 L1094.2 101.7 L1101.8 107.6 L1107.6 113.9 L1111.8 120.3 L1114.6 126.7 L1116.8 132.8 L1118.9 138.5 L1121.4 143.9 L1125.0 149.0 L1129.8 154.0 L1135.7 159.3 L1142.5 165.0" stroke-dasharray="14 5"/><path d="M1158.1 165.0 L1165.9 172.1 L1173.0 179.9 L1178.6 188.4 L1181.6 197.3 L1181.5 206.3 L1177.7 215.0 L1170.4 223.1 L1159.8 230.1 L1146.4 235.8 L1131.2 240.2 L1114.8 243.3 L1098.2 245.3 L1081.7 246.6 L1065.9 247.5 L1050.6 248.3 L1035.9 249.3 L1021.3 250.5 L1006.5 251.8 L991.3 253.1 L975.5 254.0 L959.3 254.2 L943.0 253.3 L927.3 250.9 L912.8 247.1 L900.3 241.8 L890.1 235.2 L882.8 227.6 L878.2 219.5 L876.0 211.3 L875.6 203.3 L876.2 195.8 L876.9 188.9 L876.9 182.6 L875.5 176.7 L872.4 171.0 L867.7 165.0 L861.8 158.6 L855.4 151.5 L849.4 143.7 L844.8 135.3 L842.5 126.3 L843.2 117.3 L847.1 108.5 L854.4 100.4 L864.7 93.3 L877.6 87.3 L892.4 82.6 L908.4 79.1 L925.1 76.7 L941.8 75.1 L958.4 74.1 L974.7 73.6 L990.7 73.5 L1006.5 73.6 L1022.2 74.2 L1037.8 75.3 L1053.1 77.1 L1067.7 79.9 L1081.5 83.7 L1093.8 88.6 L1104.3 94.4 L1112.8 100.9 L1119.3 108.0 L1123.9 115.2 L1127.1 122.3 L1129.5 129.1 L1131.8 135.5 L1134.7 141.4 L1138.7 147.1 L1144.0 152.8 L1150.6 158.6 L1158.1 165.0" stroke-dasharray="11 7"/><path d="M1070.1 132.4 L1070.8 133.0 L1071.3 133.6 L1071.6 134.3 L1071.5 135.0 L1071.2 135.6 L1070.6 136.2 L1069.7 136.7 L1068.6 137.0 L1067.4 137.2 L1066.2 137.4 L1065.0 137.4 L1063.8 137.4 L1062.8 137.3 L1061.9 137.3 L1061.0 137.2 L1060.2 137.3 L1059.4 137.3 L1058.7 137.5 L1057.8 137.6 L1056.9 137.8 L1056.0 137.9 L1055.0 137.9 L1054.0 137.9 L1053.0 137.8 L1052.1 137.6 L1051.3 137.2 L1050.6 136.9 L1050.0 136.4 L1049.5 135.9 L1049.2 135.4 L1048.9 134.9 L1048.8 134.4 L1048.6 133.9 L1048.5 133.4 L1048.4 132.9 L1048.4 132.4 L1048.3 131.9 L1048.3 131.4 L1048.4 130.9 L1048.5 130.3 L1048.8 129.8 L1049.1 129.3 L1049.5 128.8 L1050.1 128.4 L1050.7 128.0 L1051.3 127.6 L1052.1 127.2 L1052.9 126.8 L1053.7 126.5 L1054.6 126.3 L1055.6 126.1 L1056.6 125.9 L1057.6 125.8 L1058.7 125.8 L1059.7 125.9 L1060.7 126.0 L1061.6 126.3 L1062.4 126.6 L1063.1 127.1 L1063.7 127.5 L1064.2 128.0 L1064.5 128.5 L1064.8 129.0 L1065.1 129.4 L1065.4 129.8 L1065.7 130.1 L1066.2 130.4 L1066.9 130.7 L1067.6 131.1 L1068.4 131.4 L1069.3 131.9 L1070.1 132.4"/><path d="M1087.3 132.4 L1089.0 133.9 L1090.3 135.5 L1091.0 137.2 L1090.9 138.9 L1090.0 140.5 L1088.5 141.9 L1086.3 143.1 L1083.6 144.0 L1080.6 144.5 L1077.5 144.8 L1074.5 144.9 L1071.6 144.8 L1069.0 144.7 L1066.7 144.6 L1064.5 144.5 L1062.5 144.6 L1060.6 144.8 L1058.7 145.1 L1056.6 145.5 L1054.4 145.8 L1052.0 146.1 L1049.5 146.2 L1047.0 146.2 L1044.6 145.9 L1042.3 145.3 L1040.2 144.6 L1038.4 143.6 L1037.0 142.5 L1035.8 141.2 L1035.0 139.9 L1034.4 138.7 L1033.9 137.4 L1033.6 136.1 L1033.3 134.9 L1033.1 133.6 L1032.9 132.4 L1032.8 131.1 L1032.8 129.9 L1033.0 128.6 L1033.4 127.3 L1034.0 126.0 L1034.8 124.7 L1035.9 123.5 L1037.2 122.4 L1038.7 121.3 L1040.4 120.3 L1042.2 119.4 L1044.2 118.6 L1046.4 117.8 L1048.6 117.1 L1051.0 116.6 L1053.5 116.2 L1056.1 115.9 L1058.7 115.9 L1061.2 116.1 L1063.7 116.5 L1066.0 117.2 L1068.1 118.0 L1069.8 119.1 L1071.3 120.3 L1072.4 121.5 L1073.3 122.7 L1074.0 123.9 L1074.7 124.9 L1075.4 125.9 L1076.4 126.7 L1077.6 127.5 L1079.2 128.2 L1081.0 129.1 L1083.1 130.0 L1085.2 131.1 L1087.3 132.4"/><path d="M1104.4 132.4 L1107.2 134.7 L1109.3 137.3 L1110.3 140.0 L1110.2 142.8 L1108.9 145.3 L1106.4 147.6 L1102.8 149.5 L1098.6 150.9 L1093.8 151.8 L1088.9 152.3 L1084.0 152.4 L1079.4 152.3 L1075.2 152.1 L1071.5 151.9 L1068.0 151.8 L1064.9 151.9 L1061.8 152.2 L1058.7 152.7 L1055.3 153.3 L1051.8 153.9 L1048.0 154.3 L1044.1 154.6 L1040.1 154.5 L1036.1 154.0 L1032.5 153.1 L1029.1 151.9 L1026.3 150.3 L1024.0 148.5 L1022.1 146.5 L1020.8 144.5 L1019.8 142.4 L1019.1 140.4 L1018.5 138.3 L1018.1 136.3 L1017.8 134.4 L1017.5 132.4 L1017.3 130.4 L1017.3 128.3 L1017.6 126.3 L1018.2 124.2 L1019.1 122.2 L1020.5 120.2 L1022.2 118.2 L1024.3 116.4 L1026.7 114.7 L1029.4 113.1 L1032.4 111.6 L1035.6 110.3 L1039.0 109.0 L1042.6 108.0 L1046.4 107.1 L1050.4 106.4 L1054.5 106.0 L1058.7 106.0 L1062.8 106.3 L1066.8 107.0 L1070.4 108.0 L1073.7 109.4 L1076.6 111.1 L1078.9 113.0 L1080.7 115.0 L1082.1 116.9 L1083.2 118.8 L1084.3 120.5 L1085.5 122.0 L1087.0 123.3 L1089.0 124.5 L1091.5 125.8 L1094.4 127.1 L1097.7 128.6 L1101.2 130.3 L1104.4 132.4"/><path d="M1121.6 132.4 L1125.5 135.6 L1128.3 139.2 L1129.7 142.9 L1129.5 146.7 L1127.7 150.2 L1124.2 153.3 L1119.4 155.9 L1113.5 157.9 L1107.0 159.1 L1100.2 159.8 L1093.5 159.9 L1087.2 159.8 L1081.5 159.4 L1076.3 159.2 L1071.6 159.1 L1067.2 159.2 L1063.0 159.7 L1058.7 160.3 L1054.1 161.1 L1049.2 161.9 L1044.0 162.6 L1038.6 162.9 L1033.1 162.7 L1027.7 162.1 L1022.6 160.9 L1018.1 159.2 L1014.2 157.0 L1011.0 154.5 L1008.5 151.8 L1006.6 149.0 L1005.2 146.2 L1004.2 143.3 L1003.5 140.6 L1002.9 137.8 L1002.4 135.1 L1002.0 132.4 L1001.8 129.6 L1001.9 126.8 L1002.2 124.0 L1003.0 121.2 L1004.3 118.3 L1006.1 115.6 L1008.5 112.9 L1011.4 110.4 L1014.7 108.0 L1018.4 105.8 L1022.5 103.8 L1026.9 102.0 L1031.6 100.3 L1036.6 98.8 L1041.8 97.6 L1047.3 96.7 L1052.9 96.2 L1058.7 96.1 L1064.3 96.5 L1069.8 97.4 L1074.9 98.9 L1079.4 100.8 L1083.3 103.1 L1086.4 105.7 L1088.9 108.4 L1090.9 111.1 L1092.4 113.7 L1093.9 116.0 L1095.6 118.1 L1097.7 119.9 L1100.4 121.6 L1103.8 123.3 L1107.9 125.1 L1112.4 127.1 L1117.1 129.5 L1121.6 132.4"/><path d="M1138.8 132.4 L1143.7 136.5 L1147.3 141.0 L1149.1 145.8 L1148.9 150.6 L1146.5 155.1 L1142.1 159.1 L1136.0 162.4 L1128.5 164.8 L1120.2 166.4 L1111.5 167.3 L1103.0 167.5 L1095.0 167.2 L1087.7 166.8 L1081.1 166.5 L1075.1 166.3 L1069.5 166.5 L1064.1 167.1 L1058.7 168.0 L1052.9 169.0 L1046.7 170.0 L1040.1 170.8 L1033.1 171.2 L1026.1 171.0 L1019.3 170.2 L1012.8 168.6 L1007.0 166.5 L1002.0 163.7 L997.9 160.6 L994.8 157.2 L992.4 153.6 L990.6 149.9 L989.4 146.3 L988.4 142.8 L987.7 139.3 L987.1 135.8 L986.6 132.4 L986.3 128.9 L986.4 125.3 L986.8 121.7 L987.8 118.1 L989.5 114.5 L991.8 111.0 L994.8 107.6 L998.5 104.4 L1002.7 101.4 L1007.5 98.6 L1012.7 96.0 L1018.3 93.7 L1024.2 91.5 L1030.6 89.7 L1037.2 88.1 L1044.2 87.0 L1051.4 86.3 L1058.7 86.2 L1065.9 86.7 L1072.8 87.9 L1079.3 89.8 L1085.1 92.2 L1090.0 95.2 L1094.0 98.5 L1097.2 101.9 L1099.6 105.3 L1101.7 108.6 L1103.5 111.5 L1105.6 114.2 L1108.3 116.5 L1111.8 118.7 L1116.1 120.8 L1121.3 123.1 L1127.0 125.7 L1133.0 128.8 L1138.8 132.4"/><path d="M1155.9 132.4 L1161.9 137.4 L1166.3 142.9 L1168.5 148.7 L1168.2 154.5 L1165.4 159.9 L1160.0 164.8 L1152.5 168.8 L1143.4 171.8 L1133.3 173.7 L1122.8 174.7 L1112.5 175.0 L1102.8 174.7 L1093.9 174.2 L1085.9 173.8 L1078.6 173.6 L1071.9 173.8 L1065.3 174.5 L1058.7 175.6 L1051.6 176.8 L1044.1 178.1 L1036.1 179.0 L1027.7 179.5 L1019.2 179.3 L1010.8 178.3 L1003.0 176.4 L995.9 173.8 L989.9 170.5 L984.9 166.6 L981.1 162.5 L978.2 158.1 L976.1 153.7 L974.5 149.3 L973.4 145.0 L972.5 140.8 L971.7 136.6 L971.2 132.4 L970.8 128.1 L970.9 123.8 L971.4 119.4 L972.7 115.1 L974.7 110.7 L977.5 106.4 L981.1 102.3 L985.6 98.4 L990.7 94.8 L996.5 91.4 L1002.8 88.2 L1009.6 85.4 L1016.9 82.8 L1024.6 80.5 L1032.6 78.6 L1041.1 77.2 L1049.8 76.4 L1058.7 76.3 L1067.4 76.9 L1075.9 78.4 L1083.7 80.6 L1090.7 83.6 L1096.7 87.2 L1101.6 91.2 L1105.4 95.4 L1108.4 99.5 L1110.9 103.5 L1113.2 107.1 L1115.7 110.3 L1118.9 113.1 L1123.1 115.7 L1128.4 118.3 L1134.7 121.1 L1141.7 124.3 L1149.0 128.0 L1155.9 132.4"/><path d="M1173.1 132.4 L1180.1 138.3 L1185.3 144.7 L1187.9 151.5 L1187.6 158.4 L1184.2 164.8 L1177.9 170.5 L1169.1 175.2 L1158.4 178.7 L1146.5 181.0 L1134.2 182.2 L1122.0 182.5 L1110.6 182.2 L1100.1 181.6 L1090.7 181.1 L1082.1 180.9 L1074.2 181.2 L1066.5 182.0 L1058.7 183.2 L1050.4 184.7 L1041.5 186.1 L1032.1 187.3 L1022.2 187.8 L1012.2 187.6 L1002.4 186.4 L993.1 184.2 L984.9 181.1 L977.7 177.2 L971.9 172.7 L967.4 167.8 L964.0 162.6 L961.5 157.5 L959.7 152.3 L958.3 147.3 L957.3 142.3 L956.4 137.3 L955.7 132.4 L955.3 127.4 L955.4 122.3 L956.1 117.2 L957.5 112.0 L959.8 106.9 L963.2 101.9 L967.5 97.0 L972.7 92.4 L978.7 88.1 L985.5 84.1 L993.0 80.4 L1001.0 77.1 L1009.5 74.0 L1018.5 71.4 L1028.1 69.1 L1038.0 67.5 L1048.3 66.5 L1058.7 66.4 L1069.0 67.1 L1078.9 68.8 L1088.1 71.5 L1096.4 75.0 L1103.4 79.2 L1109.2 83.9 L1113.7 88.9 L1117.2 93.7 L1120.1 98.4 L1122.8 102.6 L1125.8 106.4 L1129.6 109.7 L1134.5 112.8 L1140.7 115.8 L1148.1 119.1 L1156.4 122.8 L1164.9 127.2 L1173.1 132.4"/><path d="M1173.1 265.1 L1173.4 265.7 L1173.5 266.4 L1173.3 267.1 L1172.9 267.7 L1172.4 268.2 L1171.6 268.6 L1170.8 268.9 L1169.9 269.1 L1169.0 269.2 L1168.2 269.3 L1167.5 269.3 L1166.8 269.4 L1166.2 269.5 L1165.7 269.6 L1165.2 269.7 L1164.6 269.9 L1164.1 270.1 L1163.5 270.3 L1162.9 270.4 L1162.3 270.4 L1161.6 270.4 L1161.0 270.3 L1160.4 270.1 L1159.8 269.9 L1159.3 269.6 L1158.7 269.4 L1158.2 269.1 L1157.6 268.8 L1157.0 268.5 L1156.3 268.2 L1155.6 267.8 L1155.0 267.4 L1154.4 266.9 L1153.9 266.3 L1153.5 265.7 L1153.4 265.1 L1153.5 264.4 L1153.8 263.8 L1154.3 263.2 L1155.0 262.7 L1155.8 262.3 L1156.7 262.1 L1157.5 261.9 L1158.3 261.8 L1159.0 261.7 L1159.6 261.5 L1160.1 261.3 L1160.5 261.1 L1160.9 260.8 L1161.2 260.4 L1161.7 259.9 L1162.2 259.5 L1162.8 259.1 L1163.5 258.8 L1164.3 258.6 L1165.0 258.6 L1165.8 258.7 L1166.4 259.0 L1167.0 259.4 L1167.5 259.9 L1167.8 260.4 L1168.1 260.9 L1168.4 261.4 L1168.7 261.8 L1169.0 262.1 L1169.4 262.5 L1170.0 262.8 L1170.6 263.1 L1171.3 263.5 L1172.0 263.9 L1172.6 264.5 L1173.1 265.1" stroke-dasharray="29 4"/><path d="M1187.5 265.1 L1188.2 266.7 L1188.5 268.4 L1188.1 270.0 L1187.1 271.6 L1185.6 272.9 L1183.8 273.9 L1181.6 274.7 L1179.4 275.2 L1177.3 275.5 L1175.2 275.6 L1173.4 275.7 L1171.8 275.9 L1170.3 276.1 L1169.0 276.4 L1167.7 276.8 L1166.3 277.2 L1165.0 277.7 L1163.5 278.0 L1162.0 278.3 L1160.4 278.4 L1158.8 278.3 L1157.3 278.1 L1155.8 277.6 L1154.3 277.1 L1153.0 276.5 L1151.6 275.8 L1150.2 275.1 L1148.7 274.4 L1147.2 273.7 L1145.5 272.9 L1143.9 272.0 L1142.2 270.9 L1140.7 269.7 L1139.4 268.3 L1138.6 266.7 L1138.2 265.1 L1138.4 263.4 L1139.2 261.8 L1140.5 260.4 L1142.2 259.2 L1144.2 258.3 L1146.4 257.6 L1148.5 257.1 L1150.5 256.8 L1152.2 256.5 L1153.7 256.2 L1154.9 255.8 L1155.9 255.1 L1156.9 254.3 L1157.9 253.3 L1159.0 252.2 L1160.3 251.1 L1161.8 250.1 L1163.5 249.4 L1165.4 248.9 L1167.3 248.9 L1169.1 249.2 L1170.8 249.9 L1172.2 251.0 L1173.4 252.1 L1174.3 253.4 L1175.0 254.7 L1175.7 255.8 L1176.4 256.9 L1177.3 257.8 L1178.3 258.6 L1179.7 259.4 L1181.2 260.2 L1183.0 261.1 L1184.7 262.2 L1186.2 263.6 L1187.5 265.1"/><path d="M1201.8 265.1 L1203.1 267.7 L1203.4 270.4 L1202.8 273.0 L1201.3 275.5 L1198.9 277.5 L1195.9 279.2 L1192.5 280.4 L1189.0 281.2 L1185.5 281.7 L1182.3 282.0 L1179.3 282.1 L1176.7 282.4 L1174.4 282.7 L1172.2 283.2 L1170.1 283.8 L1168.0 284.5 L1165.8 285.2 L1163.5 285.8 L1161.1 286.3 L1158.5 286.4 L1156.0 286.3 L1153.5 285.9 L1151.1 285.2 L1148.8 284.3 L1146.6 283.3 L1144.4 282.3 L1142.2 281.2 L1139.9 280.1 L1137.4 278.9 L1134.8 277.6 L1132.1 276.2 L1129.4 274.5 L1127.0 272.5 L1125.0 270.2 L1123.6 267.7 L1123.0 265.1 L1123.3 262.4 L1124.6 259.9 L1126.7 257.6 L1129.4 255.7 L1132.7 254.2 L1136.1 253.1 L1139.5 252.4 L1142.7 251.9 L1145.5 251.4 L1147.8 250.9 L1149.8 250.2 L1151.4 249.2 L1152.9 247.9 L1154.5 246.2 L1156.2 244.5 L1158.3 242.7 L1160.7 241.1 L1163.5 239.9 L1166.5 239.2 L1169.5 239.2 L1172.5 239.7 L1175.1 240.9 L1177.4 242.5 L1179.3 244.4 L1180.7 246.4 L1181.9 248.5 L1183.0 250.3 L1184.1 252.0 L1185.5 253.4 L1187.3 254.7 L1189.4 255.9 L1191.9 257.2 L1194.6 258.8 L1197.3 260.5 L1199.8 262.7 L1201.8 265.1" stroke-dasharray="17 3"/><path d="M1216.2 265.1 L1217.9 268.7 L1218.4 272.4 L1217.6 276.0 L1215.4 279.4 L1212.2 282.2 L1208.0 284.5 L1203.4 286.2 L1198.5 287.3 L1193.8 287.9 L1189.3 288.3 L1185.2 288.6 L1181.7 288.8 L1178.4 289.3 L1175.5 290.0 L1172.6 290.8 L1169.7 291.8 L1166.7 292.8 L1163.5 293.6 L1160.1 294.2 L1156.7 294.4 L1153.2 294.2 L1149.8 293.7 L1146.5 292.7 L1143.3 291.5 L1140.3 290.2 L1137.3 288.7 L1134.2 287.2 L1131.0 285.7 L1127.6 284.1 L1124.0 282.3 L1120.3 280.3 L1116.6 278.0 L1113.3 275.2 L1110.5 272.1 L1108.6 268.7 L1107.8 265.1 L1108.3 261.4 L1110.0 257.9 L1112.8 254.8 L1116.6 252.2 L1121.1 250.1 L1125.8 248.6 L1130.5 247.6 L1134.9 246.9 L1138.7 246.3 L1141.9 245.6 L1144.6 244.6 L1146.9 243.2 L1148.9 241.4 L1151.1 239.2 L1153.5 236.8 L1156.3 234.3 L1159.7 232.2 L1163.5 230.5 L1167.6 229.6 L1171.8 229.5 L1175.8 230.2 L1179.5 231.8 L1182.6 234.0 L1185.2 236.6 L1187.2 239.5 L1188.8 242.2 L1190.3 244.8 L1191.9 247.1 L1193.8 249.0 L1196.2 250.8 L1199.1 252.5 L1202.5 254.3 L1206.3 256.4 L1210.0 258.9 L1213.5 261.8 L1216.2 265.1"/><path d="M1230.6 265.1 L1232.7 269.6 L1233.4 274.4 L1232.3 279.0 L1229.6 283.3 L1225.4 286.9 L1220.2 289.8 L1214.3 292.0 L1208.1 293.4 L1202.0 294.2 L1196.3 294.6 L1191.2 295.0 L1186.6 295.3 L1182.5 295.9 L1178.7 296.7 L1175.1 297.8 L1171.4 299.1 L1167.6 300.3 L1163.5 301.4 L1159.2 302.2 L1154.8 302.4 L1150.4 302.2 L1146.0 301.5 L1141.8 300.3 L1137.8 298.7 L1133.9 297.0 L1130.1 295.2 L1126.2 293.3 L1122.2 291.3 L1117.8 289.3 L1113.2 287.0 L1108.5 284.5 L1103.8 281.5 L1099.6 278.0 L1096.1 274.1 L1093.7 269.7 L1092.7 265.1 L1093.2 260.4 L1095.4 256.0 L1099.0 252.0 L1103.9 248.6 L1109.5 246.0 L1115.6 244.1 L1121.5 242.8 L1127.1 241.9 L1132.0 241.2 L1136.1 240.3 L1139.4 239.1 L1142.3 237.3 L1145.0 235.0 L1147.7 232.1 L1150.8 229.0 L1154.4 225.9 L1158.7 223.2 L1163.5 221.1 L1168.7 219.9 L1174.1 219.8 L1179.2 220.7 L1183.9 222.7 L1187.9 225.6 L1191.1 228.9 L1193.7 232.5 L1195.7 236.0 L1197.6 239.3 L1199.6 242.1 L1202.0 244.7 L1205.1 246.9 L1208.8 249.1 L1213.2 251.4 L1217.9 254.0 L1222.7 257.2 L1227.1 260.9 L1230.6 265.1" stroke-dasharray="30 8"/><path d="M1244.9 265.1 L1247.6 270.6 L1248.3 276.4 L1247.0 282.0 L1243.7 287.2 L1238.7 291.6 L1232.3 295.1 L1225.1 297.7 L1217.6 299.4 L1210.3 300.4 L1203.3 301.0 L1197.1 301.4 L1191.5 301.8 L1186.6 302.5 L1182.0 303.5 L1177.6 304.9 L1173.1 306.4 L1168.5 307.9 L1163.5 309.2 L1158.3 310.1 L1152.9 310.5 L1147.5 310.2 L1142.3 309.3 L1137.2 307.8 L1132.3 306.0 L1127.6 303.9 L1123.0 301.6 L1118.3 299.3 L1113.3 296.9 L1108.0 294.5 L1102.4 291.7 L1096.7 288.6 L1091.1 285.0 L1085.9 280.8 L1081.6 276.0 L1078.7 270.7 L1077.5 265.1 L1078.2 259.4 L1080.8 254.0 L1085.2 249.2 L1091.1 245.1 L1098.0 241.9 L1105.3 239.6 L1112.6 238.1 L1119.3 237.0 L1125.2 236.1 L1130.2 235.0 L1134.3 233.5 L1137.8 231.3 L1141.0 228.5 L1144.3 225.1 L1148.0 221.3 L1152.4 217.6 L1157.6 214.2 L1163.5 211.6 L1169.9 210.2 L1176.3 210.1 L1182.6 211.2 L1188.2 213.7 L1193.1 217.1 L1197.0 221.1 L1200.1 225.5 L1202.7 229.8 L1204.9 233.7 L1207.4 237.2 L1210.3 240.3 L1214.0 243.0 L1218.5 245.7 L1223.8 248.5 L1229.6 251.7 L1235.4 255.5 L1240.7 260.0 L1244.9 265.1"/><path d="M1259.3 265.1 L1262.4 271.6 L1263.3 278.4 L1261.8 285.0 L1257.9 291.1 L1252.0 296.3 L1244.5 300.4 L1236.0 303.5 L1227.2 305.5 L1218.5 306.7 L1210.4 307.3 L1203.0 307.8 L1196.5 308.3 L1190.7 309.1 L1185.3 310.3 L1180.1 311.9 L1174.8 313.7 L1169.3 315.5 L1163.5 317.0 L1157.4 318.1 L1151.1 318.5 L1144.7 318.1 L1138.5 317.1 L1132.5 315.4 L1126.8 313.2 L1121.3 310.7 L1115.8 308.1 L1110.3 305.3 L1104.4 302.6 L1098.2 299.7 L1091.7 296.5 L1084.9 292.8 L1078.3 288.5 L1072.2 283.6 L1067.2 277.9 L1063.8 271.7 L1062.3 265.1 L1063.1 258.4 L1066.2 252.1 L1071.4 246.4 L1078.3 241.6 L1086.4 237.9 L1095.0 235.1 L1103.6 233.3 L1111.5 232.0 L1118.4 231.0 L1124.3 229.7 L1129.1 227.9 L1133.2 225.4 L1137.0 222.0 L1140.9 218.0 L1145.3 213.6 L1150.5 209.2 L1156.6 205.2 L1163.5 202.2 L1171.0 200.5 L1178.6 200.3 L1185.9 201.8 L1192.6 204.6 L1198.3 208.6 L1202.9 213.4 L1206.6 218.5 L1209.6 223.5 L1212.2 228.2 L1215.1 232.3 L1218.5 235.9 L1222.9 239.1 L1228.2 242.2 L1234.5 245.5 L1241.3 249.3 L1248.1 253.8 L1254.3 259.1 L1259.3 265.1" stroke-dasharray="12 6"/><path d="M1273.7 265.1 L1277.3 272.6 L1278.3 280.4 L1276.5 288.0 L1272.1 295.0 L1265.2 301.0 L1256.6 305.7 L1246.9 309.2 L1236.7 311.6 L1226.7 312.9 L1217.4 313.7 L1209.0 314.2 L1201.4 314.8 L1194.7 315.7 L1188.5 317.1 L1182.6 318.9 L1176.5 321.0 L1170.2 323.0 L1163.5 324.8 L1156.5 326.0 L1149.2 326.5 L1141.9 326.1 L1134.7 324.9 L1127.9 322.9 L1121.3 320.4 L1114.9 317.5 L1108.7 314.5 L1102.3 311.4 L1095.6 308.2 L1088.4 304.8 L1080.9 301.2 L1073.1 297.0 L1065.5 292.1 L1058.5 286.4 L1052.7 279.8 L1048.8 272.7 L1047.1 265.1 L1048.0 257.4 L1051.6 250.1 L1057.6 243.6 L1065.5 238.1 L1074.8 233.8 L1084.7 230.7 L1094.6 228.5 L1103.7 227.1 L1111.7 225.8 L1118.4 224.4 L1124.0 222.3 L1128.7 219.4 L1133.0 215.6 L1137.5 211.0 L1142.5 205.9 L1148.5 200.8 L1155.6 196.3 L1163.5 192.8 L1172.1 190.8 L1180.9 190.6 L1189.3 192.3 L1197.0 195.5 L1203.5 200.2 L1208.8 205.6 L1213.1 211.5 L1216.5 217.3 L1219.6 222.7 L1222.8 227.4 L1226.8 231.5 L1231.8 235.2 L1237.9 238.8 L1245.1 242.6 L1252.9 246.9 L1260.8 252.1 L1268.0 258.2 L1273.7 265.1" stroke-dasharray="11 6"/><path d="M1288.0 265.1 L1292.1 273.6 L1293.2 282.4 L1291.3 291.0 L1286.2 298.9 L1278.5 305.6 L1268.8 311.1 L1257.8 315.0 L1246.3 317.6 L1235.0 319.2 L1224.4 320.0 L1214.9 320.6 L1206.4 321.3 L1198.8 322.3 L1191.8 323.9 L1185.1 325.9 L1178.2 328.2 L1171.1 330.6 L1163.5 332.6 L1155.5 334.0 L1147.3 334.5 L1139.1 334.0 L1131.0 332.7 L1123.2 330.4 L1115.8 327.6 L1108.6 324.4 L1101.5 321.0 L1094.3 317.4 L1086.7 313.8 L1078.6 310.0 L1070.1 305.9 L1061.3 301.1 L1052.7 295.6 L1044.8 289.1 L1038.3 281.8 L1033.8 273.6 L1031.9 265.1 L1033.0 256.4 L1037.0 248.2 L1043.8 240.8 L1052.7 234.6 L1063.3 229.7 L1074.5 226.2 L1085.6 223.8 L1095.9 222.1 L1104.9 220.7 L1112.5 219.1 L1118.8 216.8 L1124.1 213.5 L1129.0 209.1 L1134.1 203.9 L1139.8 198.2 L1146.6 192.4 L1154.5 187.3 L1163.5 183.4 L1173.2 181.2 L1183.1 180.9 L1192.7 182.8 L1201.3 186.5 L1208.7 191.7 L1214.8 197.9 L1219.5 204.5 L1223.4 211.1 L1226.9 217.1 L1230.6 222.5 L1235.0 227.2 L1240.7 231.4 L1247.6 235.4 L1255.8 239.7 L1264.6 244.6 L1273.5 250.4 L1281.6 257.2 L1288.0 265.1"/><path d="M1260.4 220.5 L1259.9 221.0 L1259.3 221.4 L1258.7 221.8 L1258.2 222.2 L1257.8 222.5 L1257.5 222.9 L1257.4 223.3 L1257.3 223.8 L1257.2 224.4 L1257.0 225.0 L1256.7 225.7 L1256.3 226.3 L1255.7 226.9 L1254.9 227.3 L1253.9 227.6 L1252.9 227.7 L1251.9 227.6 L1250.8 227.4 L1249.9 227.0 L1249.1 226.5 L1248.4 226.1 L1247.8 225.6 L1247.3 225.2 L1246.8 224.9 L1246.2 224.6 L1245.5 224.4 L1244.7 224.3 L1243.9 224.1 L1242.9 223.9 L1242.0 223.6 L1241.2 223.3 L1240.5 222.8 L1240.0 222.3 L1239.8 221.7 L1239.9 221.1 L1240.2 220.5 L1240.7 220.0 L1241.3 219.5 L1242.0 219.1 L1242.7 218.7 L1243.4 218.4 L1243.9 218.0 L1244.3 217.7 L1244.6 217.3 L1244.9 216.8 L1245.2 216.3 L1245.5 215.8 L1245.9 215.3 L1246.5 214.8 L1247.2 214.3 L1248.0 214.0 L1248.9 213.8 L1249.9 213.7 L1250.8 213.8 L1251.8 214.0 L1252.6 214.3 L1253.4 214.6 L1254.1 215.0 L1254.8 215.3 L1255.5 215.6 L1256.1 215.8 L1256.9 216.1 L1257.6 216.3 L1258.4 216.6 L1259.2 216.9 L1259.9 217.3 L1260.5 217.7 L1260.9 218.2 L1261.1 218.8 L1261.1 219.4 L1260.9 220.0 L1260.4 220.5" stroke-dasharray="19 3"/><path d="M1274.9 220.5 L1273.5 221.7 L1272.0 222.8 L1270.5 223.8 L1269.2 224.6 L1268.2 225.5 L1267.5 226.5 L1267.1 227.5 L1266.9 228.8 L1266.6 230.2 L1266.2 231.8 L1265.5 233.5 L1264.4 235.0 L1262.9 236.4 L1260.9 237.5 L1258.5 238.2 L1256.0 238.5 L1253.4 238.3 L1250.8 237.7 L1248.5 236.7 L1246.5 235.6 L1244.8 234.4 L1243.3 233.2 L1242.0 232.2 L1240.6 231.4 L1239.2 230.8 L1237.5 230.3 L1235.5 229.9 L1233.4 229.5 L1231.1 229.0 L1228.8 228.4 L1226.7 227.5 L1225.0 226.3 L1223.8 225.0 L1223.3 223.5 L1223.4 222.0 L1224.2 220.5 L1225.5 219.1 L1227.1 217.9 L1228.8 216.9 L1230.6 216.0 L1232.2 215.1 L1233.5 214.3 L1234.5 213.5 L1235.3 212.5 L1236.0 211.4 L1236.7 210.1 L1237.5 208.7 L1238.6 207.4 L1240.0 206.1 L1241.7 205.0 L1243.8 204.2 L1246.0 203.7 L1248.4 203.6 L1250.8 203.8 L1253.1 204.3 L1255.3 205.0 L1257.2 205.8 L1259.0 206.7 L1260.7 207.5 L1262.4 208.2 L1264.1 208.8 L1265.9 209.4 L1267.9 210.0 L1269.8 210.7 L1271.8 211.5 L1273.6 212.4 L1275.0 213.5 L1276.1 214.8 L1276.6 216.2 L1276.5 217.7 L1275.9 219.2 L1274.9 220.5" stroke-dasharray="22 6"/><path d="M1289.3 220.5 L1287.1 222.5 L1284.7 224.2 L1282.3 225.7 L1280.3 227.1 L1278.7 228.5 L1277.6 230.0 L1276.9 231.8 L1276.5 233.8 L1276.1 236.1 L1275.5 238.6 L1274.4 241.2 L1272.6 243.8 L1270.1 246.0 L1266.9 247.7 L1263.2 248.9 L1259.1 249.3 L1254.9 248.9 L1250.8 247.9 L1247.2 246.5 L1243.9 244.6 L1241.2 242.7 L1238.8 240.9 L1236.7 239.3 L1234.5 237.9 L1232.2 237.0 L1229.5 236.2 L1226.4 235.6 L1222.9 235.0 L1219.2 234.2 L1215.5 233.1 L1212.2 231.6 L1209.4 229.8 L1207.6 227.7 L1206.7 225.3 L1206.9 222.9 L1208.2 220.5 L1210.2 218.3 L1212.8 216.4 L1215.7 214.7 L1218.4 213.2 L1221.0 211.9 L1223.1 210.6 L1224.7 209.2 L1226.0 207.7 L1227.1 205.9 L1228.2 203.9 L1229.5 201.7 L1231.2 199.5 L1233.4 197.5 L1236.2 195.7 L1239.5 194.4 L1243.2 193.7 L1247.0 193.5 L1250.8 193.8 L1254.5 194.6 L1257.9 195.7 L1261.0 197.0 L1263.9 198.4 L1266.6 199.6 L1269.3 200.8 L1272.1 201.8 L1275.0 202.8 L1278.1 203.7 L1281.2 204.8 L1284.4 206.0 L1287.2 207.6 L1289.6 209.4 L1291.2 211.4 L1292.0 213.7 L1291.9 216.0 L1291.0 218.3 L1289.3 220.5"/><path d="M1303.7 220.5 L1300.6 223.2 L1297.3 225.6 L1294.1 227.7 L1291.3 229.6 L1289.1 231.5 L1287.6 233.6 L1286.7 236.0 L1286.1 238.8 L1285.6 241.9 L1284.7 245.4 L1283.2 249.0 L1280.8 252.5 L1277.3 255.6 L1272.9 258.0 L1267.8 259.5 L1262.1 260.0 L1256.4 259.6 L1250.8 258.2 L1245.8 256.2 L1241.4 253.7 L1237.6 251.0 L1234.3 248.5 L1231.4 246.3 L1228.4 244.5 L1225.2 243.1 L1221.5 242.1 L1217.2 241.3 L1212.4 240.4 L1207.3 239.3 L1202.3 237.8 L1197.7 235.8 L1193.9 233.3 L1191.3 230.3 L1190.2 227.1 L1190.5 223.8 L1192.2 220.5 L1195.0 217.5 L1198.5 214.8 L1202.5 212.5 L1206.3 210.5 L1209.8 208.7 L1212.7 206.9 L1214.9 205.0 L1216.7 202.8 L1218.2 200.4 L1219.7 197.6 L1221.5 194.6 L1223.8 191.7 L1226.9 188.9 L1230.8 186.5 L1235.3 184.7 L1240.3 183.6 L1245.6 183.3 L1250.8 183.8 L1255.9 184.9 L1260.6 186.4 L1264.9 188.2 L1268.8 190.0 L1272.5 191.8 L1276.2 193.4 L1280.0 194.8 L1284.0 196.1 L1288.3 197.4 L1292.6 198.9 L1296.9 200.6 L1300.8 202.7 L1304.1 205.2 L1306.4 208.0 L1307.5 211.1 L1307.3 214.4 L1306.0 217.5 L1303.7 220.5"/><path d="M1318.1 220.5 L1314.2 223.9 L1310.0 226.9 L1305.9 229.6 L1302.3 232.1 L1299.5 234.5 L1297.6 237.2 L1296.4 240.2 L1295.7 243.7 L1295.1 247.8 L1294.0 252.2 L1292.0 256.8 L1288.9 261.2 L1284.6 265.1 L1279.0 268.2 L1272.4 270.1 L1265.2 270.8 L1257.9 270.3 L1250.8 268.5 L1244.4 265.9 L1238.8 262.7 L1234.0 259.4 L1229.8 256.1 L1226.0 253.3 L1222.3 251.0 L1218.2 249.3 L1213.4 248.0 L1208.0 246.9 L1201.9 245.8 L1195.5 244.4 L1189.0 242.5 L1183.2 240.0 L1178.4 236.8 L1175.1 233.0 L1173.6 228.9 L1174.0 224.6 L1176.2 220.5 L1179.7 216.7 L1184.3 213.3 L1189.3 210.3 L1194.2 207.8 L1198.6 205.5 L1202.3 203.2 L1205.2 200.8 L1207.4 198.0 L1209.3 194.9 L1211.2 191.4 L1213.5 187.6 L1216.5 183.8 L1220.4 180.2 L1225.3 177.2 L1231.0 174.9 L1237.4 173.5 L1244.1 173.2 L1250.8 173.8 L1257.3 175.2 L1263.2 177.1 L1268.7 179.4 L1273.7 181.7 L1278.5 184.0 L1283.1 186.0 L1288.0 187.8 L1293.1 189.5 L1298.5 191.1 L1304.0 193.0 L1309.5 195.2 L1314.5 197.8 L1318.6 201.0 L1321.5 204.6 L1322.9 208.6 L1322.8 212.7 L1321.0 216.7 L1318.1 220.5"/><path d="M1332.5 220.5 L1327.8 224.7 L1322.7 228.3 L1317.7 231.6 L1313.3 234.5 L1310.0 237.5 L1307.6 240.7 L1306.2 244.4 L1305.3 248.7 L1304.5 253.6 L1303.2 259.0 L1300.8 264.5 L1297.1 269.9 L1291.8 274.7 L1285.0 278.4 L1277.0 280.8 L1268.3 281.6 L1259.4 280.9 L1250.8 278.8 L1243.0 275.6 L1236.2 271.8 L1230.3 267.7 L1225.3 263.8 L1220.7 260.3 L1216.1 257.6 L1211.2 255.5 L1205.4 253.9 L1198.8 252.6 L1191.4 251.3 L1183.6 249.6 L1175.8 247.2 L1168.7 244.1 L1162.9 240.3 L1158.9 235.7 L1157.1 230.7 L1157.6 225.5 L1160.2 220.5 L1164.5 215.8 L1170.0 211.7 L1176.1 208.1 L1182.0 205.1 L1187.4 202.2 L1191.8 199.5 L1195.4 196.5 L1198.1 193.2 L1200.4 189.4 L1202.7 185.1 L1205.5 180.5 L1209.1 175.9 L1213.9 171.6 L1219.8 167.9 L1226.8 165.1 L1234.5 163.5 L1242.7 163.1 L1250.8 163.8 L1258.7 165.4 L1265.9 167.8 L1272.5 170.6 L1278.6 173.4 L1284.4 176.1 L1290.1 178.6 L1295.9 180.8 L1302.1 182.8 L1308.7 184.8 L1315.4 187.1 L1322.0 189.8 L1328.1 193.0 L1333.1 196.8 L1336.7 201.2 L1338.4 206.0 L1338.2 211.0 L1336.1 215.9 L1332.5 220.5" stroke-dasharray="10 3"/><path d="M1346.9 220.5 L1341.4 225.4 L1335.4 229.7 L1329.5 233.5 L1324.4 237.0 L1320.4 240.5 L1317.6 244.3 L1316.0 248.6 L1315.0 253.7 L1314.0 259.5 L1312.4 265.8 L1309.7 272.3 L1305.3 278.6 L1299.0 284.2 L1291.0 288.6 L1281.6 291.4 L1271.4 292.4 L1260.9 291.6 L1250.8 289.1 L1241.6 285.4 L1233.6 280.8 L1226.7 276.0 L1220.8 271.4 L1215.4 267.4 L1210.0 264.1 L1204.1 261.6 L1197.4 259.8 L1189.6 258.3 L1180.9 256.7 L1171.7 254.7 L1162.6 251.9 L1154.2 248.3 L1147.3 243.7 L1142.6 238.4 L1140.5 232.5 L1141.1 226.4 L1144.2 220.5 L1149.3 215.0 L1155.8 210.2 L1162.9 206.0 L1169.9 202.3 L1176.2 199.0 L1181.4 195.8 L1185.6 192.3 L1188.8 188.4 L1191.5 183.9 L1194.2 178.9 L1197.5 173.5 L1201.7 168.1 L1207.3 163.0 L1214.3 158.6 L1222.5 155.4 L1231.7 153.4 L1241.3 152.9 L1250.8 153.8 L1260.0 155.7 L1268.6 158.5 L1276.4 161.8 L1283.5 165.1 L1290.3 168.3 L1297.0 171.2 L1303.9 173.8 L1311.2 176.2 L1318.9 178.5 L1326.8 181.2 L1334.6 184.3 L1341.7 188.1 L1347.7 192.7 L1351.8 197.8 L1353.8 203.5 L1353.6 209.3 L1351.1 215.1 L1346.9 220.5"/><path d="M1361.3 220.5 L1355.0 226.1 L1348.0 231.1 L1341.3 235.5 L1335.4 239.5 L1330.8 243.5 L1327.7 247.9 L1325.7 252.9 L1324.6 258.7 L1323.5 265.3 L1321.7 272.6 L1318.5 280.1 L1313.4 287.4 L1306.2 293.8 L1297.1 298.8 L1286.3 302.0 L1274.5 303.2 L1262.4 302.2 L1250.8 299.4 L1240.3 295.1 L1231.0 289.9 L1223.1 284.4 L1216.3 279.1 L1210.1 274.4 L1203.9 270.7 L1197.1 267.8 L1189.4 265.7 L1180.4 263.9 L1170.5 262.1 L1159.8 259.8 L1149.3 256.7 L1139.7 252.5 L1131.8 247.2 L1126.4 241.1 L1124.0 234.3 L1124.6 227.3 L1128.2 220.5 L1134.0 214.2 L1141.5 208.6 L1149.7 203.8 L1157.7 199.6 L1165.0 195.8 L1171.0 192.1 L1175.8 188.1 L1179.5 183.6 L1182.6 178.4 L1185.7 172.6 L1189.5 166.4 L1194.4 160.2 L1200.8 154.3 L1208.8 149.3 L1218.3 145.6 L1228.8 143.4 L1239.8 142.8 L1250.8 143.7 L1261.4 146.0 L1271.2 149.2 L1280.2 153.0 L1288.4 156.8 L1296.2 160.5 L1303.9 163.8 L1311.8 166.8 L1320.2 169.5 L1329.1 172.2 L1338.2 175.3 L1347.2 178.9 L1355.4 183.3 L1362.2 188.5 L1367.0 194.4 L1369.3 200.9 L1369.0 207.7 L1366.2 214.3 L1361.3 220.5"/><path d="M1383.1 180.8 L1383.3 181.4 L1383.2 182.1 L1382.9 182.7 L1382.4 183.2 L1381.8 183.7 L1381.1 184.1 L1380.5 184.5 L1379.8 184.8 L1379.1 185.1 L1378.5 185.4 L1377.9 185.6 L1377.3 185.9 L1376.7 186.2 L1376.1 186.4 L1375.4 186.6 L1374.7 186.7 L1374.0 186.7 L1373.3 186.6 L1372.7 186.4 L1372.1 186.2 L1371.5 185.9 L1371.0 185.5 L1370.6 185.2 L1370.2 184.9 L1369.7 184.6 L1369.3 184.4 L1368.7 184.2 L1368.1 184.0 L1367.5 183.9 L1366.7 183.6 L1366.0 183.3 L1365.3 183.0 L1364.7 182.5 L1364.2 182.0 L1363.9 181.4 L1363.8 180.8 L1363.9 180.1 L1364.2 179.5 L1364.6 179.0 L1365.2 178.5 L1365.8 178.1 L1366.4 177.7 L1366.9 177.4 L1367.4 177.0 L1367.9 176.7 L1368.3 176.3 L1368.8 175.9 L1369.3 175.4 L1369.8 175.0 L1370.4 174.6 L1371.0 174.3 L1371.8 174.1 L1372.6 174.1 L1373.3 174.2 L1374.1 174.4 L1374.7 174.8 L1375.3 175.3 L1375.7 175.8 L1376.1 176.3 L1376.4 176.8 L1376.7 177.2 L1377.0 177.5 L1377.3 177.8 L1377.8 177.9 L1378.4 178.1 L1379.1 178.2 L1379.9 178.5 L1380.7 178.7 L1381.5 179.1 L1382.2 179.6 L1382.8 180.1 L1383.1 180.8"/><path d="M1397.8 180.8 L1398.1 182.4 L1397.9 184.0 L1397.2 185.6 L1396.0 187.0 L1394.5 188.2 L1392.9 189.2 L1391.1 190.1 L1389.4 190.9 L1387.8 191.6 L1386.2 192.3 L1384.7 193.0 L1383.2 193.7 L1381.7 194.3 L1380.2 194.8 L1378.5 195.3 L1376.8 195.5 L1375.1 195.6 L1373.3 195.3 L1371.7 194.9 L1370.2 194.3 L1368.8 193.5 L1367.6 192.7 L1366.5 191.8 L1365.4 191.1 L1364.3 190.4 L1363.2 189.9 L1361.8 189.4 L1360.3 189.0 L1358.6 188.5 L1356.8 187.9 L1355.0 187.2 L1353.2 186.3 L1351.6 185.1 L1350.4 183.8 L1349.7 182.3 L1349.5 180.8 L1349.7 179.2 L1350.5 177.7 L1351.6 176.4 L1352.9 175.2 L1354.4 174.1 L1355.9 173.2 L1357.3 172.3 L1358.6 171.5 L1359.8 170.6 L1360.9 169.6 L1362.0 168.5 L1363.1 167.5 L1364.4 166.4 L1365.9 165.5 L1367.6 164.7 L1369.5 164.2 L1371.4 164.1 L1373.3 164.4 L1375.2 165.0 L1376.8 165.9 L1378.2 167.1 L1379.3 168.4 L1380.2 169.6 L1381.0 170.8 L1381.6 171.8 L1382.4 172.6 L1383.3 173.2 L1384.5 173.7 L1386.0 174.1 L1387.8 174.5 L1389.8 175.0 L1391.8 175.7 L1393.8 176.6 L1395.6 177.8 L1396.9 179.2 L1397.8 180.8"/><path d="M1412.5 180.8 L1413.0 183.4 L1412.6 186.0 L1411.4 188.4 L1409.6 190.7 L1407.2 192.6 L1404.6 194.3 L1401.8 195.8 L1399.1 197.0 L1396.5 198.2 L1394.0 199.2 L1391.6 200.3 L1389.2 201.4 L1386.8 202.4 L1384.2 203.3 L1381.6 204.0 L1378.9 204.4 L1376.1 204.4 L1373.3 204.1 L1370.7 203.4 L1368.3 202.4 L1366.1 201.2 L1364.1 199.8 L1362.3 198.5 L1360.6 197.3 L1358.9 196.2 L1357.1 195.3 L1355.0 194.6 L1352.5 193.9 L1349.8 193.1 L1346.9 192.2 L1343.9 191.1 L1341.1 189.6 L1338.6 187.8 L1336.7 185.6 L1335.5 183.2 L1335.1 180.8 L1335.6 178.3 L1336.7 175.9 L1338.5 173.7 L1340.7 171.8 L1343.0 170.1 L1345.4 168.6 L1347.7 167.2 L1349.7 165.9 L1351.6 164.4 L1353.4 162.9 L1355.1 161.2 L1357.0 159.5 L1359.1 157.8 L1361.5 156.3 L1364.2 155.1 L1367.1 154.3 L1370.2 154.1 L1373.3 154.5 L1376.3 155.5 L1378.9 157.0 L1381.1 158.9 L1382.9 160.9 L1384.4 163.0 L1385.5 164.9 L1386.6 166.5 L1387.8 167.8 L1389.3 168.7 L1391.2 169.5 L1393.6 170.1 L1396.5 170.7 L1399.6 171.5 L1402.9 172.7 L1406.1 174.2 L1408.9 176.0 L1411.1 178.3 L1412.5 180.8"/><path d="M1427.2 180.8 L1427.9 184.3 L1427.4 187.9 L1425.7 191.3 L1423.2 194.4 L1419.9 197.1 L1416.3 199.4 L1412.5 201.4 L1408.7 203.1 L1405.1 204.7 L1401.7 206.2 L1398.4 207.7 L1395.1 209.1 L1391.8 210.5 L1388.3 211.7 L1384.7 212.7 L1381.0 213.2 L1377.1 213.3 L1373.3 212.9 L1369.7 211.9 L1366.4 210.5 L1363.3 208.8 L1360.6 207.0 L1358.2 205.2 L1355.9 203.5 L1353.5 202.0 L1351.0 200.8 L1348.1 199.8 L1344.7 198.8 L1341.0 197.8 L1337.0 196.5 L1332.9 194.9 L1329.0 192.9 L1325.6 190.4 L1323.0 187.4 L1321.3 184.2 L1320.8 180.8 L1321.4 177.3 L1323.0 174.1 L1325.4 171.1 L1328.4 168.5 L1331.7 166.1 L1334.9 164.1 L1338.0 162.2 L1340.9 160.3 L1343.5 158.3 L1345.9 156.2 L1348.3 153.9 L1350.9 151.5 L1353.8 149.2 L1357.0 147.1 L1360.7 145.4 L1364.8 144.4 L1369.1 144.1 L1373.3 144.7 L1377.4 146.1 L1381.0 148.1 L1384.1 150.7 L1386.5 153.5 L1388.5 156.3 L1390.1 158.9 L1391.6 161.1 L1393.3 162.9 L1395.3 164.2 L1397.9 165.2 L1401.2 166.1 L1405.1 166.9 L1409.5 168.1 L1414.0 169.6 L1418.4 171.7 L1422.2 174.3 L1425.3 177.3 L1427.2 180.8"/><path d="M1441.9 180.8 L1442.8 185.3 L1442.1 189.9 L1440.0 194.2 L1436.8 198.1 L1432.6 201.6 L1428.0 204.5 L1423.2 207.0 L1418.4 209.2 L1413.8 211.2 L1409.4 213.1 L1405.2 215.0 L1401.1 216.9 L1396.8 218.6 L1392.4 220.2 L1387.8 221.4 L1383.0 222.1 L1378.2 222.2 L1373.3 221.6 L1368.7 220.4 L1364.5 218.6 L1360.6 216.5 L1357.2 214.1 L1354.1 211.8 L1351.1 209.7 L1348.1 207.8 L1344.9 206.3 L1341.2 205.0 L1336.9 203.7 L1332.2 202.4 L1327.1 200.8 L1321.9 198.8 L1316.9 196.2 L1312.6 193.0 L1309.3 189.3 L1307.2 185.1 L1306.5 180.8 L1307.3 176.4 L1309.3 172.3 L1312.4 168.5 L1316.2 165.1 L1320.3 162.2 L1324.5 159.5 L1328.4 157.1 L1332.1 154.7 L1335.4 152.2 L1338.4 149.5 L1341.5 146.6 L1344.8 143.5 L1348.4 140.6 L1352.6 137.9 L1357.3 135.8 L1362.5 134.5 L1367.9 134.1 L1373.3 134.9 L1378.5 136.6 L1383.1 139.2 L1387.0 142.5 L1390.1 146.1 L1392.6 149.6 L1394.7 152.9 L1396.6 155.8 L1398.7 158.0 L1401.3 159.7 L1404.7 161.0 L1408.8 162.1 L1413.8 163.2 L1419.3 164.6 L1425.1 166.6 L1430.7 169.2 L1435.6 172.5 L1439.4 176.4 L1441.9 180.8"/><path d="M1456.6 180.8 L1457.7 186.3 L1456.9 191.8 L1454.3 197.1 L1450.3 201.8 L1445.3 206.0 L1439.7 209.6 L1433.9 212.6 L1428.1 215.3 L1422.5 217.7 L1417.2 220.0 L1412.0 222.3 L1407.0 224.6 L1401.9 226.8 L1396.5 228.7 L1390.9 230.1 L1385.1 231.0 L1379.2 231.1 L1373.3 230.4 L1367.7 228.9 L1362.6 226.7 L1357.9 224.1 L1353.7 221.3 L1350.0 218.5 L1346.4 215.9 L1342.7 213.6 L1338.8 211.7 L1334.3 210.1 L1329.1 208.7 L1323.4 207.1 L1317.2 205.2 L1310.8 202.7 L1304.8 199.5 L1299.6 195.6 L1295.5 191.1 L1293.0 186.0 L1292.2 180.8 L1293.1 175.5 L1295.6 170.4 L1299.3 165.8 L1303.9 161.8 L1308.9 158.2 L1314.0 155.0 L1318.8 152.0 L1323.2 149.1 L1327.2 146.1 L1331.0 142.8 L1334.7 139.2 L1338.6 135.6 L1343.1 132.0 L1348.2 128.7 L1353.9 126.2 L1360.2 124.6 L1366.8 124.1 L1373.3 125.0 L1379.6 127.1 L1385.2 130.3 L1389.9 134.3 L1393.7 138.6 L1396.8 143.0 L1399.3 147.0 L1401.6 150.4 L1404.1 153.2 L1407.3 155.2 L1411.4 156.8 L1416.4 158.1 L1422.5 159.4 L1429.2 161.2 L1436.2 163.5 L1442.9 166.7 L1448.9 170.7 L1453.6 175.5 L1456.6 180.8"/><path d="M1471.2 180.8 L1472.5 187.3 L1471.6 193.8 L1468.6 200.0 L1463.9 205.6 L1458.0 210.5 L1451.4 214.7 L1444.5 218.3 L1437.7 221.4 L1431.2 224.2 L1424.9 227.0 L1418.9 229.7 L1412.9 232.3 L1406.9 234.9 L1400.6 237.1 L1394.0 238.8 L1387.2 239.8 L1380.2 240.0 L1373.3 239.1 L1366.7 237.4 L1360.7 234.8 L1355.2 231.8 L1350.3 228.4 L1345.8 225.1 L1341.6 222.1 L1337.3 219.4 L1332.7 217.2 L1327.4 215.3 L1321.3 213.6 L1314.5 211.7 L1307.2 209.5 L1299.8 206.5 L1292.7 202.8 L1286.6 198.2 L1281.8 192.9 L1278.8 187.0 L1277.9 180.8 L1278.9 174.5 L1281.9 168.6 L1286.3 163.2 L1291.7 158.4 L1297.6 154.2 L1303.5 150.4 L1309.2 147.0 L1314.4 143.5 L1319.1 139.9 L1323.5 136.1 L1327.9 131.9 L1332.5 127.6 L1337.7 123.4 L1343.7 119.5 L1350.5 116.5 L1357.8 114.6 L1365.6 114.2 L1373.3 115.2 L1380.7 117.7 L1387.2 121.4 L1392.8 126.1 L1397.3 131.2 L1400.9 136.3 L1403.8 141.0 L1406.6 145.1 L1409.6 148.3 L1413.3 150.7 L1418.1 152.5 L1424.0 154.0 L1431.1 155.7 L1439.1 157.7 L1447.3 160.5 L1455.2 164.3 L1462.2 169.0 L1467.7 174.5 L1471.2 180.8"/><path d="M1485.9 180.8 L1487.4 188.3 L1486.3 195.7 L1482.9 202.8 L1477.5 209.3 L1470.7 214.9 L1463.1 219.8 L1455.2 223.9 L1447.4 227.5 L1439.8 230.8 L1432.6 233.9 L1425.7 237.0 L1418.9 240.1 L1411.9 243.0 L1404.7 245.6 L1397.1 247.5 L1389.3 248.7 L1381.3 248.8 L1373.3 247.9 L1365.8 245.9 L1358.8 243.0 L1352.4 239.4 L1346.8 235.6 L1341.7 231.8 L1336.9 228.3 L1331.9 225.2 L1326.6 222.7 L1320.5 220.5 L1313.5 218.5 L1305.7 216.4 L1297.3 213.8 L1288.8 210.4 L1280.6 206.1 L1273.5 200.9 L1268.1 194.7 L1264.6 187.9 L1263.5 180.8 L1264.8 173.6 L1268.1 166.8 L1273.2 160.6 L1279.4 155.0 L1286.2 150.2 L1293.1 145.9 L1299.6 141.9 L1305.5 138.0 L1310.9 133.8 L1316.0 129.4 L1321.0 124.6 L1326.4 119.6 L1332.4 114.7 L1339.3 110.4 L1347.0 106.9 L1355.5 104.7 L1364.4 104.2 L1373.3 105.4 L1381.8 108.2 L1389.3 112.5 L1395.7 117.9 L1400.9 123.7 L1405.0 129.6 L1408.4 135.1 L1411.5 139.7 L1415.0 143.4 L1419.3 146.2 L1424.8 148.3 L1431.7 150.0 L1439.8 151.9 L1448.9 154.2 L1458.4 157.5 L1467.5 161.8 L1475.6 167.2 L1481.9 173.6 L1485.9 180.8" stroke-dasharray="16 3"/><path d="M1500.6 180.8 L1502.3 189.2 L1501.1 197.7 L1497.2 205.7 L1491.1 213.0 L1483.5 219.4 L1474.9 224.8 L1465.9 229.5 L1457.0 233.6 L1448.5 237.3 L1440.4 240.9 L1432.5 244.4 L1424.8 247.8 L1417.0 251.1 L1408.8 254.0 L1400.2 256.3 L1391.3 257.6 L1382.3 257.7 L1373.3 256.6 L1364.8 254.4 L1356.8 251.1 L1349.7 247.1 L1343.3 242.7 L1337.6 238.4 L1332.1 234.5 L1326.5 231.0 L1320.5 228.1 L1313.6 225.7 L1305.7 223.4 L1296.9 221.0 L1287.4 218.1 L1277.8 214.3 L1268.6 209.4 L1260.5 203.5 L1254.3 196.5 L1250.5 188.8 L1249.2 180.8 L1250.6 172.7 L1254.4 165.0 L1260.1 157.9 L1267.2 151.7 L1274.8 146.2 L1282.6 141.3 L1289.9 136.8 L1296.7 132.4 L1302.8 127.7 L1308.5 122.7 L1314.2 117.3 L1320.3 111.6 L1327.1 106.1 L1334.8 101.2 L1343.6 97.2 L1353.2 94.8 L1363.3 94.2 L1373.3 95.5 L1382.9 98.8 L1391.4 103.6 L1398.7 109.7 L1404.5 116.3 L1409.2 123.0 L1413.0 129.1 L1416.5 134.4 L1420.4 138.5 L1425.3 141.7 L1431.5 144.1 L1439.3 146.0 L1448.5 148.1 L1458.8 150.8 L1469.5 154.4 L1479.8 159.3 L1488.9 165.4 L1496.0 172.7 L1500.6 180.8"/><path d="M1473.9 121.9 L1474.1 122.5 L1474.1 123.0 L1474.0 123.6 L1473.7 124.1 L1473.3 124.6 L1472.8 125.1 L1472.2 125.6 L1471.6 126.0 L1470.8 126.3 L1470.1 126.7 L1469.3 127.0 L1468.4 127.3 L1467.6 127.5 L1466.7 127.7 L1465.7 127.9 L1464.8 128.0 L1463.8 128.0 L1462.9 128.0 L1461.9 127.9 L1461.0 127.8 L1460.1 127.6 L1459.2 127.4 L1458.4 127.2 L1457.6 126.9 L1456.9 126.7 L1456.2 126.4 L1455.4 126.0 L1454.8 125.7 L1454.1 125.3 L1453.5 124.9 L1453.0 124.5 L1452.6 124.0 L1452.2 123.5 L1452.0 123.0 L1451.9 122.5 L1452.0 121.9 L1452.2 121.4 L1452.4 120.9 L1452.8 120.4 L1453.2 120.0 L1453.6 119.5 L1454.1 119.1 L1454.5 118.7 L1455.0 118.3 L1455.5 117.9 L1456.0 117.4 L1456.6 117.0 L1457.2 116.5 L1458.0 116.1 L1458.8 115.7 L1459.7 115.4 L1460.7 115.2 L1461.8 115.1 L1462.9 115.1 L1463.9 115.2 L1464.9 115.5 L1465.9 115.8 L1466.7 116.1 L1467.4 116.6 L1468.0 117.0 L1468.6 117.4 L1469.1 117.8 L1469.5 118.2 L1470.0 118.6 L1470.5 119.0 L1471.0 119.3 L1471.6 119.7 L1472.1 120.1 L1472.7 120.5 L1473.2 120.9 L1473.6 121.4 L1473.9 121.9" stroke-dasharray="11 6"/><path d="M1490.4 121.9 L1490.8 123.3 L1490.9 124.7 L1490.6 126.0 L1490.0 127.4 L1489.0 128.7 L1487.7 129.9 L1486.3 131.0 L1484.6 132.0 L1482.8 133.0 L1480.9 133.8 L1478.9 134.6 L1476.8 135.3 L1474.6 135.9 L1472.4 136.4 L1470.0 136.7 L1467.7 137.0 L1465.3 137.1 L1462.9 137.1 L1460.5 136.9 L1458.2 136.6 L1455.9 136.2 L1453.8 135.7 L1451.7 135.1 L1449.8 134.5 L1447.9 133.7 L1446.1 133.0 L1444.3 132.2 L1442.6 131.3 L1441.0 130.4 L1439.6 129.4 L1438.2 128.3 L1437.1 127.1 L1436.3 125.9 L1435.8 124.6 L1435.6 123.3 L1435.7 121.9 L1436.1 120.6 L1436.8 119.4 L1437.7 118.2 L1438.7 117.1 L1439.8 116.0 L1440.9 114.9 L1442.1 113.9 L1443.2 112.8 L1444.4 111.7 L1445.7 110.6 L1447.1 109.5 L1448.8 108.4 L1450.6 107.4 L1452.7 106.5 L1455.0 105.7 L1457.5 105.2 L1460.2 104.9 L1462.9 104.9 L1465.5 105.2 L1468.0 105.7 L1470.3 106.5 L1472.4 107.4 L1474.2 108.5 L1475.8 109.6 L1477.1 110.7 L1478.4 111.7 L1479.5 112.7 L1480.7 113.6 L1482.0 114.5 L1483.3 115.4 L1484.6 116.3 L1486.0 117.3 L1487.4 118.3 L1488.6 119.4 L1489.6 120.6 L1490.4 121.9" stroke-dasharray="25 6"/><path d="M1506.9 121.9 L1507.6 124.1 L1507.7 126.3 L1507.3 128.5 L1506.2 130.7 L1504.7 132.7 L1502.7 134.6 L1500.3 136.4 L1497.6 138.1 L1494.8 139.6 L1491.7 140.9 L1488.5 142.2 L1485.1 143.3 L1481.7 144.2 L1478.1 145.0 L1474.3 145.6 L1470.6 146.0 L1466.7 146.2 L1462.9 146.2 L1459.1 145.9 L1455.4 145.4 L1451.8 144.8 L1448.4 144.0 L1445.1 143.0 L1441.9 142.0 L1438.9 140.8 L1436.0 139.6 L1433.2 138.3 L1430.5 137.0 L1427.9 135.5 L1425.6 133.8 L1423.5 132.1 L1421.7 130.2 L1420.4 128.2 L1419.5 126.2 L1419.2 124.0 L1419.4 121.9 L1420.0 119.9 L1421.1 117.9 L1422.5 116.0 L1424.1 114.1 L1425.9 112.4 L1427.7 110.7 L1429.6 109.0 L1431.4 107.3 L1433.4 105.6 L1435.4 103.8 L1437.7 102.1 L1440.3 100.3 L1443.2 98.7 L1446.6 97.2 L1450.3 96.0 L1454.3 95.1 L1458.6 94.7 L1462.9 94.7 L1467.1 95.2 L1471.1 96.0 L1474.8 97.3 L1478.1 98.8 L1481.0 100.4 L1483.5 102.2 L1485.7 103.9 L1487.7 105.6 L1489.6 107.2 L1491.5 108.7 L1493.4 110.1 L1495.5 111.5 L1497.7 112.9 L1499.9 114.5 L1502.1 116.1 L1504.0 117.9 L1505.7 119.9 L1506.9 121.9"/><path d="M1523.4 121.9 L1524.4 124.9 L1524.6 127.9 L1523.9 131.0 L1522.5 133.9 L1520.3 136.8 L1517.6 139.4 L1514.3 141.9 L1510.7 144.1 L1506.7 146.2 L1502.5 148.1 L1498.1 149.8 L1493.5 151.3 L1488.7 152.6 L1483.8 153.7 L1478.7 154.5 L1473.4 155.1 L1468.1 155.3 L1462.9 155.3 L1457.6 154.9 L1452.6 154.3 L1447.6 153.4 L1442.9 152.2 L1438.4 150.9 L1434.1 149.5 L1429.9 147.9 L1425.9 146.3 L1422.1 144.5 L1418.4 142.6 L1414.8 140.5 L1411.6 138.3 L1408.7 135.9 L1406.3 133.3 L1404.4 130.6 L1403.3 127.7 L1402.8 124.8 L1403.1 121.9 L1404.0 119.1 L1405.5 116.3 L1407.4 113.7 L1409.6 111.2 L1412.0 108.8 L1414.5 106.5 L1417.1 104.2 L1419.6 101.9 L1422.3 99.5 L1425.1 97.1 L1428.3 94.6 L1431.8 92.2 L1435.9 89.9 L1440.5 87.9 L1445.6 86.3 L1451.1 85.1 L1456.9 84.5 L1462.9 84.5 L1468.7 85.1 L1474.2 86.3 L1479.3 88.0 L1483.8 90.1 L1487.8 92.3 L1491.2 94.7 L1494.3 97.1 L1497.0 99.4 L1499.6 101.6 L1502.2 103.7 L1504.9 105.7 L1507.7 107.6 L1510.8 109.6 L1513.8 111.7 L1516.8 113.9 L1519.5 116.4 L1521.8 119.1 L1523.4 121.9" stroke-dasharray="12 3"/><path d="M1540.0 121.9 L1541.2 125.7 L1541.4 129.6 L1540.6 133.4 L1538.7 137.2 L1536.0 140.8 L1532.5 144.2 L1528.4 147.3 L1523.7 150.2 L1518.7 152.8 L1513.3 155.2 L1507.7 157.4 L1501.9 159.3 L1495.8 161.0 L1489.5 162.3 L1483.0 163.4 L1476.3 164.1 L1469.6 164.4 L1462.9 164.4 L1456.2 163.9 L1449.7 163.1 L1443.5 161.9 L1437.5 160.5 L1431.7 158.8 L1426.2 157.0 L1421.0 155.0 L1415.9 152.9 L1410.9 150.6 L1406.2 148.2 L1401.7 145.6 L1397.6 142.8 L1393.9 139.7 L1390.8 136.4 L1388.5 132.9 L1387.0 129.3 L1386.4 125.6 L1386.8 121.9 L1387.9 118.3 L1389.8 114.8 L1392.3 111.5 L1395.1 108.3 L1398.2 105.2 L1401.4 102.3 L1404.6 99.4 L1407.9 96.4 L1411.2 93.4 L1414.9 90.3 L1418.8 87.2 L1423.4 84.1 L1428.5 81.2 L1434.4 78.6 L1440.9 76.5 L1447.9 75.0 L1455.3 74.3 L1462.9 74.3 L1470.3 75.1 L1477.3 76.6 L1483.8 78.8 L1489.6 81.4 L1494.6 84.3 L1499.0 87.3 L1502.8 90.4 L1506.3 93.3 L1509.6 96.1 L1512.9 98.7 L1516.3 101.2 L1520.0 103.7 L1523.8 106.2 L1527.7 108.9 L1531.5 111.8 L1534.9 114.9 L1537.8 118.3 L1540.0 121.9"/><path d="M1556.5 121.9 L1558.0 126.5 L1558.2 131.2 L1557.2 135.9 L1555.0 140.5 L1551.7 144.8 L1547.4 148.9 L1542.4 152.7 L1536.8 156.2 L1530.7 159.4 L1524.2 162.3 L1517.3 165.0 L1510.2 167.3 L1502.8 169.3 L1495.2 171.0 L1487.3 172.3 L1479.2 173.2 L1471.0 173.6 L1462.9 173.5 L1454.8 172.9 L1446.9 171.9 L1439.3 170.5 L1432.0 168.8 L1425.1 166.8 L1418.4 164.5 L1412.0 162.1 L1405.8 159.5 L1399.8 156.8 L1394.1 153.9 L1388.6 150.7 L1383.6 147.2 L1379.1 143.5 L1375.4 139.5 L1372.6 135.3 L1370.8 130.9 L1370.1 126.4 L1370.5 121.9 L1371.9 117.5 L1374.2 113.3 L1377.1 109.2 L1380.6 105.4 L1384.3 101.7 L1388.2 98.1 L1392.1 94.5 L1396.1 90.9 L1400.2 87.3 L1404.6 83.5 L1409.4 79.7 L1414.9 76.0 L1421.2 72.5 L1428.3 69.3 L1436.2 66.8 L1444.7 65.0 L1453.7 64.1 L1462.9 64.1 L1471.9 65.0 L1480.4 66.9 L1488.3 69.5 L1495.3 72.7 L1501.4 76.2 L1506.7 79.9 L1511.4 83.6 L1515.6 87.2 L1519.6 90.6 L1523.6 93.7 L1527.8 96.8 L1532.2 99.8 L1536.9 102.8 L1541.6 106.1 L1546.2 109.6 L1550.4 113.4 L1553.9 117.5 L1556.5 121.9" stroke-dasharray="11 4"/><path d="M1573.0 121.9 L1574.8 127.3 L1575.1 132.9 L1573.9 138.4 L1571.3 143.7 L1567.4 148.9 L1562.4 153.7 L1556.4 158.2 L1549.8 162.3 L1542.6 166.0 L1535.0 169.5 L1526.9 172.5 L1518.6 175.3 L1509.9 177.7 L1500.9 179.7 L1491.6 181.2 L1482.1 182.2 L1472.5 182.7 L1462.9 182.6 L1453.4 181.9 L1444.1 180.7 L1435.2 179.1 L1426.6 177.0 L1418.4 174.7 L1410.6 172.0 L1403.0 169.2 L1395.7 166.2 L1388.7 162.9 L1381.9 159.5 L1375.5 155.7 L1369.6 151.7 L1364.4 147.3 L1360.0 142.6 L1356.7 137.7 L1354.5 132.5 L1353.7 127.2 L1354.2 121.9 L1355.8 116.8 L1358.5 111.8 L1362.0 107.0 L1366.1 102.4 L1370.5 98.1 L1375.0 93.9 L1379.6 89.7 L1384.3 85.5 L1389.1 81.1 L1394.3 76.7 L1400.0 72.3 L1406.4 67.9 L1413.8 63.7 L1422.2 60.1 L1431.4 57.1 L1441.5 54.9 L1452.1 53.8 L1462.9 53.9 L1473.5 55.0 L1483.5 57.2 L1492.7 60.3 L1501.0 64.0 L1508.2 68.1 L1514.5 72.5 L1519.9 76.9 L1524.9 81.0 L1529.6 85.0 L1534.3 88.8 L1539.3 92.3 L1544.5 95.9 L1549.9 99.5 L1555.5 103.3 L1560.9 107.4 L1565.8 111.9 L1569.9 116.7 L1573.0 121.9" stroke-dasharray="13 4"/><path d="M1536.6 149.1 L1536.4 149.6 L1536.2 150.0 L1536.0 150.5 L1535.8 150.9 L1535.6 151.4 L1535.4 151.8 L1535.1 152.2 L1534.8 152.7 L1534.4 153.1 L1533.9 153.4 L1533.4 153.8 L1532.8 154.1 L1532.1 154.3 L1531.4 154.5 L1530.8 154.7 L1530.1 154.8 L1529.3 155.0 L1528.6 155.2 L1527.8 155.3 L1526.9 155.5 L1526.0 155.6 L1525.1 155.6 L1524.1 155.6 L1523.2 155.5 L1522.2 155.3 L1521.4 154.9 L1520.8 154.5 L1520.3 153.9 L1520.0 153.2 L1519.9 152.5 L1520.1 151.8 L1520.4 151.2 L1520.8 150.5 L1521.3 150.0 L1521.7 149.5 L1522.1 149.1 L1522.4 148.8 L1522.5 148.4 L1522.5 148.0 L1522.4 147.6 L1522.3 147.1 L1522.2 146.6 L1522.1 146.0 L1522.1 145.4 L1522.2 144.8 L1522.5 144.2 L1523.0 143.7 L1523.6 143.3 L1524.3 143.0 L1525.2 142.7 L1526.0 142.6 L1526.9 142.6 L1527.7 142.7 L1528.6 142.8 L1529.4 142.9 L1530.1 143.1 L1530.9 143.2 L1531.7 143.4 L1532.4 143.5 L1533.2 143.7 L1534.0 143.9 L1534.7 144.2 L1535.4 144.5 L1536.0 144.9 L1536.5 145.4 L1536.8 145.9 L1537.0 146.4 L1537.1 147.0 L1537.1 147.6 L1537.0 148.1 L1536.8 148.6 L1536.6 149.1"/><path d="M1548.7 149.1 L1548.2 150.3 L1547.7 151.4 L1547.2 152.5 L1546.7 153.6 L1546.2 154.7 L1545.6 155.8 L1544.9 156.9 L1544.1 158.0 L1543.1 159.0 L1541.9 159.9 L1540.5 160.7 L1539.0 161.4 L1537.4 162.0 L1535.7 162.5 L1534.0 163.0 L1532.3 163.4 L1530.5 163.8 L1528.6 164.2 L1526.6 164.6 L1524.5 165.0 L1522.2 165.2 L1519.9 165.4 L1517.4 165.4 L1515.0 165.1 L1512.7 164.5 L1510.7 163.6 L1509.0 162.4 L1507.8 161.0 L1507.1 159.3 L1507.0 157.6 L1507.3 155.9 L1508.1 154.2 L1509.1 152.7 L1510.3 151.3 L1511.4 150.2 L1512.4 149.1 L1513.1 148.2 L1513.4 147.3 L1513.5 146.4 L1513.2 145.3 L1512.9 144.2 L1512.5 142.8 L1512.3 141.4 L1512.3 139.8 L1512.7 138.3 L1513.4 136.8 L1514.6 135.6 L1516.1 134.5 L1518.0 133.7 L1520.0 133.2 L1522.2 132.9 L1524.4 132.9 L1526.5 133.0 L1528.6 133.3 L1530.6 133.6 L1532.5 134.0 L1534.4 134.3 L1536.3 134.7 L1538.2 135.1 L1540.1 135.5 L1542.0 136.1 L1543.9 136.7 L1545.6 137.6 L1547.1 138.6 L1548.3 139.7 L1549.2 141.0 L1549.8 142.4 L1550.0 143.8 L1550.0 145.2 L1549.7 146.6 L1549.3 147.9 L1548.7 149.1" stroke-dasharray="8 8"/><path d="M1560.8 149.1 L1560.0 151.0 L1559.1 152.8 L1558.3 154.6 L1557.6 156.3 L1556.8 158.1 L1555.8 159.8 L1554.7 161.6 L1553.4 163.3 L1551.8 164.9 L1549.9 166.4 L1547.7 167.7 L1545.3 168.8 L1542.7 169.8 L1540.0 170.6 L1537.3 171.3 L1534.5 171.9 L1531.6 172.6 L1528.6 173.2 L1525.4 173.8 L1522.0 174.4 L1518.4 174.9 L1514.6 175.2 L1510.7 175.1 L1506.9 174.7 L1503.2 173.7 L1500.0 172.3 L1497.3 170.4 L1495.4 168.1 L1494.3 165.5 L1494.0 162.7 L1494.6 159.9 L1495.8 157.2 L1497.5 154.8 L1499.3 152.6 L1501.1 150.8 L1502.7 149.1 L1503.8 147.7 L1504.3 146.2 L1504.4 144.7 L1504.0 143.1 L1503.5 141.2 L1502.9 139.0 L1502.5 136.7 L1502.5 134.3 L1503.1 131.8 L1504.3 129.5 L1506.2 127.4 L1508.7 125.7 L1511.6 124.4 L1514.9 123.6 L1518.4 123.2 L1521.8 123.2 L1525.3 123.4 L1528.6 123.8 L1531.8 124.3 L1534.9 124.9 L1537.9 125.5 L1540.9 126.0 L1544.0 126.6 L1547.1 127.3 L1550.1 128.2 L1553.1 129.3 L1555.8 130.6 L1558.2 132.3 L1560.1 134.1 L1561.6 136.2 L1562.5 138.4 L1562.8 140.6 L1562.8 142.9 L1562.3 145.1 L1561.7 147.2 L1560.8 149.1"/><path d="M1572.9 149.1 L1571.8 151.7 L1570.6 154.2 L1569.5 156.6 L1568.4 159.0 L1567.3 161.4 L1566.1 163.9 L1564.6 166.3 L1562.7 168.6 L1560.5 170.8 L1557.9 172.9 L1554.9 174.7 L1551.6 176.2 L1548.0 177.5 L1544.4 178.6 L1540.6 179.6 L1536.7 180.5 L1532.7 181.3 L1528.6 182.2 L1524.2 183.1 L1519.6 183.9 L1514.6 184.6 L1509.4 185.0 L1504.1 184.9 L1498.8 184.3 L1493.7 183.0 L1489.2 181.0 L1485.6 178.4 L1482.9 175.2 L1481.4 171.6 L1481.1 167.8 L1481.8 163.9 L1483.5 160.3 L1485.8 156.9 L1488.4 154.0 L1490.9 151.4 L1493.0 149.1 L1494.5 147.1 L1495.2 145.1 L1495.3 143.1 L1494.9 140.8 L1494.1 138.2 L1493.2 135.3 L1492.7 132.1 L1492.7 128.7 L1493.5 125.3 L1495.2 122.1 L1497.8 119.3 L1501.2 116.9 L1505.3 115.2 L1509.8 114.0 L1514.5 113.5 L1519.3 113.4 L1524.0 113.8 L1528.6 114.3 L1533.0 115.0 L1537.2 115.8 L1541.4 116.6 L1545.6 117.4 L1549.8 118.2 L1554.0 119.2 L1558.2 120.4 L1562.2 121.8 L1566.0 123.7 L1569.3 125.9 L1571.9 128.5 L1573.9 131.3 L1575.2 134.4 L1575.7 137.5 L1575.6 140.6 L1575.0 143.6 L1574.1 146.4 L1572.9 149.1"/><path d="M1585.0 149.1 L1583.5 152.4 L1582.1 155.5 L1580.7 158.6 L1579.3 161.7 L1577.9 164.8 L1576.3 167.9 L1574.4 170.9 L1572.0 173.9 L1569.2 176.7 L1565.8 179.3 L1562.0 181.6 L1557.8 183.6 L1553.3 185.2 L1548.7 186.6 L1543.8 187.9 L1538.9 189.0 L1533.9 190.1 L1528.6 191.3 L1523.0 192.4 L1517.1 193.4 L1510.8 194.3 L1504.2 194.7 L1497.4 194.6 L1490.6 193.8 L1484.2 192.2 L1478.5 189.7 L1473.8 186.4 L1470.4 182.3 L1468.5 177.7 L1468.1 172.9 L1469.1 168.0 L1471.2 163.3 L1474.2 159.0 L1477.4 155.3 L1480.6 152.0 L1483.3 149.1 L1485.2 146.5 L1486.1 144.0 L1486.3 141.4 L1485.7 138.5 L1484.6 135.2 L1483.6 131.5 L1482.9 127.4 L1483.0 123.1 L1484.0 118.8 L1486.1 114.7 L1489.4 111.1 L1493.8 108.1 L1498.9 105.9 L1504.7 104.4 L1510.7 103.7 L1516.8 103.7 L1522.8 104.1 L1528.6 104.8 L1534.2 105.8 L1539.6 106.7 L1544.9 107.7 L1550.2 108.7 L1555.6 109.7 L1561.0 111.0 L1566.3 112.5 L1571.4 114.4 L1576.2 116.8 L1580.3 119.6 L1583.8 122.9 L1586.3 126.5 L1587.9 130.3 L1588.6 134.3 L1588.4 138.2 L1587.7 142.0 L1586.5 145.7 L1585.0 149.1"/><path d="M1597.1 149.1 L1595.3 153.1 L1593.5 156.9 L1591.8 160.7 L1590.2 164.4 L1588.5 168.1 L1586.5 171.9 L1584.2 175.6 L1581.3 179.2 L1577.9 182.7 L1573.8 185.8 L1569.2 188.6 L1564.1 191.0 L1558.6 193.0 L1553.0 194.7 L1547.1 196.2 L1541.1 197.6 L1535.0 198.9 L1528.6 200.3 L1521.8 201.7 L1514.6 202.9 L1507.0 203.9 L1498.9 204.5 L1490.7 204.4 L1482.5 203.4 L1474.7 201.4 L1467.8 198.4 L1462.1 194.3 L1458.0 189.4 L1455.6 183.9 L1455.2 178.0 L1456.4 172.0 L1459.0 166.4 L1462.5 161.2 L1466.5 156.6 L1470.3 152.6 L1473.5 149.1 L1475.8 146.0 L1477.1 143.0 L1477.2 139.8 L1476.5 136.2 L1475.2 132.2 L1474.0 127.7 L1473.1 122.7 L1473.2 117.5 L1474.4 112.3 L1477.0 107.4 L1481.0 103.0 L1486.3 99.3 L1492.6 96.6 L1499.5 94.9 L1506.9 94.0 L1514.3 93.9 L1521.5 94.5 L1528.6 95.4 L1535.4 96.5 L1541.9 97.6 L1548.4 98.8 L1554.9 100.0 L1561.4 101.3 L1567.9 102.8 L1574.4 104.7 L1580.6 107.0 L1586.4 109.8 L1591.4 113.3 L1595.6 117.2 L1598.7 121.6 L1600.6 126.3 L1601.4 131.1 L1601.3 135.9 L1600.3 140.5 L1598.9 144.9 L1597.1 149.1" stroke-dasharray="22 3"/><path d="M1668.6 191.2 L1668.6 191.7 L1668.7 192.2 L1668.7 192.6 L1668.6 193.1 L1668.4 193.6 L1668.1 194.0 L1667.7 194.4 L1667.2 194.8 L1666.6 195.1 L1666.1 195.4 L1665.5 195.7 L1665.0 196.0 L1664.4 196.3 L1663.8 196.7 L1663.2 197.1 L1662.5 197.5 L1661.7 197.9 L1660.8 198.2 L1659.9 198.5 L1658.9 198.6 L1657.9 198.6 L1656.9 198.4 L1656.1 198.0 L1655.4 197.5 L1654.9 196.8 L1654.6 196.2 L1654.5 195.5 L1654.4 194.8 L1654.5 194.2 L1654.5 193.7 L1654.5 193.2 L1654.3 192.8 L1654.1 192.4 L1653.6 192.1 L1653.1 191.7 L1652.5 191.2 L1652.0 190.7 L1651.6 190.2 L1651.3 189.5 L1651.3 188.9 L1651.5 188.4 L1651.9 187.8 L1652.6 187.4 L1653.4 187.1 L1654.3 186.9 L1655.3 186.8 L1656.2 186.8 L1657.0 186.8 L1657.7 186.8 L1658.3 186.7 L1658.9 186.5 L1659.5 186.2 L1660.1 185.9 L1660.8 185.5 L1661.6 185.1 L1662.5 184.8 L1663.5 184.5 L1664.6 184.4 L1665.6 184.5 L1666.5 184.7 L1667.3 185.1 L1668.0 185.6 L1668.4 186.2 L1668.7 186.9 L1668.8 187.6 L1668.8 188.2 L1668.7 188.8 L1668.6 189.4 L1668.5 189.9 L1668.5 190.3 L1668.5 190.8 L1668.6 191.2"/><path d="M1680.2 191.2 L1680.4 192.4 L1680.5 193.5 L1680.5 194.7 L1680.2 195.9 L1679.7 197.1 L1678.9 198.2 L1677.9 199.2 L1676.7 200.1 L1675.4 200.9 L1674.0 201.6 L1672.6 202.4 L1671.2 203.1 L1669.8 204.0 L1668.3 204.9 L1666.7 205.9 L1665.0 206.9 L1663.0 207.9 L1660.8 208.7 L1658.4 209.4 L1655.9 209.7 L1653.4 209.6 L1651.1 209.0 L1649.0 208.1 L1647.3 206.8 L1646.0 205.2 L1645.3 203.5 L1644.9 201.8 L1644.9 200.1 L1645.0 198.6 L1645.1 197.3 L1645.0 196.1 L1644.6 195.2 L1643.9 194.3 L1642.8 193.3 L1641.5 192.4 L1640.1 191.2 L1638.7 190.0 L1637.6 188.5 L1637.0 187.0 L1636.9 185.5 L1637.5 184.0 L1638.6 182.7 L1640.3 181.7 L1642.3 181.0 L1644.6 180.5 L1646.9 180.3 L1649.1 180.2 L1651.2 180.1 L1653.0 180.1 L1654.6 179.8 L1656.0 179.4 L1657.5 178.7 L1659.1 177.8 L1660.8 176.9 L1662.8 175.9 L1665.1 175.0 L1667.6 174.4 L1670.2 174.2 L1672.7 174.3 L1675.1 174.9 L1677.1 175.8 L1678.7 177.1 L1679.8 178.7 L1680.4 180.3 L1680.7 182.0 L1680.7 183.6 L1680.5 185.2 L1680.2 186.6 L1680.0 187.8 L1680.0 189.0 L1680.0 190.1 L1680.2 191.2" stroke-dasharray="30 8"/><path d="M1691.8 191.2 L1692.1 193.1 L1692.3 194.9 L1692.3 196.8 L1691.9 198.7 L1691.1 200.6 L1689.8 202.3 L1688.2 203.9 L1686.2 205.4 L1684.1 206.7 L1681.9 207.9 L1679.6 209.1 L1677.4 210.3 L1675.1 211.6 L1672.8 213.1 L1670.3 214.7 L1667.5 216.3 L1664.3 217.9 L1660.8 219.2 L1657.0 220.2 L1653.0 220.7 L1649.0 220.5 L1645.2 219.7 L1641.9 218.2 L1639.1 216.1 L1637.2 213.6 L1635.9 210.9 L1635.4 208.1 L1635.3 205.4 L1635.5 203.0 L1635.6 200.9 L1635.5 199.1 L1634.9 197.5 L1633.7 196.1 L1632.0 194.6 L1629.9 193.0 L1627.6 191.2 L1625.5 189.2 L1623.7 186.9 L1622.7 184.5 L1622.6 182.0 L1623.4 179.7 L1625.3 177.6 L1628.0 176.0 L1631.3 174.8 L1634.9 174.0 L1638.6 173.7 L1642.1 173.5 L1645.4 173.5 L1648.2 173.3 L1650.8 173.0 L1653.1 172.2 L1655.5 171.2 L1658.0 169.8 L1660.8 168.3 L1664.1 166.7 L1667.7 165.3 L1671.7 164.4 L1675.8 163.9 L1679.9 164.2 L1683.6 165.1 L1686.8 166.6 L1689.4 168.7 L1691.2 171.1 L1692.2 173.8 L1692.6 176.5 L1692.6 179.1 L1692.2 181.5 L1691.8 183.8 L1691.5 185.8 L1691.4 187.7 L1691.5 189.5 L1691.8 191.2"/><path d="M1703.4 191.2 L1703.8 193.7 L1704.1 196.3 L1704.1 198.9 L1703.5 201.5 L1702.4 204.1 L1700.7 206.5 L1698.4 208.7 L1695.8 210.7 L1692.8 212.5 L1689.8 214.1 L1686.7 215.7 L1683.6 217.4 L1680.5 219.3 L1677.3 221.3 L1673.8 223.5 L1670.0 225.7 L1665.7 227.9 L1660.8 229.7 L1655.6 231.1 L1650.1 231.7 L1644.5 231.5 L1639.3 230.4 L1634.8 228.3 L1631.0 225.5 L1628.3 222.1 L1626.6 218.3 L1625.8 214.4 L1625.7 210.8 L1626.0 207.4 L1626.2 204.5 L1626.0 202.0 L1625.2 199.8 L1623.6 197.9 L1621.2 195.9 L1618.3 193.7 L1615.2 191.2 L1612.2 188.4 L1609.8 185.3 L1608.4 181.9 L1608.2 178.5 L1609.4 175.3 L1612.0 172.5 L1615.6 170.3 L1620.2 168.6 L1625.2 167.6 L1630.3 167.1 L1635.1 166.9 L1639.6 166.8 L1643.5 166.6 L1647.0 166.1 L1650.3 165.1 L1653.5 163.6 L1656.9 161.8 L1660.8 159.6 L1665.3 157.5 L1670.3 155.6 L1675.8 154.3 L1681.4 153.7 L1687.0 154.0 L1692.2 155.2 L1696.6 157.4 L1700.1 160.2 L1702.5 163.6 L1704.0 167.2 L1704.5 170.9 L1704.5 174.5 L1704.0 177.9 L1703.5 180.9 L1703.1 183.7 L1702.9 186.3 L1703.0 188.8 L1703.4 191.2"/><path d="M1715.0 191.2 L1715.5 194.4 L1715.9 197.7 L1715.8 201.0 L1715.2 204.4 L1713.7 207.6 L1711.6 210.7 L1708.7 213.5 L1705.3 216.0 L1701.6 218.3 L1697.7 220.4 L1693.7 222.4 L1689.8 224.6 L1685.9 226.9 L1681.8 229.5 L1677.4 232.2 L1672.5 235.1 L1667.0 237.9 L1660.8 240.2 L1654.1 242.0 L1647.1 242.8 L1640.1 242.5 L1633.5 241.0 L1627.6 238.4 L1622.9 234.8 L1619.4 230.5 L1617.3 225.7 L1616.3 220.8 L1616.2 216.1 L1616.5 211.8 L1616.7 208.1 L1616.5 204.9 L1615.5 202.2 L1613.4 199.7 L1610.5 197.1 L1606.8 194.4 L1602.8 191.2 L1599.0 187.7 L1595.9 183.7 L1594.1 179.4 L1593.9 175.1 L1595.4 171.0 L1598.6 167.4 L1603.3 164.5 L1609.1 162.4 L1615.4 161.1 L1621.9 160.5 L1628.1 160.3 L1633.8 160.2 L1638.8 159.9 L1643.3 159.2 L1647.4 158.0 L1651.5 156.1 L1655.9 153.7 L1660.8 151.0 L1666.5 148.3 L1672.9 145.9 L1679.8 144.2 L1687.1 143.5 L1694.1 143.8 L1700.7 145.4 L1706.3 148.1 L1710.8 151.8 L1713.9 156.0 L1715.7 160.7 L1716.5 165.4 L1716.4 170.0 L1715.8 174.2 L1715.1 178.1 L1714.6 181.7 L1714.4 185.0 L1714.5 188.1 L1715.0 191.2" stroke-dasharray="9 4"/><path d="M1726.6 191.2 L1727.2 195.1 L1727.7 199.1 L1727.6 203.1 L1726.8 207.2 L1725.1 211.1 L1722.4 214.8 L1718.9 218.2 L1714.8 221.3 L1710.3 224.0 L1705.5 226.6 L1700.8 229.1 L1696.0 231.7 L1691.3 234.5 L1686.3 237.7 L1680.9 241.0 L1675.0 244.5 L1668.3 247.9 L1660.8 250.7 L1652.7 252.8 L1644.2 253.8 L1635.7 253.5 L1627.6 251.7 L1620.5 248.5 L1614.8 244.2 L1610.6 238.9 L1607.9 233.0 L1606.8 227.1 L1606.6 221.4 L1607.0 216.3 L1607.3 211.7 L1607.0 207.9 L1605.8 204.5 L1603.3 201.5 L1599.7 198.4 L1595.2 195.1 L1590.3 191.2 L1585.7 186.9 L1582.0 182.0 L1579.8 176.8 L1579.6 171.6 L1581.4 166.7 L1585.3 162.3 L1591.0 158.8 L1598.0 156.3 L1605.7 154.7 L1613.6 153.9 L1621.1 153.6 L1628.0 153.5 L1634.1 153.2 L1639.5 152.4 L1644.5 150.9 L1649.5 148.6 L1654.8 145.7 L1660.8 142.4 L1667.7 139.1 L1675.5 136.2 L1683.9 134.1 L1692.7 133.2 L1701.3 133.7 L1709.2 135.6 L1716.1 138.9 L1721.5 143.3 L1725.3 148.5 L1727.5 154.1 L1728.4 159.9 L1728.3 165.4 L1727.6 170.6 L1726.7 175.3 L1726.1 179.6 L1725.9 183.6 L1726.1 187.5 L1726.6 191.2" stroke-dasharray="28 8"/><path d="M1738.2 191.2 L1739.0 195.8 L1739.5 200.4 L1739.4 205.2 L1738.5 210.0 L1736.4 214.6 L1733.3 219.0 L1729.2 223.0 L1724.3 226.6 L1719.0 229.8 L1713.4 232.8 L1707.8 235.8 L1702.3 238.8 L1696.6 242.2 L1690.8 245.8 L1684.5 249.8 L1677.5 253.9 L1669.6 257.8 L1660.8 261.2 L1651.3 263.7 L1641.2 264.9 L1631.2 264.5 L1621.8 262.4 L1613.4 258.7 L1606.6 253.5 L1601.7 247.3 L1598.6 240.4 L1597.2 233.4 L1597.0 226.7 L1597.5 220.7 L1597.8 215.4 L1597.5 210.8 L1596.0 206.9 L1593.1 203.3 L1588.9 199.7 L1583.6 195.7 L1577.9 191.2 L1572.5 186.1 L1568.1 180.4 L1565.5 174.3 L1565.2 168.2 L1567.4 162.3 L1572.0 157.2 L1578.7 153.1 L1586.9 150.1 L1596.0 148.2 L1605.2 147.3 L1614.1 147.0 L1622.2 146.8 L1629.4 146.5 L1635.7 145.5 L1641.6 143.7 L1647.5 141.1 L1653.8 137.6 L1660.8 133.8 L1668.9 129.9 L1678.0 126.5 L1688.0 124.0 L1698.3 123.0 L1708.4 123.5 L1717.8 125.8 L1725.9 129.7 L1732.2 134.8 L1736.7 140.9 L1739.3 147.6 L1740.3 154.3 L1740.2 160.9 L1739.3 167.0 L1738.4 172.5 L1737.6 177.6 L1737.3 182.3 L1737.6 186.8 L1738.2 191.2"/><path d="M1745.6 221.3 L1745.8 221.8 L1745.8 222.4 L1745.6 223.0 L1745.2 223.6 L1744.7 224.1 L1744.0 224.5 L1743.2 224.9 L1742.3 225.2 L1741.4 225.4 L1740.4 225.6 L1739.6 225.8 L1738.8 226.0 L1738.0 226.2 L1737.2 226.4 L1736.5 226.7 L1735.7 226.9 L1734.8 227.2 L1733.8 227.5 L1732.8 227.7 L1731.8 227.8 L1730.7 227.7 L1729.7 227.6 L1728.8 227.3 L1728.0 226.9 L1727.4 226.4 L1727.0 225.8 L1726.7 225.2 L1726.6 224.7 L1726.5 224.1 L1726.4 223.7 L1726.2 223.2 L1726.0 222.8 L1725.6 222.5 L1725.1 222.1 L1724.4 221.7 L1723.7 221.3 L1723.1 220.7 L1722.5 220.1 L1722.0 219.5 L1721.8 218.8 L1721.9 218.1 L1722.2 217.5 L1722.8 217.0 L1723.6 216.5 L1724.7 216.2 L1725.8 215.9 L1727.0 215.8 L1728.1 215.8 L1729.3 215.8 L1730.3 215.8 L1731.3 215.9 L1732.2 216.0 L1733.0 216.0 L1733.8 216.0 L1734.7 216.0 L1735.5 216.0 L1736.4 216.1 L1737.2 216.1 L1738.0 216.2 L1738.9 216.4 L1739.6 216.7 L1740.4 216.9 L1741.1 217.3 L1741.7 217.6 L1742.3 218.0 L1742.8 218.4 L1743.3 218.8 L1743.9 219.2 L1744.4 219.7 L1744.8 220.2 L1745.3 220.7 L1745.6 221.3" stroke-dasharray="22 4"/><path d="M1763.1 221.3 L1763.6 222.7 L1763.6 224.2 L1763.2 225.6 L1762.3 227.0 L1761.0 228.3 L1759.2 229.4 L1757.2 230.3 L1754.9 231.1 L1752.6 231.7 L1750.3 232.2 L1748.2 232.6 L1746.1 233.1 L1744.2 233.6 L1742.3 234.1 L1740.4 234.8 L1738.4 235.5 L1736.2 236.2 L1733.8 236.8 L1731.3 237.3 L1728.7 237.5 L1726.1 237.4 L1723.5 237.0 L1721.2 236.3 L1719.3 235.3 L1717.8 234.0 L1716.7 232.6 L1716.0 231.2 L1715.6 229.8 L1715.4 228.4 L1715.2 227.2 L1714.8 226.2 L1714.2 225.2 L1713.2 224.3 L1711.9 223.4 L1710.3 222.4 L1708.6 221.3 L1706.9 219.9 L1705.4 218.5 L1704.3 216.8 L1703.7 215.2 L1703.9 213.5 L1704.7 211.9 L1706.2 210.5 L1708.3 209.4 L1710.9 208.5 L1713.7 207.9 L1716.7 207.6 L1719.6 207.5 L1722.4 207.6 L1725.0 207.7 L1727.4 207.9 L1729.6 208.0 L1731.8 208.1 L1733.8 208.1 L1735.9 208.2 L1738.0 208.2 L1740.1 208.3 L1742.2 208.4 L1744.3 208.7 L1746.4 209.2 L1748.3 209.7 L1750.2 210.4 L1751.9 211.2 L1753.4 212.1 L1754.9 213.1 L1756.3 214.1 L1757.6 215.1 L1758.9 216.2 L1760.2 217.3 L1761.3 218.6 L1762.4 219.9 L1763.1 221.3" stroke-dasharray="22 3"/><path d="M1780.7 221.3 L1781.5 223.6 L1781.5 225.9 L1780.9 228.3 L1779.4 230.5 L1777.2 232.5 L1774.4 234.3 L1771.2 235.8 L1767.6 237.0 L1763.9 238.0 L1760.2 238.7 L1756.8 239.4 L1753.5 240.1 L1750.4 240.9 L1747.3 241.8 L1744.3 242.9 L1741.1 244.0 L1737.6 245.1 L1733.8 246.1 L1729.8 246.9 L1725.6 247.2 L1721.4 247.1 L1717.3 246.5 L1713.7 245.3 L1710.5 243.7 L1708.1 241.7 L1706.4 239.5 L1705.3 237.1 L1704.7 234.9 L1704.3 232.7 L1704.0 230.8 L1703.4 229.1 L1702.4 227.6 L1700.9 226.2 L1698.8 224.7 L1696.2 223.1 L1693.4 221.3 L1690.7 219.2 L1688.3 216.8 L1686.5 214.2 L1685.7 211.5 L1685.9 208.8 L1687.2 206.3 L1689.7 204.1 L1693.0 202.2 L1697.1 200.8 L1701.6 199.9 L1706.3 199.4 L1711.0 199.3 L1715.5 199.3 L1719.6 199.6 L1723.5 199.8 L1727.1 200.0 L1730.5 200.2 L1733.8 200.3 L1737.1 200.3 L1740.5 200.3 L1743.9 200.5 L1747.3 200.8 L1750.7 201.2 L1753.9 201.9 L1757.0 202.8 L1760.0 204.0 L1762.7 205.2 L1765.2 206.7 L1767.5 208.2 L1769.7 209.7 L1771.8 211.4 L1773.9 213.1 L1776.0 215.0 L1777.8 216.9 L1779.5 219.0 L1780.7 221.3" stroke-dasharray="18 7"/><path d="M1798.3 221.3 L1799.3 224.4 L1799.4 227.7 L1798.5 230.9 L1796.5 233.9 L1793.5 236.7 L1789.7 239.2 L1785.1 241.2 L1780.2 242.9 L1775.1 244.2 L1770.1 245.3 L1765.3 246.3 L1760.8 247.2 L1756.5 248.3 L1752.4 249.6 L1748.2 251.0 L1743.8 252.5 L1739.0 254.1 L1733.8 255.4 L1728.3 256.5 L1722.5 257.0 L1716.7 256.8 L1711.1 256.0 L1706.1 254.4 L1701.8 252.1 L1698.4 249.4 L1696.1 246.3 L1694.6 243.1 L1693.7 240.0 L1693.3 237.1 L1692.8 234.4 L1692.0 232.1 L1690.7 230.0 L1688.5 228.0 L1685.6 226.0 L1682.1 223.8 L1678.3 221.3 L1674.5 218.4 L1671.2 215.1 L1668.8 211.6 L1667.6 207.9 L1667.9 204.2 L1669.8 200.7 L1673.1 197.6 L1677.7 195.1 L1683.3 193.2 L1689.5 191.9 L1696.0 191.2 L1702.4 191.0 L1708.6 191.1 L1714.3 191.4 L1719.6 191.8 L1724.6 192.1 L1729.3 192.3 L1733.8 192.4 L1738.4 192.4 L1743.0 192.5 L1747.6 192.7 L1752.3 193.1 L1757.0 193.7 L1761.5 194.7 L1765.8 195.9 L1769.8 197.5 L1773.5 199.2 L1776.9 201.2 L1780.1 203.3 L1783.1 205.4 L1786.1 207.7 L1789.0 210.1 L1791.8 212.6 L1794.3 215.3 L1796.6 218.2 L1798.3 221.3" stroke-dasharray="9 5"/><path d="M1815.9 221.3 L1817.2 225.3 L1817.3 229.4 L1816.1 233.5 L1813.6 237.4 L1809.8 240.9 L1804.9 244.1 L1799.1 246.7 L1792.9 248.8 L1786.4 250.5 L1780.0 251.9 L1773.9 253.1 L1768.2 254.3 L1762.7 255.7 L1757.4 257.3 L1752.1 259.1 L1746.5 261.1 L1740.4 263.0 L1733.8 264.8 L1726.8 266.1 L1719.4 266.7 L1712.0 266.5 L1704.9 265.4 L1698.5 263.4 L1693.1 260.5 L1688.8 257.0 L1685.8 253.1 L1683.8 249.1 L1682.8 245.1 L1682.2 241.4 L1681.6 238.0 L1680.6 235.1 L1678.9 232.4 L1676.2 229.8 L1672.5 227.3 L1668.0 224.5 L1663.1 221.3 L1658.3 217.6 L1654.1 213.4 L1651.0 208.9 L1649.5 204.2 L1649.9 199.5 L1652.3 195.1 L1656.6 191.2 L1662.4 187.9 L1669.6 185.5 L1677.5 183.9 L1685.7 183.0 L1693.9 182.8 L1701.7 182.9 L1709.0 183.3 L1715.8 183.7 L1722.1 184.1 L1728.0 184.4 L1733.8 184.5 L1739.6 184.6 L1745.5 184.7 L1751.4 184.9 L1757.3 185.4 L1763.3 186.2 L1769.0 187.4 L1774.5 189.0 L1779.6 191.0 L1784.3 193.2 L1788.6 195.7 L1792.7 198.3 L1796.6 201.1 L1800.3 204.0 L1804.0 207.1 L1807.5 210.3 L1810.8 213.7 L1813.7 217.4 L1815.9 221.3" stroke-dasharray="13 3"/><path d="M1833.5 221.3 L1835.0 226.2 L1835.2 231.2 L1833.8 236.1 L1830.7 240.9 L1826.1 245.2 L1820.1 248.9 L1813.1 252.1 L1805.5 254.7 L1797.7 256.7 L1789.9 258.4 L1782.5 259.9 L1775.5 261.4 L1768.9 263.1 L1762.5 265.0 L1756.0 267.2 L1749.2 269.6 L1741.8 272.0 L1733.8 274.1 L1725.3 275.7 L1716.3 276.5 L1707.3 276.2 L1698.7 274.9 L1690.9 272.4 L1684.3 269.0 L1679.1 264.7 L1675.4 259.9 L1673.1 255.0 L1671.8 250.2 L1671.1 245.7 L1670.4 241.6 L1669.2 238.0 L1667.1 234.8 L1663.8 231.7 L1659.3 228.6 L1653.9 225.1 L1648.0 221.3 L1642.1 216.8 L1637.0 211.8 L1633.3 206.3 L1631.5 200.5 L1631.9 194.8 L1634.8 189.5 L1640.0 184.7 L1647.1 180.8 L1655.8 177.9 L1665.4 175.9 L1675.4 174.8 L1685.3 174.5 L1694.8 174.7 L1703.7 175.2 L1711.9 175.7 L1719.5 176.2 L1726.8 176.5 L1733.8 176.6 L1740.9 176.7 L1747.9 176.8 L1755.1 177.1 L1762.4 177.7 L1769.6 178.7 L1776.5 180.2 L1783.2 182.1 L1789.3 184.5 L1795.1 187.2 L1800.4 190.2 L1805.3 193.4 L1810.0 196.8 L1814.6 200.3 L1819.0 204.0 L1823.3 207.9 L1827.3 212.1 L1830.8 216.5 L1833.5 221.3" stroke-dasharray="10 6"/><path d="M1851.1 221.3 L1852.9 227.0 L1853.1 232.9 L1851.4 238.8 L1847.8 244.3 L1842.3 249.4 L1835.3 253.8 L1827.1 257.6 L1818.2 260.6 L1808.9 263.0 L1799.8 265.0 L1791.1 266.7 L1782.9 268.5 L1775.1 270.4 L1767.5 272.7 L1759.9 275.3 L1751.9 278.1 L1743.2 280.9 L1733.8 283.4 L1723.8 285.3 L1713.3 286.2 L1702.7 285.9 L1692.5 284.4 L1683.4 281.5 L1675.6 277.4 L1669.5 272.4 L1665.1 266.8 L1662.4 261.0 L1660.9 255.3 L1660.1 250.0 L1659.2 245.2 L1657.8 241.0 L1655.3 237.1 L1651.5 233.5 L1646.2 229.8 L1639.8 225.8 L1632.8 221.3 L1625.9 216.0 L1619.9 210.1 L1615.5 203.6 L1613.4 196.9 L1614.0 190.2 L1617.4 183.9 L1623.4 178.3 L1631.8 173.7 L1642.0 170.2 L1653.3 167.9 L1665.1 166.6 L1676.7 166.3 L1687.9 166.5 L1698.3 167.0 L1708.0 167.7 L1717.0 168.2 L1725.6 168.6 L1733.8 168.8 L1742.1 168.8 L1750.4 169.0 L1758.9 169.3 L1767.4 170.0 L1775.9 171.2 L1784.1 172.9 L1791.9 175.2 L1799.1 178.0 L1805.9 181.2 L1812.1 184.7 L1817.9 188.5 L1823.5 192.5 L1828.8 196.6 L1834.1 201.0 L1839.1 205.6 L1843.8 210.5 L1847.9 215.7 L1851.1 221.3" stroke-dasharray="28 4"/><path d="M1868.6 221.3 L1870.7 227.9 L1870.9 234.7 L1869.0 241.4 L1864.9 247.8 L1858.6 253.6 L1850.5 258.7 L1841.1 263.0 L1830.8 266.5 L1820.2 269.3 L1809.7 271.5 L1799.7 273.5 L1790.3 275.6 L1781.3 277.8 L1772.6 280.4 L1763.8 283.4 L1754.6 286.6 L1744.6 289.9 L1733.8 292.7 L1722.3 294.9 L1710.2 295.9 L1698.0 295.6 L1686.3 293.8 L1675.8 290.5 L1666.8 285.8 L1659.8 280.0 L1654.8 273.6 L1651.7 266.9 L1650.0 260.4 L1649.0 254.3 L1648.1 248.8 L1646.4 243.9 L1643.5 239.5 L1639.1 235.4 L1633.0 231.1 L1625.7 226.5 L1617.6 221.3 L1609.7 215.2 L1602.8 208.4 L1597.7 201.0 L1595.3 193.2 L1596.0 185.5 L1599.9 178.3 L1606.9 171.8 L1616.5 166.5 L1628.2 162.5 L1641.2 159.9 L1654.7 158.4 L1668.2 158.0 L1681.0 158.3 L1693.0 158.9 L1704.1 159.6 L1714.5 160.3 L1724.3 160.7 L1733.8 160.9 L1743.3 161.0 L1752.9 161.1 L1762.6 161.5 L1772.4 162.3 L1782.2 163.7 L1791.6 165.7 L1800.6 168.3 L1808.9 171.5 L1816.7 175.2 L1823.9 179.3 L1830.6 183.6 L1836.9 188.2 L1843.1 192.9 L1849.1 197.9 L1854.9 203.2 L1860.3 208.9 L1865.0 214.9 L1868.6 221.3" stroke-dasharray="8 3"/><path d="M1886.2 221.3 L1888.6 228.8 L1888.8 236.4 L1886.6 244.0 L1882.0 251.2 L1874.9 257.8 L1865.8 263.6 L1855.1 268.4 L1843.4 272.4 L1831.5 275.5 L1819.6 278.1 L1808.3 280.4 L1797.6 282.7 L1787.5 285.2 L1777.6 288.2 L1767.7 291.5 L1757.3 295.2 L1746.1 298.8 L1733.8 302.0 L1720.8 304.5 L1707.1 305.7 L1693.3 305.3 L1680.1 303.3 L1668.2 299.5 L1658.1 294.2 L1650.2 287.7 L1644.5 280.4 L1641.0 272.9 L1639.0 265.5 L1637.9 258.6 L1636.9 252.4 L1635.0 246.9 L1631.8 241.9 L1626.7 237.2 L1619.9 232.4 L1611.6 227.2 L1602.5 221.3 L1593.5 214.4 L1585.7 206.7 L1580.0 198.3 L1577.2 189.6 L1578.0 180.9 L1582.4 172.6 L1590.3 165.4 L1601.2 159.4 L1614.5 154.9 L1629.1 151.9 L1644.4 150.3 L1659.6 149.7 L1674.1 150.0 L1687.7 150.8 L1700.3 151.6 L1712.0 152.3 L1723.1 152.8 L1733.8 153.0 L1744.6 153.1 L1755.4 153.3 L1766.4 153.7 L1777.5 154.6 L1788.5 156.2 L1799.1 158.4 L1809.3 161.4 L1818.7 165.0 L1827.5 169.2 L1835.6 173.8 L1843.2 178.7 L1850.4 183.9 L1857.3 189.2 L1864.1 194.9 L1870.7 200.9 L1876.8 207.2 L1882.1 214.0 L1886.2 221.3" stroke-dasharray="10 4"/><path d="M1903.8 221.3 L1906.4 229.7 L1906.7 238.2 L1904.3 246.6 L1899.0 254.7 L1891.2 262.0 L1881.0 268.5 L1869.1 273.9 L1856.1 278.3 L1842.7 281.8 L1829.5 284.6 L1816.9 287.2 L1805.0 289.7 L1793.7 292.6 L1782.7 295.9 L1771.6 299.6 L1760.0 303.7 L1747.5 307.7 L1733.8 311.4 L1719.2 314.1 L1704.0 315.4 L1688.6 315.0 L1673.9 312.8 L1660.6 308.5 L1649.3 302.6 L1640.5 295.4 L1634.2 287.3 L1630.3 278.8 L1628.1 270.6 L1626.9 262.9 L1625.7 256.0 L1623.6 249.8 L1620.0 244.3 L1614.4 239.1 L1606.7 233.7 L1597.5 227.9 L1587.3 221.3 L1577.3 213.6 L1568.6 205.1 L1562.2 195.7 L1559.2 185.9 L1560.0 176.2 L1564.9 167.0 L1573.8 158.9 L1585.9 152.3 L1600.7 147.2 L1617.1 143.9 L1634.1 142.1 L1651.0 141.5 L1667.2 141.8 L1682.4 142.6 L1696.4 143.5 L1709.5 144.3 L1721.8 144.9 L1733.8 145.1 L1745.8 145.3 L1757.9 145.4 L1770.2 145.9 L1782.5 146.9 L1794.8 148.6 L1806.6 151.2 L1818.0 154.5 L1828.5 158.5 L1838.3 163.2 L1847.3 168.3 L1855.8 173.8 L1863.8 179.5 L1871.6 185.5 L1879.2 191.8 L1886.5 198.5 L1893.3 205.6 L1899.2 213.2 L1903.8 221.3"/><path d="M1921.4 221.3 L1924.3 230.5 L1924.6 240.0 L1921.9 249.3 L1916.1 258.1 L1907.4 266.3 L1896.2 273.4 L1883.1 279.3 L1868.7 284.2 L1854.0 288.0 L1839.4 291.2 L1825.5 294.0 L1812.3 296.8 L1799.9 300.0 L1787.8 303.6 L1775.5 307.7 L1762.7 312.2 L1748.9 316.7 L1733.8 320.7 L1717.7 323.7 L1700.9 325.2 L1684.0 324.7 L1667.7 322.2 L1653.1 317.6 L1640.6 311.0 L1630.8 303.0 L1623.9 294.1 L1619.6 284.8 L1617.1 275.7 L1615.8 267.2 L1614.5 259.6 L1612.2 252.8 L1608.2 246.7 L1602.0 240.9 L1593.6 235.0 L1583.4 228.6 L1572.2 221.3 L1561.1 212.9 L1551.5 203.4 L1544.5 193.0 L1541.1 182.3 L1542.0 171.5 L1547.5 161.4 L1557.2 152.5 L1570.6 145.1 L1586.9 139.6 L1605.0 135.9 L1623.8 133.9 L1642.4 133.2 L1660.3 133.6 L1677.0 134.5 L1692.5 135.5 L1706.9 136.4 L1720.6 137.0 L1733.8 137.3 L1747.0 137.4 L1760.4 137.6 L1773.9 138.1 L1787.5 139.2 L1801.1 141.1 L1814.2 143.9 L1826.7 147.6 L1838.3 152.0 L1849.1 157.2 L1859.1 162.8 L1868.4 168.9 L1877.3 175.2 L1885.8 181.9 L1894.2 188.8 L1902.3 196.2 L1909.8 204.0 L1916.4 212.4 L1921.4 221.3" stroke-dasharray="8 5"/><path d="M1848.1 167.0 L1847.6 167.4 L1847.2 167.9 L1846.9 168.3 L1846.7 168.8 L1846.6 169.2 L1846.5 169.8 L1846.4 170.3 L1846.1 170.9 L1845.7 171.4 L1845.2 171.9 L1844.4 172.3 L1843.5 172.7 L1842.5 172.9 L1841.4 173.0 L1840.3 173.0 L1839.2 172.9 L1838.2 172.7 L1837.2 172.5 L1836.3 172.4 L1835.4 172.2 L1834.5 172.1 L1833.7 172.0 L1832.8 171.9 L1831.8 171.8 L1830.8 171.7 L1829.9 171.5 L1829.0 171.2 L1828.1 170.9 L1827.4 170.5 L1826.9 170.1 L1826.5 169.6 L1826.2 169.0 L1826.0 168.5 L1826.0 168.0 L1825.9 167.5 L1825.9 167.0 L1825.8 166.4 L1825.8 165.9 L1825.7 165.3 L1825.7 164.8 L1825.7 164.2 L1825.9 163.6 L1826.3 163.0 L1826.9 162.5 L1827.7 162.0 L1828.7 161.7 L1829.9 161.5 L1831.1 161.4 L1832.3 161.5 L1833.5 161.7 L1834.6 161.9 L1835.6 162.2 L1836.4 162.4 L1837.2 162.5 L1837.9 162.6 L1838.7 162.6 L1839.5 162.5 L1840.4 162.3 L1841.5 162.1 L1842.8 161.9 L1844.1 161.8 L1845.5 161.8 L1846.7 162.0 L1847.9 162.3 L1848.8 162.7 L1849.5 163.3 L1849.8 163.9 L1849.8 164.6 L1849.6 165.2 L1849.2 165.9 L1848.6 166.4 L1848.1 167.0"/><path d="M1864.4 167.0 L1863.1 168.1 L1862.1 169.2 L1861.4 170.3 L1860.9 171.5 L1860.6 172.7 L1860.4 174.0 L1860.1 175.3 L1859.5 176.7 L1858.5 178.1 L1857.1 179.4 L1855.2 180.4 L1853.0 181.2 L1850.4 181.8 L1847.7 182.0 L1844.9 182.0 L1842.2 181.7 L1839.6 181.4 L1837.2 180.9 L1834.9 180.5 L1832.7 180.1 L1830.6 179.8 L1828.4 179.6 L1826.1 179.4 L1823.7 179.1 L1821.3 178.8 L1818.9 178.3 L1816.7 177.7 L1814.6 176.9 L1812.8 175.9 L1811.4 174.7 L1810.4 173.5 L1809.7 172.2 L1809.3 170.9 L1809.1 169.5 L1809.0 168.2 L1808.9 167.0 L1808.8 165.7 L1808.6 164.3 L1808.4 162.9 L1808.4 161.5 L1808.5 160.0 L1809.0 158.5 L1810.0 157.0 L1811.5 155.7 L1813.5 154.6 L1816.0 153.8 L1818.9 153.3 L1821.9 153.2 L1825.0 153.3 L1828.0 153.8 L1830.7 154.3 L1833.1 155.0 L1835.3 155.5 L1837.2 155.9 L1839.0 156.1 L1840.9 156.0 L1843.0 155.7 L1845.3 155.3 L1848.1 154.8 L1851.2 154.3 L1854.5 154.1 L1857.8 154.1 L1861.1 154.5 L1864.0 155.2 L1866.3 156.3 L1867.9 157.7 L1868.7 159.3 L1868.8 161.0 L1868.2 162.6 L1867.2 164.2 L1865.8 165.6 L1864.4 167.0" stroke-dasharray="23 4"/><path d="M1880.8 167.0 L1878.7 168.9 L1877.1 170.6 L1875.9 172.4 L1875.1 174.2 L1874.7 176.1 L1874.4 178.2 L1873.8 180.4 L1872.9 182.6 L1871.3 184.8 L1869.1 186.8 L1866.1 188.5 L1862.5 189.8 L1858.3 190.6 L1854.0 191.0 L1849.5 191.0 L1845.2 190.6 L1841.1 190.0 L1837.2 189.3 L1833.6 188.7 L1830.1 188.0 L1826.6 187.6 L1823.1 187.2 L1819.5 186.8 L1815.7 186.4 L1811.8 185.9 L1808.0 185.1 L1804.3 184.1 L1801.0 182.8 L1798.2 181.2 L1796.0 179.4 L1794.3 177.4 L1793.2 175.3 L1792.6 173.2 L1792.3 171.1 L1792.1 169.0 L1791.9 167.0 L1791.7 164.9 L1791.4 162.7 L1791.2 160.5 L1791.1 158.2 L1791.3 155.8 L1792.2 153.4 L1793.7 151.1 L1796.1 149.0 L1799.3 147.2 L1803.3 145.9 L1807.9 145.1 L1812.8 144.9 L1817.7 145.1 L1822.5 145.8 L1826.8 146.8 L1830.7 147.8 L1834.1 148.7 L1837.2 149.3 L1840.1 149.6 L1843.1 149.5 L1846.4 149.0 L1850.2 148.3 L1854.6 147.5 L1859.5 146.8 L1864.8 146.4 L1870.2 146.4 L1875.4 147.0 L1880.0 148.2 L1883.7 150.0 L1886.3 152.2 L1887.6 154.7 L1887.7 157.4 L1886.8 160.0 L1885.1 162.5 L1883.0 164.9 L1880.8 167.0" stroke-dasharray="27 8"/><path d="M1897.1 167.0 L1894.3 169.6 L1892.0 172.0 L1890.4 174.4 L1889.4 176.9 L1888.8 179.5 L1888.3 182.4 L1887.6 185.4 L1886.3 188.5 L1884.2 191.5 L1881.0 194.2 L1876.9 196.6 L1871.9 198.4 L1866.3 199.5 L1860.3 200.0 L1854.1 200.0 L1848.2 199.5 L1842.5 198.7 L1837.2 197.7 L1832.2 196.8 L1827.4 196.0 L1822.6 195.3 L1817.8 194.7 L1812.8 194.2 L1807.6 193.7 L1802.3 193.0 L1797.0 191.9 L1792.0 190.5 L1787.5 188.7 L1783.6 186.5 L1780.5 184.0 L1778.2 181.3 L1776.7 178.4 L1775.9 175.5 L1775.4 172.6 L1775.2 169.8 L1775.0 167.0 L1774.7 164.1 L1774.3 161.2 L1773.9 158.1 L1773.8 154.9 L1774.1 151.6 L1775.3 148.3 L1777.4 145.1 L1780.7 142.2 L1785.1 139.8 L1790.6 138.0 L1796.9 136.9 L1803.6 136.6 L1810.4 137.0 L1816.9 137.9 L1822.9 139.2 L1828.3 140.6 L1833.0 141.8 L1837.2 142.7 L1841.2 143.1 L1845.3 142.9 L1849.9 142.3 L1855.1 141.3 L1861.1 140.2 L1867.9 139.2 L1875.2 138.6 L1882.6 138.7 L1889.7 139.5 L1896.1 141.2 L1901.2 143.6 L1904.7 146.6 L1906.5 150.1 L1906.7 153.7 L1905.5 157.4 L1903.1 160.9 L1900.2 164.1 L1897.1 167.0" stroke-dasharray="30 7"/><path d="M1913.5 167.0 L1909.9 170.3 L1907.0 173.4 L1904.9 176.4 L1903.6 179.6 L1902.9 182.9 L1902.3 186.6 L1901.3 190.4 L1899.7 194.3 L1897.0 198.2 L1893.0 201.7 L1887.8 204.6 L1881.4 206.9 L1874.2 208.4 L1866.5 209.1 L1858.8 209.0 L1851.2 208.3 L1844.0 207.3 L1837.2 206.1 L1830.8 204.9 L1824.7 203.9 L1818.7 203.0 L1812.5 202.3 L1806.2 201.7 L1799.6 201.0 L1792.8 200.0 L1786.1 198.7 L1779.7 197.0 L1773.9 194.7 L1769.0 191.9 L1765.0 188.7 L1762.2 185.2 L1760.3 181.6 L1759.2 177.9 L1758.6 174.2 L1758.3 170.6 L1758.0 167.0 L1757.6 163.3 L1757.1 159.6 L1756.7 155.7 L1756.5 151.6 L1756.9 147.4 L1758.4 143.2 L1761.1 139.1 L1765.3 135.5 L1770.9 132.4 L1777.9 130.1 L1785.9 128.7 L1794.4 128.3 L1803.1 128.8 L1811.4 130.0 L1819.1 131.6 L1825.9 133.4 L1831.8 135.0 L1837.2 136.1 L1842.3 136.6 L1847.5 136.4 L1853.3 135.5 L1860.0 134.3 L1867.7 132.8 L1876.3 131.6 L1885.6 130.9 L1895.0 131.0 L1904.1 132.0 L1912.1 134.1 L1918.6 137.2 L1923.1 141.1 L1925.4 145.5 L1925.7 150.1 L1924.1 154.8 L1921.1 159.2 L1917.4 163.3 L1913.5 167.0"/><path d="M1929.8 167.0 L1925.4 171.0 L1921.9 174.8 L1919.4 178.5 L1917.8 182.3 L1916.9 186.4 L1916.2 190.8 L1915.1 195.4 L1913.1 200.2 L1909.8 204.8 L1905.0 209.1 L1898.6 212.7 L1890.9 215.5 L1882.1 217.3 L1872.8 218.1 L1863.4 218.0 L1854.2 217.2 L1845.4 216.0 L1837.2 214.5 L1829.5 213.1 L1822.0 211.8 L1814.7 210.7 L1807.3 209.9 L1799.5 209.1 L1791.5 208.3 L1783.3 207.1 L1775.1 205.6 L1767.4 203.4 L1760.3 200.6 L1754.3 197.2 L1749.6 193.4 L1746.1 189.1 L1743.8 184.7 L1742.4 180.2 L1741.8 175.7 L1741.4 171.3 L1741.0 167.0 L1740.6 162.5 L1740.0 158.0 L1739.4 153.3 L1739.2 148.3 L1739.7 143.2 L1741.5 138.1 L1744.8 133.2 L1749.9 128.7 L1756.7 125.0 L1765.2 122.2 L1774.9 120.5 L1785.3 120.0 L1795.8 120.6 L1805.9 122.1 L1815.2 124.1 L1823.4 126.2 L1830.7 128.1 L1837.2 129.5 L1843.4 130.1 L1849.7 129.8 L1856.8 128.8 L1864.9 127.2 L1874.2 125.5 L1884.7 124.0 L1895.9 123.2 L1907.4 123.3 L1918.4 124.6 L1928.2 127.1 L1936.0 130.8 L1941.5 135.5 L1944.4 140.9 L1944.6 146.5 L1942.7 152.2 L1939.1 157.6 L1934.6 162.5 L1929.8 167.0"/><path d="M1946.1 167.0 L1941.0 171.7 L1936.9 176.1 L1933.9 180.5 L1932.1 185.0 L1931.0 189.8 L1930.1 195.0 L1928.8 200.4 L1926.5 206.1 L1922.6 211.5 L1916.9 216.5 L1909.4 220.8 L1900.3 224.0 L1890.1 226.1 L1879.1 227.1 L1868.0 227.0 L1857.2 226.1 L1846.9 224.6 L1837.2 222.9 L1828.1 221.2 L1819.4 219.7 L1810.7 218.5 L1802.0 217.5 L1792.9 216.6 L1783.4 215.6 L1773.8 214.2 L1764.2 212.4 L1755.1 209.8 L1746.8 206.6 L1739.7 202.6 L1734.1 198.0 L1730.0 193.0 L1727.3 187.8 L1725.7 182.5 L1724.9 177.3 L1724.5 172.1 L1724.1 167.0 L1723.5 161.8 L1722.8 156.4 L1722.1 150.9 L1721.9 145.1 L1722.6 139.1 L1724.6 133.0 L1728.5 127.2 L1734.5 122.0 L1742.5 117.6 L1752.5 114.3 L1763.9 112.3 L1776.1 111.8 L1788.5 112.4 L1800.4 114.1 L1811.3 116.5 L1821.0 119.0 L1829.5 121.3 L1837.2 122.9 L1844.5 123.5 L1852.0 123.2 L1860.2 122.0 L1869.8 120.2 L1880.7 118.2 L1893.0 116.5 L1906.3 115.5 L1919.8 115.6 L1932.8 117.1 L1944.2 120.1 L1953.5 124.5 L1959.9 130.0 L1963.3 136.3 L1963.6 142.9 L1961.3 149.6 L1957.1 155.9 L1951.7 161.7 L1946.1 167.0"/><path d="M1962.5 167.0 L1956.6 172.4 L1951.8 177.5 L1948.4 182.5 L1946.3 187.7 L1945.1 193.2 L1944.1 199.2 L1942.6 205.5 L1939.9 211.9 L1935.4 218.2 L1928.9 224.0 L1920.3 228.9 L1909.8 232.6 L1898.0 235.0 L1885.4 236.1 L1872.6 236.0 L1860.2 234.9 L1848.3 233.3 L1837.2 231.3 L1826.7 229.3 L1816.7 227.6 L1806.8 226.2 L1796.7 225.0 L1786.2 224.0 L1775.4 222.9 L1764.3 221.3 L1753.2 219.2 L1742.7 216.3 L1733.2 212.5 L1725.1 207.9 L1718.6 202.7 L1713.9 197.0 L1710.8 191.0 L1709.0 184.9 L1708.1 178.8 L1707.6 172.9 L1707.1 167.0 L1706.5 161.0 L1705.7 154.9 L1704.9 148.5 L1704.6 141.8 L1705.4 134.9 L1707.7 127.9 L1712.2 121.3 L1719.1 115.2 L1728.3 110.1 L1739.8 106.4 L1752.9 104.1 L1767.0 103.5 L1781.2 104.3 L1794.8 106.2 L1807.4 108.9 L1818.6 111.8 L1828.4 114.4 L1837.2 116.2 L1845.6 117.0 L1854.2 116.7 L1863.7 115.3 L1874.7 113.2 L1887.3 110.9 L1901.4 108.9 L1916.7 107.7 L1932.2 107.9 L1947.1 109.6 L1960.3 113.0 L1970.9 118.1 L1978.3 124.4 L1982.2 131.7 L1982.5 139.3 L1979.9 147.0 L1975.1 154.3 L1968.9 160.9 L1962.5 167.0" stroke-dasharray="24 7"/><path d="M1978.8 167.0 L1972.2 173.1 L1966.8 178.9 L1962.9 184.5 L1960.5 190.4 L1959.1 196.6 L1958.0 203.4 L1956.3 210.5 L1953.3 217.8 L1948.2 224.9 L1940.8 231.4 L1931.1 236.9 L1919.3 241.2 L1905.9 243.9 L1891.7 245.1 L1877.3 245.0 L1863.2 243.8 L1849.8 241.9 L1837.2 239.7 L1825.4 237.5 L1814.0 235.5 L1802.8 233.9 L1791.4 232.6 L1779.6 231.4 L1767.3 230.1 L1754.7 228.4 L1742.3 226.0 L1730.4 222.7 L1719.7 218.4 L1710.5 213.3 L1703.2 207.3 L1697.8 200.9 L1694.3 194.1 L1692.3 187.2 L1691.2 180.4 L1690.7 173.6 L1690.1 167.0 L1689.4 160.2 L1688.5 153.3 L1687.6 146.0 L1687.3 138.5 L1688.2 130.7 L1690.8 122.9 L1695.9 115.3 L1703.6 108.5 L1714.1 102.7 L1727.1 98.5 L1741.9 95.9 L1757.8 95.2 L1773.9 96.1 L1789.3 98.3 L1803.5 101.3 L1816.1 104.6 L1827.2 107.5 L1837.2 109.6 L1846.7 110.5 L1856.4 110.1 L1867.2 108.6 L1879.5 106.2 L1893.8 103.6 L1909.8 101.3 L1927.0 100.0 L1944.6 100.2 L1961.4 102.1 L1976.4 106.0 L1988.4 111.7 L1996.7 118.9 L2001.1 127.1 L2001.5 135.7 L1998.5 144.4 L1993.0 152.6 L1986.1 160.2 L1978.8 167.0"/><path d="M1995.2 167.0 L1987.7 173.8 L1981.7 180.3 L1977.4 186.6 L1974.8 193.1 L1973.2 200.1 L1972.0 207.6 L1970.1 215.5 L1966.6 223.7 L1961.0 231.6 L1952.8 238.9 L1941.9 245.0 L1928.8 249.7 L1913.9 252.8 L1898.0 254.2 L1881.9 254.0 L1866.2 252.7 L1851.2 250.5 L1837.2 248.1 L1824.0 245.6 L1811.4 243.4 L1798.9 241.6 L1786.1 240.2 L1772.9 238.9 L1759.2 237.4 L1745.2 235.5 L1731.3 232.8 L1718.1 229.1 L1706.1 224.4 L1695.8 218.6 L1687.7 212.0 L1681.8 204.8 L1677.8 197.2 L1675.6 189.6 L1674.4 181.9 L1673.7 174.4 L1673.2 167.0 L1672.4 159.4 L1671.3 151.7 L1670.4 143.6 L1670.0 135.2 L1671.0 126.5 L1673.9 117.8 L1679.6 109.4 L1688.2 101.7 L1699.9 95.3 L1714.4 90.6 L1730.9 87.7 L1748.6 86.9 L1766.6 87.9 L1783.8 90.4 L1799.6 93.8 L1813.7 97.4 L1826.1 100.7 L1837.2 103.0 L1847.7 104.0 L1858.6 103.6 L1870.6 101.8 L1884.4 99.2 L1900.3 96.3 L1918.2 93.7 L1937.4 92.3 L1957.0 92.4 L1975.8 94.6 L1992.4 99.0 L2005.8 105.3 L2015.2 113.3 L2020.0 122.5 L2020.5 132.1 L2017.2 141.8 L2011.0 151.0 L2003.3 159.4 L1995.2 167.0"/><path d="M1958.3 242.8 L1958.1 243.2 L1958.0 243.5 L1958.1 243.9 L1958.3 244.4 L1958.5 244.9 L1958.8 245.6 L1959.0 246.3 L1959.1 247.0 L1959.0 247.8 L1958.7 248.4 L1958.2 249.0 L1957.5 249.4 L1956.7 249.6 L1955.8 249.6 L1955.0 249.5 L1954.1 249.2 L1953.3 248.9 L1952.7 248.5 L1952.1 248.1 L1951.5 247.8 L1951.0 247.6 L1950.5 247.5 L1949.9 247.4 L1949.3 247.4 L1948.6 247.4 L1947.8 247.3 L1947.1 247.1 L1946.4 246.9 L1945.8 246.5 L1945.3 246.1 L1945.0 245.6 L1944.8 245.0 L1944.7 244.5 L1944.8 243.9 L1944.9 243.3 L1945.1 242.8 L1945.3 242.3 L1945.5 241.8 L1945.7 241.3 L1945.8 240.9 L1945.9 240.4 L1946.1 239.9 L1946.3 239.4 L1946.6 238.9 L1947.0 238.4 L1947.5 238.0 L1948.1 237.7 L1948.7 237.5 L1949.4 237.4 L1950.1 237.4 L1950.8 237.4 L1951.4 237.4 L1952.1 237.5 L1952.7 237.5 L1953.3 237.5 L1953.9 237.4 L1954.6 237.2 L1955.3 237.1 L1956.1 237.0 L1957.0 237.0 L1957.9 237.0 L1958.7 237.2 L1959.4 237.6 L1959.9 238.1 L1960.3 238.7 L1960.4 239.3 L1960.3 240.0 L1960.1 240.7 L1959.6 241.4 L1959.2 241.9 L1958.7 242.4 L1958.3 242.8" stroke-dasharray="19 3"/><path d="M1966.8 242.8 L1966.2 243.7 L1966.0 244.6 L1966.2 245.6 L1966.7 246.8 L1967.4 248.1 L1968.1 249.7 L1968.6 251.5 L1968.8 253.3 L1968.5 255.2 L1967.8 256.8 L1966.5 258.2 L1964.8 259.2 L1962.8 259.7 L1960.6 259.8 L1958.4 259.5 L1956.3 258.8 L1954.4 257.9 L1952.7 257.0 L1951.2 256.1 L1949.8 255.4 L1948.5 254.9 L1947.2 254.5 L1945.7 254.4 L1944.2 254.3 L1942.4 254.2 L1940.6 254.0 L1938.8 253.6 L1937.1 253.0 L1935.5 252.1 L1934.3 251.1 L1933.4 249.8 L1932.9 248.4 L1932.8 247.0 L1932.9 245.5 L1933.3 244.1 L1933.8 242.8 L1934.3 241.6 L1934.7 240.3 L1935.1 239.2 L1935.5 237.9 L1935.8 236.7 L1936.2 235.4 L1936.8 234.2 L1937.6 232.9 L1938.5 231.8 L1939.8 230.9 L1941.2 230.1 L1942.9 229.6 L1944.6 229.3 L1946.3 229.2 L1948.0 229.3 L1949.6 229.4 L1951.2 229.5 L1952.7 229.5 L1954.2 229.4 L1955.7 229.2 L1957.5 228.9 L1959.3 228.5 L1961.4 228.3 L1963.5 228.2 L1965.7 228.4 L1967.7 228.9 L1969.5 229.7 L1970.9 230.9 L1971.7 232.4 L1972.1 234.1 L1971.8 235.9 L1971.1 237.6 L1970.1 239.2 L1968.9 240.6 L1967.8 241.8 L1966.8 242.8"/><path d="M1975.4 242.8 L1974.4 244.3 L1974.0 245.7 L1974.3 247.3 L1975.1 249.2 L1976.2 251.3 L1977.3 253.9 L1978.1 256.7 L1978.5 259.7 L1978.1 262.6 L1976.9 265.2 L1974.8 267.4 L1972.1 269.0 L1968.9 269.9 L1965.4 270.0 L1961.8 269.4 L1958.5 268.4 L1955.4 267.0 L1952.7 265.5 L1950.3 264.1 L1948.1 263.0 L1946.0 262.1 L1943.9 261.6 L1941.6 261.3 L1939.1 261.1 L1936.3 261.0 L1933.4 260.7 L1930.5 260.1 L1927.7 259.1 L1925.2 257.7 L1923.3 256.0 L1921.9 254.0 L1921.1 251.8 L1920.9 249.4 L1921.1 247.1 L1921.7 244.9 L1922.5 242.8 L1923.2 240.8 L1924.0 238.9 L1924.6 237.0 L1925.2 235.0 L1925.7 233.0 L1926.4 231.0 L1927.3 229.0 L1928.5 227.0 L1930.1 225.2 L1932.1 223.7 L1934.4 222.5 L1937.0 221.7 L1939.7 221.2 L1942.5 221.1 L1945.2 221.2 L1947.8 221.4 L1950.3 221.5 L1952.7 221.6 L1955.1 221.4 L1957.6 221.0 L1960.3 220.5 L1963.3 220.0 L1966.6 219.6 L1970.0 219.4 L1973.5 219.7 L1976.7 220.5 L1979.6 221.9 L1981.8 223.8 L1983.2 226.2 L1983.7 228.9 L1983.3 231.7 L1982.2 234.4 L1980.6 237.0 L1978.7 239.2 L1976.9 241.2 L1975.4 242.8"/><path d="M1983.9 242.8 L1982.5 244.8 L1982.0 246.8 L1982.4 249.0 L1983.5 251.5 L1985.0 254.5 L1986.5 258.0 L1987.7 261.9 L1988.1 266.0 L1987.6 270.0 L1985.9 273.7 L1983.1 276.7 L1979.4 278.8 L1975.0 280.0 L1970.1 280.2 L1965.3 279.4 L1960.6 278.0 L1956.4 276.1 L1952.7 274.1 L1949.4 272.1 L1946.4 270.5 L1943.5 269.3 L1940.6 268.6 L1937.4 268.2 L1934.0 268.0 L1930.2 267.8 L1926.2 267.4 L1922.1 266.6 L1918.3 265.2 L1915.0 263.3 L1912.3 261.0 L1910.3 258.2 L1909.2 255.1 L1908.9 251.9 L1909.3 248.8 L1910.1 245.7 L1911.1 242.8 L1912.2 240.1 L1913.2 237.4 L1914.1 234.8 L1914.9 232.1 L1915.6 229.4 L1916.5 226.6 L1917.8 223.8 L1919.4 221.1 L1921.6 218.6 L1924.3 216.5 L1927.5 214.9 L1931.1 213.8 L1934.9 213.1 L1938.7 212.9 L1942.4 213.1 L1946.0 213.3 L1949.4 213.5 L1952.7 213.6 L1956.0 213.4 L1959.4 212.9 L1963.2 212.2 L1967.3 211.4 L1971.8 210.8 L1976.5 210.6 L1981.3 211.0 L1985.7 212.1 L1989.6 214.0 L1992.7 216.7 L1994.6 220.0 L1995.3 223.6 L1994.8 227.5 L1993.3 231.3 L1991.1 234.8 L1988.5 237.9 L1986.0 240.5 L1983.9 242.8" stroke-dasharray="8 8"/><path d="M1992.4 242.8 L1990.6 245.4 L1990.0 247.9 L1990.5 250.7 L1991.9 253.9 L1993.8 257.7 L1995.8 262.2 L1997.3 267.1 L1997.8 272.3 L1997.1 277.4 L1995.0 282.1 L1991.5 285.9 L1986.7 288.7 L1981.0 290.2 L1974.9 290.4 L1968.7 289.4 L1962.8 287.6 L1957.4 285.2 L1952.7 282.6 L1948.5 280.1 L1944.7 278.1 L1941.0 276.6 L1937.3 275.6 L1933.3 275.1 L1928.9 274.9 L1924.0 274.6 L1919.0 274.1 L1913.8 273.0 L1909.0 271.3 L1904.7 269.0 L1901.2 265.9 L1898.8 262.4 L1897.4 258.5 L1897.0 254.4 L1897.5 250.4 L1898.5 246.5 L1899.8 242.8 L1901.2 239.3 L1902.5 235.9 L1903.6 232.6 L1904.6 229.2 L1905.5 225.7 L1906.7 222.2 L1908.2 218.6 L1910.3 215.2 L1913.1 212.0 L1916.6 209.4 L1920.7 207.3 L1925.2 205.8 L1930.0 205.0 L1934.9 204.8 L1939.6 205.0 L1944.2 205.3 L1948.5 205.6 L1952.7 205.6 L1956.9 205.3 L1961.3 204.7 L1966.1 203.8 L1971.3 202.9 L1977.0 202.1 L1983.0 201.9 L1989.1 202.4 L1994.8 203.8 L1999.7 206.2 L2003.6 209.6 L2006.1 213.7 L2007.0 218.4 L2006.3 223.3 L2004.4 228.1 L2001.6 232.6 L1998.3 236.6 L1995.0 239.9 L1992.4 242.8"/><path d="M2000.9 242.8 L1998.8 245.9 L1998.0 249.0 L1998.6 252.4 L2000.3 256.3 L2002.6 260.9 L2005.0 266.3 L2006.8 272.3 L2007.5 278.6 L2006.7 284.8 L2004.1 290.5 L1999.8 295.2 L1994.0 298.5 L1987.1 300.3 L1979.7 300.6 L1972.2 299.4 L1965.0 297.2 L1958.4 294.3 L1952.7 291.1 L1947.6 288.1 L1943.0 285.6 L1938.5 283.8 L1934.0 282.7 L1929.1 282.1 L1923.8 281.8 L1917.9 281.4 L1911.7 280.8 L1905.5 279.5 L1899.6 277.5 L1894.4 274.6 L1890.2 270.9 L1887.2 266.5 L1885.6 261.8 L1885.1 256.9 L1885.6 252.0 L1886.9 247.3 L1888.5 242.8 L1890.1 238.6 L1891.7 234.4 L1893.1 230.4 L1894.3 226.3 L1895.4 222.0 L1896.9 217.7 L1898.7 213.4 L1901.3 209.3 L1904.7 205.5 L1908.9 202.2 L1913.8 199.6 L1919.3 197.9 L1925.2 196.9 L1931.1 196.7 L1936.8 196.8 L1942.3 197.2 L1947.6 197.6 L1952.7 197.6 L1957.8 197.3 L1963.2 196.5 L1969.0 195.4 L1975.4 194.3 L1982.3 193.4 L1989.5 193.1 L1996.9 193.7 L2003.8 195.4 L2009.8 198.3 L2014.5 202.4 L2017.5 207.5 L2018.6 213.2 L2017.8 219.2 L2015.5 225.0 L2012.0 230.4 L2008.0 235.2 L2004.1 239.3 L2000.9 242.8" stroke-dasharray="16 3"/></g></svg>
<div class="card" style="left:6px;top:131px;width:1253px;height:382px"></div>
<div class="card" style="left:6px;top:525px;width:1253px;height:381px"></div>
<div class="ct" style="left:19px;top:141px">Income by Quarter</div>
<div class="ct" style="left:19px;top:535px;letter-spacing:-0.11px">Rate Strength</div>
<svg class="a" style="left:0;top:0" width="1898" height="952" viewBox="0 0 1898 952" font-family="Liberation Sans"><line x1="319.4" y1="205" x2="319.4" y2="466" stroke="#e5ecf4" stroke-width="1"/><line x1="407.55" y1="205" x2="407.55" y2="466" stroke="#e5ecf4" stroke-width="1"/><line x1="495.7" y1="205" x2="495.7" y2="466" stroke="#e5ecf4" stroke-width="1"/><line x1="583.85" y1="205" x2="583.85" y2="466" stroke="#e5ecf4" stroke-width="1"/><line x1="672" y1="205" x2="672" y2="466" stroke="#e5ecf4" stroke-width="1"/><line x1="760.15" y1="205" x2="760.15" y2="466" stroke="#e5ecf4" stroke-width="1"/><line x1="848.3" y1="205" x2="848.3" y2="466" stroke="#e5ecf4" stroke-width="1"/><line x1="936.45" y1="205" x2="936.45" y2="466" stroke="#e5ecf4" stroke-width="1"/><text x="318.4" y="200" font-size="12" fill="#706e6b" text-anchor="start">0</text><text x="407.55" y="200" font-size="12" fill="#706e6b" text-anchor="middle">60<tspan font-size="10">K</tspan></text><text x="495.7" y="200" font-size="12" fill="#706e6b" text-anchor="middle">120<tspan font-size="10">K</tspan></text><text x="583.85" y="200" font-size="12" fill="#706e6b" text-anchor="middle">180<tspan font-size="10">K</tspan></text><text x="672" y="200" font-size="12" fill="#706e6b" text-anchor="middle">240<tspan font-size="10">K</tspan></text><text x="760.15" y="200" font-size="12" fill="#706e6b" text-anchor="middle">300<tspan font-size="10">K</tspan></text><text x="848.3" y="200" font-size="12" fill="#706e6b" text-anchor="middle">360<tspan font-size="10">K</tspan></text><text x="937.45" y="200" font-size="12" fill="#706e6b" text-anchor="end">420<tspan font-size="10">K</tspan></text><text x="627" y="179" font-size="12" fill="#16325c" text-anchor="middle" style="fill:#1a1a1a">Sum of Brokerage Amount</text><rect x="319" y="207.8" width="418" height="18.6" fill="#00a1e0"/><text x="309" y="221.8" font-size="12" fill="#222" text-anchor="end">2019</text><rect x="319" y="227.6" width="539" height="18.6" fill="#16325c"/><text x="309" y="241.6" font-size="12" fill="#222" text-anchor="end">2020</text><rect x="319" y="247.4" width="597" height="18.6" fill="#76ded9"/><text x="309" y="261.4" font-size="12" fill="#222" text-anchor="end">2021</text><text x="256.5" y="221.8" font-size="12" fill="#222">Q1</text><rect x="319" y="274.2" width="187" height="18.6" fill="#00a1e0"/><text x="309" y="288.2" font-size="12" fill="#222" text-anchor="end">2019</text><rect x="319" y="294" width="240" height="18.6" fill="#16325c"/><text x="309" y="308" font-size="12" fill="#222" text-anchor="end">2020</text><rect x="319" y="313.8" width="171" height="18.6" fill="#76ded9"/><text x="309" y="327.8" font-size="12" fill="#222" text-anchor="end">2021</text><text x="256.5" y="288.2" font-size="12" fill="#222">Q2</text><line x1="251" y1="270.2" x2="314" y2="270.2" stroke="#c9d7e8" stroke-width="1"/><rect x="319" y="340" width="75.5" height="18.6" fill="#00a1e0"/><text x="309" y="354" font-size="12" fill="#222" text-anchor="end">2019</text><rect x="319" y="359.8" width="74" height="18.6" fill="#16325c"/><text x="309" y="373.8" font-size="12" fill="#222" text-anchor="end">2020</text><text x="309" y="393.6" font-size="12" fill="#222" text-anchor="end">2021</text><text x="256.5" y="354" font-size="12" fill="#222">Q3</text><line x1="251" y1="336" x2="314" y2="336" stroke="#c9d7e8" stroke-width="1"/><rect x="319" y="405.6" width="168" height="18.6" fill="#00a1e0"/><text x="309" y="419.6" font-size="12" fill="#222" text-anchor="end">2019</text><rect x="319" y="425.4" width="401" height="18.6" fill="#16325c"/><text x="309" y="439.4" font-size="12" fill="#222" text-anchor="end">2020</text><text x="309" y="459.2" font-size="12" fill="#222" text-anchor="end">2021</text><text x="256.5" y="419.6" font-size="12" fill="#222">Q4</text><line x1="251" y1="401.6" x2="314" y2="401.6" stroke="#c9d7e8" stroke-width="1"/><text transform="translate(244.5 336) rotate(-90)" font-size="12" fill="#222"text-anchor="middle">Inception Quarter &gt; Inception year</text><text x="1024" y="178" font-size="12" fill="#706e6b" text-anchor="end">Inception year</text><text x="1002" y="203" font-size="12" fill="#080707" text-anchor="end">2019</text><rect x="1012" y="193" width="12" height="12" rx="2" fill="#00a1e0"/><text x="1002" y="225" font-size="12" fill="#080707" text-anchor="end">2020</text><rect x="1012" y="215" width="12" height="12" rx="2" fill="#16325c"/><text x="1002" y="247" font-size="12" fill="#080707" text-anchor="end">2021</text><rect x="1012" y="237" width="12" height="12" rx="2" fill="#76ded9"/><line x1="291" y1="562.5" x2="1031" y2="562.5" stroke="#e5ecf4" stroke-width="1"/><text x="286" y="571.5" font-size="12" fill="#706e6b" text-anchor="end">100</text><line x1="291" y1="643.2" x2="1031" y2="643.2" stroke="#e5ecf4" stroke-width="1"/><text x="286" y="647.2" font-size="12" fill="#706e6b" text-anchor="end">50</text><line x1="291" y1="723.6" x2="1031" y2="723.6" stroke="#e5ecf4" stroke-width="1"/><text x="286" y="720.6" font-size="12" fill="#706e6b" text-anchor="end">0</text><rect x="294" y="571" width="67" height="152.6" fill="#00a1e0"/><text transform="translate(331.5 742) rotate(-45)" font-size="12" fill="#3e3e3c" text-anchor="end">Buildings</text><rect x="377.65" y="576" width="67" height="147.6" fill="#00a1e0"/><text transform="translate(415.15 742) rotate(-45)" font-size="12" fill="#3e3e3c" text-anchor="end">Commercial Property</text><rect x="461.3" y="574" width="67" height="149.6" fill="#00a1e0"/><text transform="translate(498.8 742) rotate(-45)" font-size="12" fill="#3e3e3c" text-anchor="end">Cyber Liability</text><rect x="544.95" y="582" width="67" height="141.6" fill="#00a1e0"/><text transform="translate(582.45 742) rotate(-45)" font-size="12" fill="#3e3e3c" text-anchor="end">Employers Liability</text><rect x="628.6" y="566" width="67" height="157.6" fill="#00a1e0"/><text transform="translate(666.1 742) rotate(-45)" font-size="12" fill="#3e3e3c" text-anchor="end">Marine - Cargo</text><rect x="712.25" y="573.6" width="67" height="150" fill="#00a1e0"/><text transform="translate(749.75 742) rotate(-45)" font-size="12" fill="#3e3e3c" text-anchor="end">Motor Fleet</text><rect x="795.9" y="595.2" width="67" height="128.4" fill="#00a1e0"/><text transform="translate(833.4 742) rotate(-45)" font-size="12" fill="#3e3e3c" text-anchor="end">Property</text><rect x="879.55" y="590.5" width="67" height="133.1" fill="#00a1e0"/><text transform="translate(917.05 742) rotate(-45)" font-size="12" fill="#3e3e3c" text-anchor="end">Public Liability</text><rect x="963.2" y="587.2" width="67" height="136.4" fill="#00a1e0"/><text transform="translate(1000.7 742) rotate(-45)" font-size="12" fill="#3e3e3c" text-anchor="end">Terrorism</text><text x="662" y="851" font-size="12" fill="#080707" text-anchor="middle">Team Name</text><text transform="translate(244 643) rotate(-90)" font-size="12" fill="#080707" text-anchor="middle">Bound / Booked %</text></svg>
<div class="t link" style="left:232px;top:484px;font-size:12px;letter-spacing:-0.16px">View Report</div>
<div class="t" style="left:894px;top:484px;font-size:12px;color:#54698d;letter-spacing:-0.14px">As of Today at 12:38</div>
<svg class="a" style="left:1007px;top:478px" width="21" height="21" viewBox="1007 478 21 21"><path d="M1019.65 486.15 A4.9 4.9 0 1 0 1019.05 493.05" fill="none" stroke="#706e6b" stroke-width="1.8"/><path d="M1020.40 483.30 L1022.00 483.30 L1022.00 488.80 L1016.20 488.80 L1016.20 487.20 L1020.40 487.20 Z" fill="#706e6b"/></svg>
<div class="t link" style="left:232px;top:877px;font-size:12px;letter-spacing:-0.16px">View Report</div>
<div class="t" style="left:894px;top:877px;font-size:12px;color:#54698d;letter-spacing:-0.14px">As of Today at 12:38</div>
<svg class="a" style="left:1007px;top:871px" width="21" height="21" viewBox="1007 871 21 21"><path d="M1019.65 879.15 A4.9 4.9 0 1 0 1019.05 886.05" fill="none" stroke="#706e6b" stroke-width="1.8"/><path d="M1020.40 876.30 L1022.00 876.30 L1022.00 881.80 L1016.20 881.80 L1016.20 880.20 L1020.40 880.20 Z" fill="#706e6b"/></svg>
<div class="card" style="left:1271px;top:131px;width:614px;height:219px"></div>
<div class="card" style="left:1271px;top:362px;width:614px;height:131px"></div>
<div class="card" style="left:1271px;top:505px;width:614px;height:159px"></div>
<div class="card" style="left:1271px;top:676px;width:614px;height:260px"></div>
<div class="a" style="left:1884px;top:119px;width:14px;height:33px;background:rgba(180,200,225,.55);border-radius:4px 0 0 4px"></div>
<div class="a" style="left:1887px;top:122px;width:11px;height:26px;background:#3a6ea8"></div>
<div class="a" style="left:1890px;top:129px;width:0;height:0;border-top:6px solid transparent;border-bottom:6px solid transparent;border-right:6px solid #9ab3d3"></div>
<div class="ct" style="left:1284px;top:141px;letter-spacing:-0.47px">Today's Events</div>
<div class="hr" style="left:1272px;top:315px;width:612px"></div>
<div class="t" style="left:1272px;width:612px;text-align:center;top:293px;font-size:13px;color:#181818">Looks like you're free and clear the rest of the day.</div>
<div class="t link" style="left:1272px;width:612px;text-align:center;top:327px;font-size:13px;letter-spacing:-0.18px">View Calendar</div>
<svg class="a" style="left:1440px;top:160px" width="280" height="120" viewBox="1440 160 280 120">
<g transform="translate(1480 162) scale(0.0630)" fill="none" stroke-linecap="round">
<circle cx="530" cy="450" r="175" fill="#c2e8ff" stroke="#8ed1f8" stroke-width="45"/>
<path d="M781.0 428.0 A252 252 0 1 1 758.4 343.5" stroke="#c2e8ff" stroke-width="42"/>
<path d="M670.3 765.2 A345 345 0 1 1 778.2 689.7" stroke="#c2e8ff" stroke-width="42"/>
</g>
<path d="M1451 271.4 L1459.5 271.4 M1464.5 271.4 L1704.5 271.4" stroke="#8ed1f8" stroke-width="2.6" stroke-linecap="round" fill="none"/>
<g transform="translate(1470 215) scale(0.06321)">
<g fill="#c2e8ff">
<path d="M80 875 L150 600 L215 875Z"/><path d="M200 875 L250 665 L295 875Z"/>
<path d="M385 875 L380 680 L392 560 L380 500 L400 450 L440 400 L458 300 L470 288 L535 288 L560 320 L548 390 L578 462 L602 520 L612 580 L662 610 L645 632 L602 642 L618 800 L645 875 L540 875 L480 822 L472 875Z"/>
<path d="M718 875 L688 770 L728 732 L700 668 L712 598 L735 570 L762 588 L832 588 L862 578 L872 650 L860 702 L822 742 L872 792 L842 810 L835 875Z"/>
<path d="M1020 875 C1030 820 1080 790 1140 792 C1160 700 1240 625 1330 628 C1420 630 1480 680 1505 705 C1530 690 1570 695 1600 712 C1630 640 1700 580 1770 565 L1898 560 L1898 875Z"/>
</g>
<g fill="none" stroke="#c2e8ff" stroke-width="42" stroke-linecap="round" stroke-linejoin="round">
<path d="M262 860 L965 118 L1410 558"/>
<path d="M832 290 L898 300 L1010 410 L1080 342 L1152 408 L1198 368"/>
<path d="M1345 462 L1500 340 L1745 568"/>
</g>
</g>
<g transform="translate(1570 195) scale(0.08403)">
<g fill="#c2e8ff">
<path d="M270 560 L625 560 L830 890 L440 890Z"/><path d="M60 890 L240 560 L420 890Z"/>
<path d="M0 890 L0 770 C20 720 70 680 140 662 L300 700 L60 890Z"/>
<path d="M780 890 L790 660 L1240 830 C1290 840 1320 870 1330 890Z"/>
<path d="M790 800 L910 330 L1045 790 L1125 520 L1225 810Z"/>
</g>
<g fill="none" stroke="#c2e8ff" stroke-width="36" stroke-linecap="round">
<path d="M0 545 L140 665"/>
<path d="M342 62 C370 75 392 100 392 140 M392 118 C410 100 450 105 478 125"/>
<path d="M522 242 C545 230 580 235 605 265 C615 235 640 210 672 207"/>
</g>
<g fill="none" stroke="#8ed1f8" stroke-width="36" stroke-linecap="round" stroke-linejoin="round">
<path d="M45 890 L240 500 L440 890 M240 500 L240 890 M240 500 L640 500 L840 890"/>
<path d="M28 822 L28 890 M455 822 L455 890"/>
<path d="M760 815 L910 292 L1050 790 M910 292 L910 890 M760 815 L1230 815 L1125 492 L1050 790 M1125 492 L1125 890 M852 555 L910 620 M910 700 L990 612 M1125 760 L1165 705"/>
</g>
</g>
</svg>
<div class="ct" style="left:1284px;top:372px;letter-spacing:-0.61px">Today’s Tasks</div>
<div class="btn" style="left:1818px;top:371px;width:54px;height:32px"></div>
<svg class="a" style="left:1826px;top:378px" width="40" height="18" viewBox="1826 378 40 18"><g fill="#706e6b">
<rect x="1830.1" y="382" width="10.6" height="1.7"/><rect x="1833.2" y="385.3" width="7.5" height="1.7"/><rect x="1835.3" y="388.5" width="5.4" height="1.6" rx="0.8"/>
<rect x="1829.9" y="385.3" width="1.5" height="6"/><path d="M1827.2 389.4 L1834.1 389.4 L1830.65 392.8Z"/>
<path d="M1851.1 383.9 L1860.8 383.9 L1855.95 389.9Z"/></g></svg>
<div class="a" style="left:1300px;top:413px;width:16px;height:16px;border:1px solid #c9c7c5;border-radius:2px;background:#fff"></div>
<div class="t" style="left:1320px;top:416px;font-size:13px;color:#080707">[No subject]</div>
<div class="t" style="left:1829px;top:416px;font-size:12px;color:#3e3e3c;letter-spacing:-0.21px">Today</div>
<div class="t link" style="left:1321px;top:437px;font-size:12px;letter-spacing:-0.20px">20PR00002231 Section - A - Subclass Section1</div>
<div class="hr" style="left:1272px;top:458px;width:612px"></div>
<div class="t link" style="left:1272px;width:612px;text-align:center;top:470px;font-size:13px">View All</div>
<div class="ct" style="left:1284px;top:515px">Items to Approve</div>
<div class="t link" style="left:1284px;top:542px;font-size:13px">Marine Quotation 2020</div>
<div class="t" style="left:1284px;top:563px;font-size:12px;color:#3e3e3c">Quotation</div>
<div class="a" style="left:1345px;top:567px;width:2px;height:2px;background:#2a3f66"></div>
<div class="t" style="left:1356px;top:563px;font-size:12px;color:#3e3e3c">Submitted by Gino Weller</div>
<div class="t link" style="left:1284px;top:587px;font-size:13px">Renewal Application - Directors &amp; Officers - Intel Ltd - 30000488</div>
<div class="t" style="left:1284px;top:608px;font-size:12px;color:#3e3e3c">Quotation</div>
<div class="a" style="left:1345px;top:612px;width:2px;height:2px;background:#2a3f66"></div>
<div class="t" style="left:1356px;top:608px;font-size:12px;color:#3e3e3c">Submitted by Paul Evans</div>
<div class="btn" style="left:1852px;top:541px;width:20px;height:20px"></div>
<div class="a" style="left:1857px;top:549px;width:0;height:0;border-left:5px solid transparent;border-right:5px solid transparent;border-top:6px solid #706e6b"></div>
<div class="btn" style="left:1852px;top:586px;width:20px;height:20px"></div>
<div class="a" style="left:1857px;top:594px;width:0;height:0;border-left:5px solid transparent;border-right:5px solid transparent;border-top:6px solid #706e6b"></div>
<div class="hr" style="left:1272px;top:629px;width:612px"></div>
<div class="t link" style="left:1272px;width:612px;text-align:center;top:641px;font-size:13px">View All</div>
<div class="t" style="left:1288px;top:696px;font-size:12px;color:#3e3e3c;letter-spacing:-0.13px">Sort by:</div>
<div class="btn" style="left:1288px;top:711px;width:113px;height:32px;border-color:#c9c7c5"></div>
<div class="t" style="left:1301px;top:721px;font-size:13px;color:#080707;letter-spacing:-0.41px">Latest Posts</div>
<div class="a" style="left:1380px;top:724px;width:0;height:0;border-left:6px solid transparent;border-right:6px solid transparent;border-top:7px solid #706e6b"></div>
<div class="btn" style="left:1528px;top:711px;width:300px;height:32px;border-color:#c9c7c5"></div>
<svg class="a" style="left:1540px;top:720px" width="14" height="14" viewBox="0 0 14 14"><circle cx="5.8" cy="5.8" r="4.3" fill="none" stroke="#9a9896" stroke-width="1.5"/><path d="M9 9 L13 13" stroke="#9a9896" stroke-width="1.7" stroke-linecap="round"/></svg>
<div class="t" style="left:1561px;top:721px;font-size:13px;color:#7e7c7a;letter-spacing:-0.29px">Search this feed...</div>
<div class="btn" style="left:1836px;top:711px;width:32px;height:32px;border-color:#c9c7c5"></div>
<svg class="a" style="left:1842px;top:716px" width="21" height="21" viewBox="1842 716 21 21"><path d="M1855.35 724.05 A4.9 4.9 0 1 0 1854.75 730.95" fill="none" stroke="#706e6b" stroke-width="1.6"/><path d="M1856.50 721.20 L1858.00 721.20 L1858.00 726.60 L1852.40 726.60 L1852.40 725.10 L1856.50 725.10 Z" fill="#706e6b"/></svg>
<svg class="a" style="left:1284px;top:750px" width="40" height="40" viewBox="1284 750 40 40">
<defs><clipPath id="cav2"><ellipse cx="1304" cy="772" rx="14" ry="14.8"/></clipPath></defs>
<g clip-path="url(#cav2)"><g transform="translate(1304.4 755)"><path d="M-14 33 C-14 26 -12 19.5 -7 17.5 L-3 16.6 L4 16.6 L8 18 C12 20 14.5 25 15 33Z" fill="#17181e"/><path d="M-3.6 16.8 L4.4 16.8 L1.2 32 L-1.6 32Z" fill="#a8c1dc"/><path d="M-0.9 20.5 L1.3 20.5 L1.1 32 L-2.2 31Z" fill="#a5192b"/><rect x="-3.2" y="13" width="6.6" height="5" fill="#c98d72"/><ellipse cx="0.4" cy="9.3" rx="5.9" ry="8.4" fill="#cf9a80"/><path d="M-5.8 7.5 C-6.2 1.5 -3 -0.2 0.5 -0.2 C4.5 -0.2 6.8 2 6.4 7.5 C5.5 4.5 4 3.2 0.4 3.2 C-3 3.2 -4.8 4.5 -5.8 7.5Z" fill="#9d8c7c"/><ellipse cx="-2" cy="8.5" rx="1" ry="0.5" fill="#8a6a5a"/><ellipse cx="2.8" cy="8.5" rx="1" ry="0.5" fill="#8a6a5a"/></g></g></svg>
<div class="t link" style="left:1331px;top:759px;font-size:13px;border-bottom:1px dotted #706e6b;padding-bottom:1px;letter-spacing:-0.10px">Gino Weller</div>
<div class="t" style="left:1331px;top:777px;font-size:12px;color:#3e3e3c;letter-spacing:-0.10px">26 November 2020 at 08:37</div>
<svg class="a" style="left:1851px;top:747px" width="25" height="25" viewBox="0 0 25 25"><path d="M0 0 L25 0 L25 25Z" fill="#04844b"/><path d="M18.5 1.5 l1.6 3.6 3.9.4-2.9 2.6.8 3.8-3.4-2-3.4 2 .8-3.8-2.9-2.6 3.9-.4z" fill="#fff"/></svg>
<div class="btn" style="left:1848px;top:755px;width:20px;height:20px"></div>
<div class="a" style="left:1853px;top:763px;width:0;height:0;border-left:5px solid transparent;border-right:5px solid transparent;border-top:6px solid #706e6b"></div>
<div class="t" style="left:1288px;top:802px;font-size:13px;color:#080707">As all of you know, we have recently launched a new Cyber Liability product together with AXA as the</div>
<div class="t" style="left:1288px;top:821.7px;font-size:13px;color:#080707">underwriter. We have shared various training materials and would like you to participate in this short</div>
<div class="t" style="left:1288px;top:841.4px;font-size:13px;color:#080707">survey. It is important for the group to make sure you have all the information required to sell this</div>
<div class="t" style="left:1288px;top:861.1px;font-size:13px;color:#080707">product effectively. Please rate how useful the training materials were:</div>
<div class="a" style="left:1288px;top:884px;width:580px;height:60px;border:1px solid #dddbda;border-radius:4px"></div>
<div class="t" style="left:1296px;top:896px;font-size:13px;color:#080707;letter-spacing:-0.14px">Very useful. I have everything I need. (2)</div>
<div class="a" style="left:1296px;top:914px;width:510px;height:8px;background:#f3f2f2;border-radius:4px"></div>
<div class="t" style="left:1836px;top:913px;font-size:12px;color:#080707">90%</div>
<div class="a" style="left:0;top:917px;width:1898px;height:35px;background:#fff;box-shadow:0 -1px 3px rgba(0,0,0,.12)"></div>
<div class="a" style="left:1897px;top:29px;width:1px;height:923px;background:#f4f6f9"></div>
<svg class="a" style="left:8px;top:931px" width="11" height="14" viewBox="0 0 11 14"><path d="M7 0 L0.8 7.8 L4.6 7.8 L3.2 14 L10 5.6 L6 5.6 L7.6 0Z" fill="#080707"/></svg>
<div class="t" style="left:28px;top:931px;font-size:13px;color:#080707;letter-spacing:-0.24px">Report Chart</div>
<svg class="a" style="left:129px;top:931px" width="11" height="14" viewBox="0 0 11 14"><path d="M7 0 L0.8 7.8 L4.6 7.8 L3.2 14 L10 5.6 L6 5.6 L7.6 0Z" fill="#080707"/></svg>
<div class="t" style="left:149px;top:931px;font-size:13px;color:#080707;letter-spacing:-0.32px">Chatter Feed</div>
</body></html>
